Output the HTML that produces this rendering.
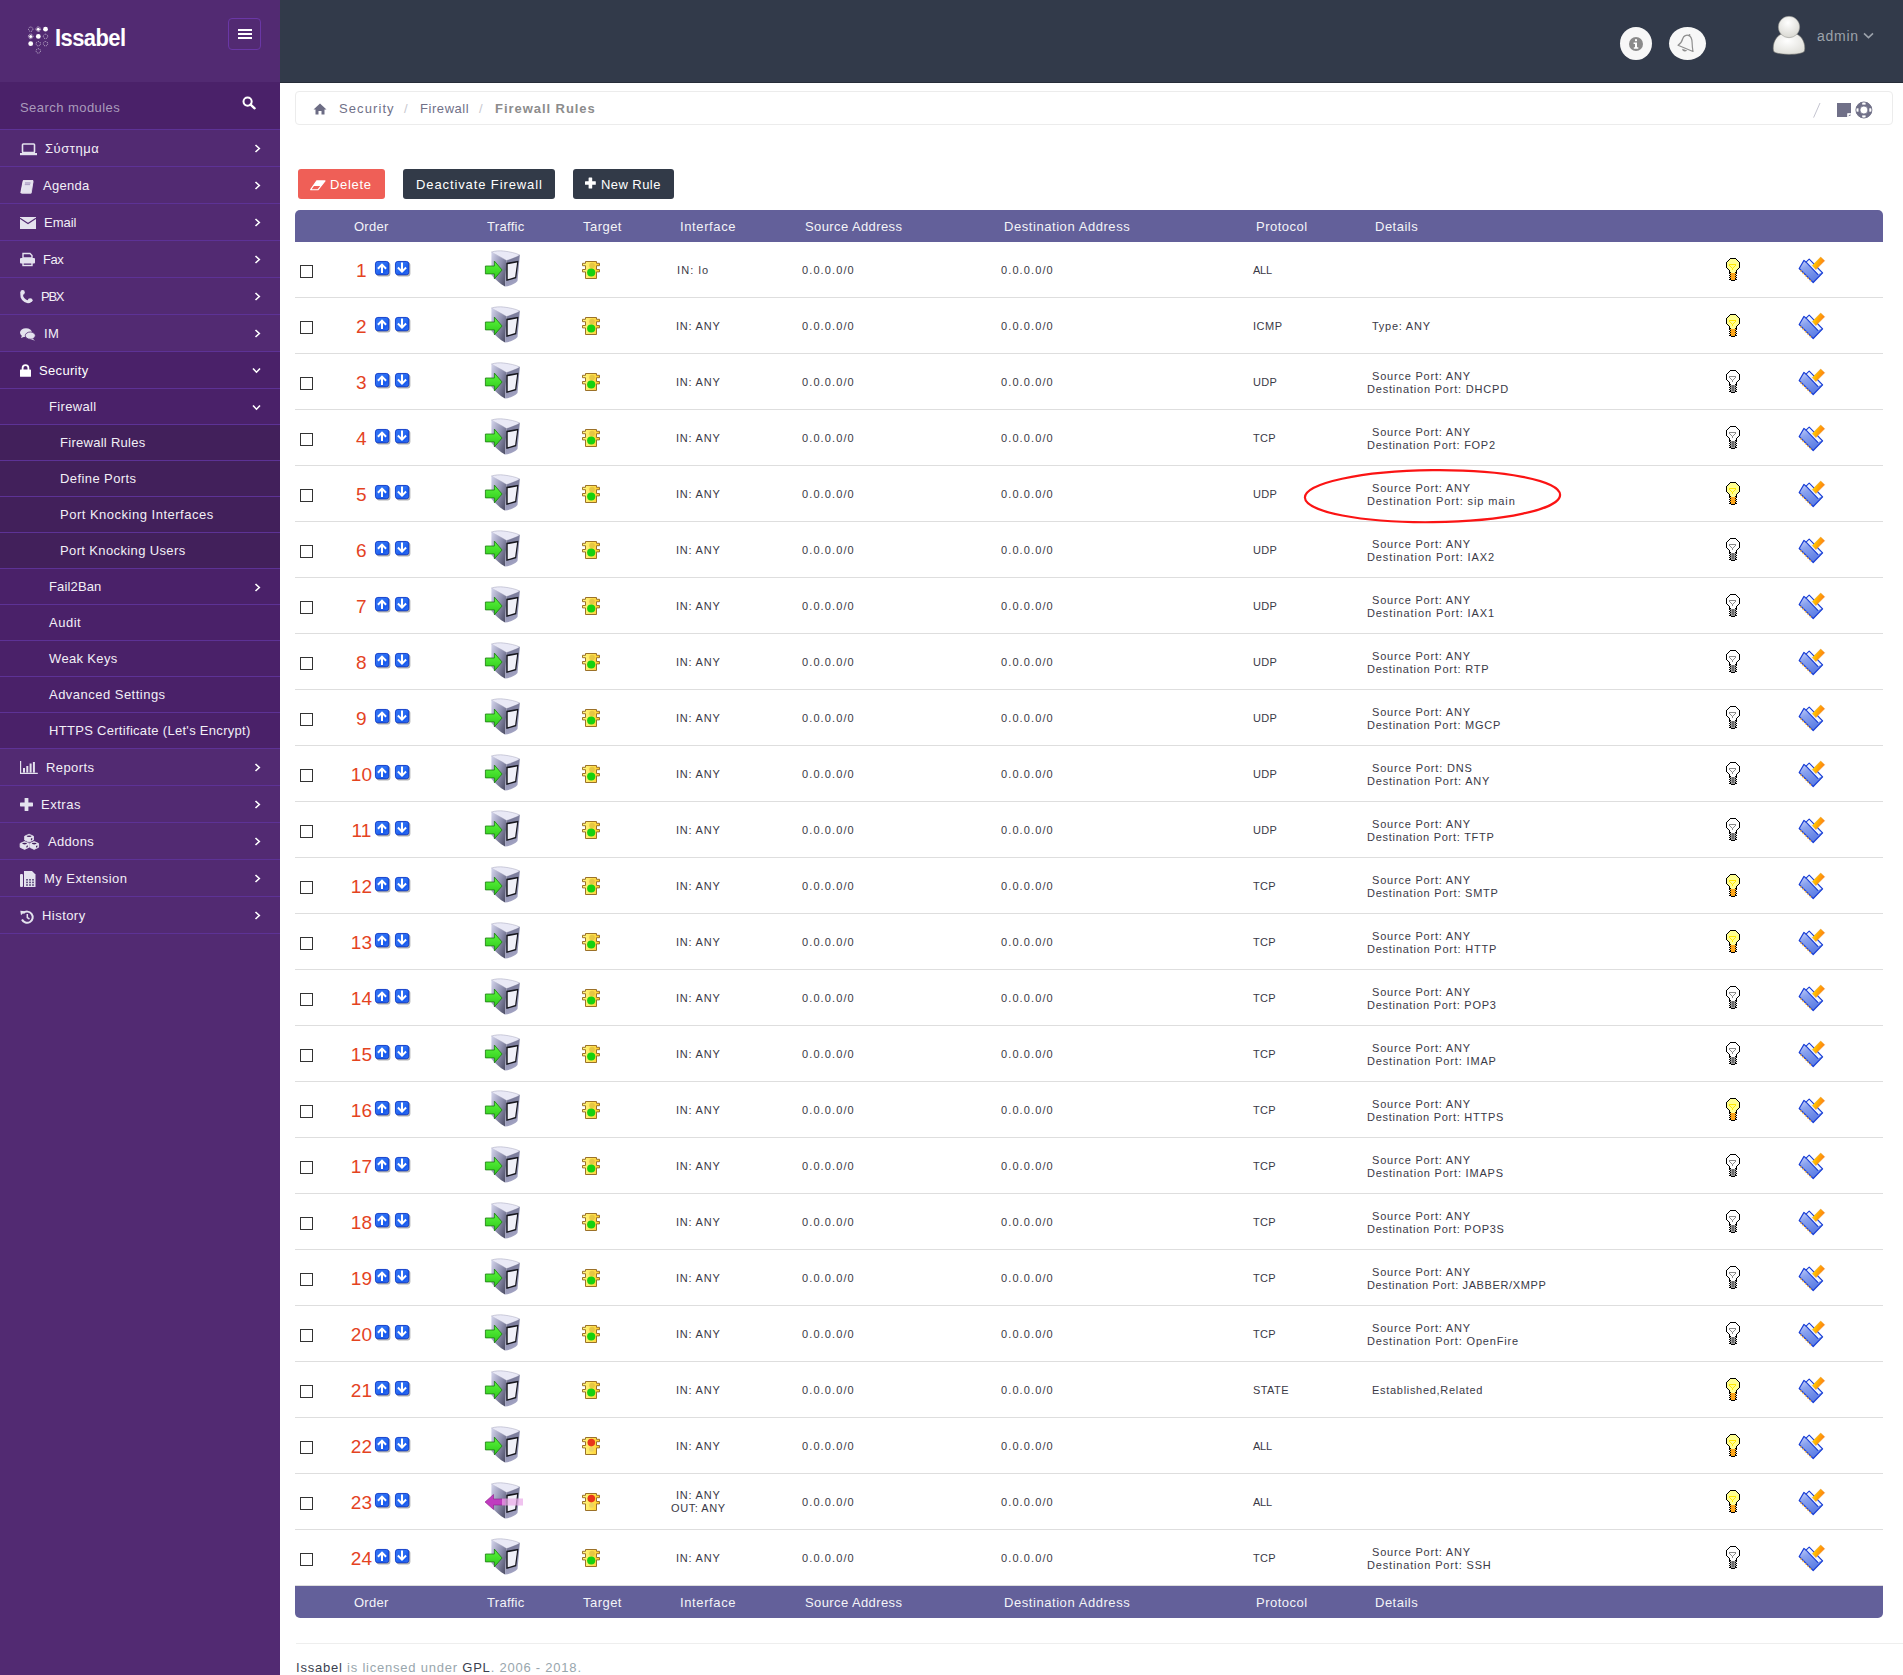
<!DOCTYPE html>
<html><head><meta charset="utf-8"><title>Issabel - Firewall Rules</title>
<style>
html,body{margin:0;padding:0;}
body{width:1903px;height:1675px;overflow:hidden;position:relative;background:#fff;font-family:"Liberation Sans", sans-serif;}
.r{position:absolute;box-sizing:content-box;}
.t{position:absolute;white-space:nowrap;font-family:"Liberation Sans", sans-serif;}
svg{display:block;overflow:visible;}
</style></head><body>
<svg style="position:absolute;left:0;top:0" width="0" height="0"><defs><radialGradient id="av1" cx="0.45" cy="0.3" r="0.7"><stop offset="0" stop-color="#ffffff"/><stop offset="1" stop-color="#d9d8d2"/></radialGradient><radialGradient id="av2" cx="0.45" cy="0.35" r="0.75"><stop offset="0" stop-color="#ffffff"/><stop offset="1" stop-color="#dcdbd5"/></radialGradient><linearGradient id="gL" x1="0" y1="0" x2="1" y2="0"><stop offset="0" stop-color="#fffb86"/><stop offset="1" stop-color="#ffcc2a"/></linearGradient><linearGradient id="gA" x1="0" y1="0" x2="1" y2="1"><stop offset="0" stop-color="#2f72f4"/><stop offset="0.45" stop-color="#2a6df2"/><stop offset="0.7" stop-color="#1659ee"/><stop offset="1" stop-color="#3a74f0"/></linearGradient><linearGradient id="gIn" x1="0" y1="0" x2="1" y2="0.8"><stop offset="0" stop-color="#d4d5ec"/><stop offset="0.55" stop-color="#9091b0"/><stop offset="1" stop-color="#4f5068"/></linearGradient><linearGradient id="gFr" x1="0" y1="0" x2="0.3" y2="1"><stop offset="0" stop-color="#6e6f8e"/><stop offset="1" stop-color="#a2a3c2"/></linearGradient><linearGradient id="gAr" x1="0" y1="0" x2="0" y2="1"><stop offset="0" stop-color="#5af53c"/><stop offset="1" stop-color="#2fc81c"/></linearGradient><linearGradient id="gE" x1="0" y1="0" x2="0.5" y2="1"><stop offset="0" stop-color="#d6dcfb"/><stop offset="0.4" stop-color="#8aa2ee"/><stop offset="1" stop-color="#5b7de4"/></linearGradient><linearGradient id="gP" x1="0" y1="0" x2="1" y2="0.4"><stop offset="0" stop-color="#fff600"/><stop offset="0.5" stop-color="#ffb000"/><stop offset="1" stop-color="#ff7a18"/></linearGradient></defs></svg><div class="r" style="left:0px;top:0px;width:280px;height:1675px;background:#522a72;"></div><div class="r" style="left:0px;top:82px;width:280px;height:47px;background:#4a2169;"></div><div class="r" style="left:0px;top:129px;width:280px;height:1px;background:#5d3296;"></div><svg class="r" style="left:20px;top:20px" width="36" height="40" viewBox="0 0 36 40"><circle cx="10.7" cy="9.2" r="2.2" fill="none" stroke="#fff" stroke-width="0.6" stroke-dasharray="1 0.8"/><circle cx="18.3" cy="9.2" r="2.3" fill="none" stroke="#fff" stroke-width="0.7" stroke-dasharray="0.9 0.5"/><circle cx="18.3" cy="9.2" r="1.5" fill="#fff"/><circle cx="25.5" cy="9.2" r="2.4" fill="#fff"/><circle cx="10.7" cy="16.4" r="2.3" fill="none" stroke="#fff" stroke-width="0.7" stroke-dasharray="0.9 0.5"/><circle cx="10.7" cy="16.4" r="1.5" fill="#fff"/><circle cx="18.3" cy="16.4" r="2.4" fill="#fff"/><circle cx="25.5" cy="16.4" r="2.2" fill="none" stroke="#fff" stroke-width="0.6" stroke-dasharray="1 0.8"/><circle cx="10.7" cy="23.7" r="2.4" fill="#fff"/><circle cx="18.3" cy="23.7" r="2.2" fill="none" stroke="#fff" stroke-width="0.6" stroke-dasharray="1 0.8"/><circle cx="25.5" cy="23.7" r="2.2" fill="none" stroke="#fff" stroke-width="0.6" stroke-dasharray="1 0.8"/><circle cx="18.3" cy="30.9" r="2.2" fill="none" stroke="#fff" stroke-width="0.6" stroke-dasharray="1 0.8"/></svg><div class="t" style="left:55px;top:27px;font-size:23px;line-height:23px;color:#fff;letter-spacing:-0.6px;font-weight:bold;transform:scaleX(0.955);transform-origin:0 0;">Issabel</div><div class="r" style="left:228px;top:18px;width:31px;height:30px;border:1px solid #6a37a6;border-radius:4px"></div><div class="r" style="left:238px;top:29px;width:14px;height:2px;background:#fff;"></div><div class="r" style="left:238px;top:33px;width:14px;height:2px;background:#fff;"></div><div class="r" style="left:238px;top:37px;width:14px;height:2px;background:#fff;"></div><div class="t" style="left:20px;top:101px;font-size:13px;line-height:13px;color:#a99bbb;letter-spacing:0.45px;font-weight:normal;">Search modules</div><svg class="r" style="left:242px;top:96px" width="15" height="14" viewBox="0 0 15 14"><circle cx="5.6" cy="5.6" r="4.1" fill="none" stroke="#fff" stroke-width="2"/><line x1="8.6" y1="8.6" x2="12.6" y2="12.3" stroke="#fff" stroke-width="2.4" stroke-linecap="round"/></svg><div class="r" style="left:0px;top:166px;width:280px;height:1px;background:#5d3296;"></div><svg class="r" style="left:20px;top:143px" width="17" height="13" viewBox="0 0 17 13"><rect x="2.5" y="1" width="12" height="8.5" rx="0.8" fill="none" stroke="#e4e2ee" stroke-width="1.6"/><rect x="0" y="10" width="17" height="2.2" fill="#e4e2ee"/></svg><div class="t" style="left:45px;top:142px;font-size:13px;line-height:13px;color:#f2eff7;letter-spacing:0.53px;font-weight:normal;">Σύστημα</div><svg class="r" style="left:254px;top:144px" width="7" height="9" viewBox="0 0 7 9"><polyline points="1.5,1 5.3,4.5 1.5,8" fill="none" stroke="#fff" stroke-width="1.6"/></svg><div class="r" style="left:0px;top:203px;width:280px;height:1px;background:#5d3296;"></div><svg class="r" style="left:20px;top:180px" width="14" height="14" viewBox="0 0 14 14"><path d="M3.2 0.6 H13 L10.6 12.8 H0.8 Z" fill="#e4e2ee" stroke="#fff" stroke-width="0.8"/><path d="M13 1.5 L11.2 13.2 H1.5" fill="none" stroke="#e4e2ee" stroke-width="0.9"/><rect x="5" y="2.5" width="5.5" height="1" fill="#9a88b6"/><rect x="4.8" y="4.3" width="5.2" height="0.8" fill="#9a88b6"/></svg><div class="t" style="left:43px;top:179px;font-size:13px;line-height:13px;color:#f2eff7;letter-spacing:0.26px;font-weight:normal;">Agenda</div><svg class="r" style="left:254px;top:181px" width="7" height="9" viewBox="0 0 7 9"><polyline points="1.5,1 5.3,4.5 1.5,8" fill="none" stroke="#fff" stroke-width="1.6"/></svg><div class="r" style="left:0px;top:240px;width:280px;height:1px;background:#5d3296;"></div><svg class="r" style="left:20px;top:217px" width="16" height="12" viewBox="0 0 16 12"><rect x="0" y="0" width="16" height="12" fill="#e4e2ee"/><polyline points="0,1.3 8,6.5 16,1.3" fill="none" stroke="#522a72" stroke-width="1.1"/></svg><div class="t" style="left:44px;top:216px;font-size:13px;line-height:13px;color:#f2eff7;letter-spacing:0.0px;font-weight:normal;">Email</div><svg class="r" style="left:254px;top:218px" width="7" height="9" viewBox="0 0 7 9"><polyline points="1.5,1 5.3,4.5 1.5,8" fill="none" stroke="#fff" stroke-width="1.6"/></svg><div class="r" style="left:0px;top:277px;width:280px;height:1px;background:#5d3296;"></div><svg class="r" style="left:20px;top:253px" width="15" height="13" viewBox="0 0 15 13"><path d="M3 0.5 H10 L12 2.5 V5 H3 Z" fill="none" stroke="#e4e2ee" stroke-width="1.4"/><rect x="0" y="5" width="15" height="5.5" rx="1" fill="#e4e2ee"/><rect x="3" y="9" width="9" height="3.5" fill="none" stroke="#e4e2ee" stroke-width="1.4"/></svg><div class="t" style="left:43px;top:253px;font-size:13px;line-height:13px;color:#f2eff7;letter-spacing:-0.5px;font-weight:normal;">Fax</div><svg class="r" style="left:254px;top:255px" width="7" height="9" viewBox="0 0 7 9"><polyline points="1.5,1 5.3,4.5 1.5,8" fill="none" stroke="#fff" stroke-width="1.6"/></svg><div class="r" style="left:0px;top:314px;width:280px;height:1px;background:#5d3296;"></div><svg class="r" style="left:20px;top:290px" width="14" height="14" viewBox="0 0 14 14"><path d="M2.3 2.2 C0.8 5.5 2.2 9 5.2 10.8 C7.2 12 9 12 10.4 10.6" fill="none" stroke="#e4e2ee" stroke-width="3" stroke-linecap="round"/><ellipse cx="2.6" cy="2.4" rx="2.2" ry="2.3" fill="#e4e2ee"/><ellipse cx="10.2" cy="10.3" rx="2.4" ry="2" fill="#e4e2ee"/></svg><div class="t" style="left:41px;top:290px;font-size:13px;line-height:13px;color:#f2eff7;letter-spacing:-1.28px;font-weight:normal;">PBX</div><svg class="r" style="left:254px;top:292px" width="7" height="9" viewBox="0 0 7 9"><polyline points="1.5,1 5.3,4.5 1.5,8" fill="none" stroke="#fff" stroke-width="1.6"/></svg><div class="r" style="left:0px;top:351px;width:280px;height:1px;background:#5d3296;"></div><svg class="r" style="left:20px;top:328px" width="16" height="13" viewBox="0 0 16 13"><ellipse cx="6" cy="4.6" rx="6" ry="4.3" fill="#e4e2ee"/><path d="M2 7.5 L1 10 L5 8.6 Z" fill="#e4e2ee"/><ellipse cx="10.3" cy="7.6" rx="5" ry="3.6" fill="#e4e2ee" stroke="#522a72" stroke-width="0.8"/><path d="M12.5 10.5 L15 12.8 L10.5 11 Z" fill="#e4e2ee"/></svg><div class="t" style="left:44px;top:327px;font-size:13px;line-height:13px;color:#f2eff7;letter-spacing:0.4px;font-weight:normal;">IM</div><svg class="r" style="left:254px;top:329px" width="7" height="9" viewBox="0 0 7 9"><polyline points="1.5,1 5.3,4.5 1.5,8" fill="none" stroke="#fff" stroke-width="1.6"/></svg><div class="r" style="left:0px;top:352px;width:280px;height:36px;background:#4a2169;"></div><div class="r" style="left:0px;top:388px;width:280px;height:1px;background:#5d3296;"></div><svg class="r" style="left:20px;top:364px" width="11" height="13" viewBox="0 0 11 13"><path d="M2.6 6 V4 A2.9 2.9 0 0 1 8.4 4 V6" fill="none" stroke="#fff" stroke-width="1.8"/><rect x="0" y="5.6" width="11" height="7.2" rx="0.6" fill="#fff"/></svg><div class="t" style="left:39px;top:364px;font-size:13px;line-height:13px;color:#fff;letter-spacing:0.33px;font-weight:normal;">Security</div><svg class="r" style="left:252px;top:367px" width="9" height="7" viewBox="0 0 9 7"><polyline points="1,1.5 4.5,5.2 8,1.5" fill="none" stroke="#fff" stroke-width="1.6"/></svg><div class="r" style="left:0px;top:389px;width:280px;height:35px;background:#4a2169;"></div><div class="r" style="left:0px;top:424px;width:280px;height:1px;background:#5d3296;"></div><div class="t" style="left:49px;top:400px;font-size:13px;line-height:13px;color:#f2eff7;letter-spacing:0.34px;font-weight:normal;">Firewall</div><svg class="r" style="left:252px;top:404px" width="9" height="7" viewBox="0 0 9 7"><polyline points="1,1.5 4.5,5.2 8,1.5" fill="none" stroke="#fff" stroke-width="1.6"/></svg><div class="r" style="left:0px;top:425px;width:280px;height:35px;background:#42205b;"></div><div class="r" style="left:0px;top:460px;width:280px;height:1px;background:#5d3296;"></div><div class="t" style="left:60px;top:436px;font-size:13px;line-height:13px;color:#f2eff7;letter-spacing:0.28px;font-weight:normal;">Firewall Rules</div><div class="r" style="left:0px;top:461px;width:280px;height:35px;background:#42205b;"></div><div class="r" style="left:0px;top:496px;width:280px;height:1px;background:#5d3296;"></div><div class="t" style="left:60px;top:472px;font-size:13px;line-height:13px;color:#f2eff7;letter-spacing:0.41px;font-weight:normal;">Define Ports</div><div class="r" style="left:0px;top:497px;width:280px;height:35px;background:#42205b;"></div><div class="r" style="left:0px;top:532px;width:280px;height:1px;background:#5d3296;"></div><div class="t" style="left:60px;top:508px;font-size:13px;line-height:13px;color:#f2eff7;letter-spacing:0.5px;font-weight:normal;">Port Knocking Interfaces</div><div class="r" style="left:0px;top:533px;width:280px;height:35px;background:#42205b;"></div><div class="r" style="left:0px;top:568px;width:280px;height:1px;background:#5d3296;"></div><div class="t" style="left:60px;top:544px;font-size:13px;line-height:13px;color:#f2eff7;letter-spacing:0.37px;font-weight:normal;">Port Knocking Users</div><div class="r" style="left:0px;top:569px;width:280px;height:35px;background:#4a2169;"></div><div class="r" style="left:0px;top:604px;width:280px;height:1px;background:#5d3296;"></div><div class="t" style="left:49px;top:580px;font-size:13px;line-height:13px;color:#f2eff7;letter-spacing:0.14px;font-weight:normal;">Fail2Ban</div><svg class="r" style="left:254px;top:583px" width="7" height="9" viewBox="0 0 7 9"><polyline points="1.5,1 5.3,4.5 1.5,8" fill="none" stroke="#fff" stroke-width="1.6"/></svg><div class="r" style="left:0px;top:605px;width:280px;height:35px;background:#4a2169;"></div><div class="r" style="left:0px;top:640px;width:280px;height:1px;background:#5d3296;"></div><div class="t" style="left:49px;top:616px;font-size:13px;line-height:13px;color:#f2eff7;letter-spacing:0.5px;font-weight:normal;">Audit</div><div class="r" style="left:0px;top:641px;width:280px;height:35px;background:#4a2169;"></div><div class="r" style="left:0px;top:676px;width:280px;height:1px;background:#5d3296;"></div><div class="t" style="left:49px;top:652px;font-size:13px;line-height:13px;color:#f2eff7;letter-spacing:0.34px;font-weight:normal;">Weak Keys</div><div class="r" style="left:0px;top:677px;width:280px;height:35px;background:#4a2169;"></div><div class="r" style="left:0px;top:712px;width:280px;height:1px;background:#5d3296;"></div><div class="t" style="left:49px;top:688px;font-size:13px;line-height:13px;color:#f2eff7;letter-spacing:0.48px;font-weight:normal;">Advanced Settings</div><div class="r" style="left:0px;top:713px;width:280px;height:35px;background:#4a2169;"></div><div class="r" style="left:0px;top:748px;width:280px;height:1px;background:#5d3296;"></div><div class="t" style="left:49px;top:724px;font-size:13px;line-height:13px;color:#f2eff7;letter-spacing:0.3px;font-weight:normal;">HTTPS Certificate (Let's Encrypt)</div><div class="r" style="left:0px;top:785px;width:280px;height:1px;background:#5d3296;"></div><svg class="r" style="left:20px;top:761px" width="18" height="13" viewBox="0 0 18 13"><path d="M0.6 0 V12.4 H17.8" fill="none" stroke="#e4e2ee" stroke-width="1.2"/><rect x="3" y="7" width="2" height="4.6" fill="#e4e2ee"/><rect x="6.3" y="5" width="2" height="6.6" fill="#e4e2ee"/><rect x="9.6" y="2.5" width="2" height="9.1" fill="#e4e2ee"/><rect x="12.9" y="1" width="2" height="10.6" fill="#e4e2ee"/></svg><div class="t" style="left:46px;top:761px;font-size:13px;line-height:13px;color:#f2eff7;letter-spacing:0.42px;font-weight:normal;">Reports</div><svg class="r" style="left:254px;top:763px" width="7" height="9" viewBox="0 0 7 9"><polyline points="1.5,1 5.3,4.5 1.5,8" fill="none" stroke="#fff" stroke-width="1.6"/></svg><div class="r" style="left:0px;top:822px;width:280px;height:1px;background:#5d3296;"></div><svg class="r" style="left:20px;top:798px" width="13" height="13" viewBox="0 0 13 13"><rect x="4.6" y="0" width="3.8" height="13" rx="0.6" fill="#e4e2ee"/><rect x="0" y="4.6" width="13" height="3.8" rx="0.6" fill="#e4e2ee"/></svg><div class="t" style="left:41px;top:798px;font-size:13px;line-height:13px;color:#f2eff7;letter-spacing:0.52px;font-weight:normal;">Extras</div><svg class="r" style="left:254px;top:800px" width="7" height="9" viewBox="0 0 7 9"><polyline points="1.5,1 5.3,4.5 1.5,8" fill="none" stroke="#fff" stroke-width="1.6"/></svg><div class="r" style="left:0px;top:859px;width:280px;height:1px;background:#5d3296;"></div><svg class="r" style="left:19px;top:834px" width="21" height="16" viewBox="0 0 21 16"><g transform="translate(5.3 0)"><path d="M0.3 2.2 L4.75 0.2 L9.2 2.2 V6 L4.75 8.1 L0.3 6 Z" fill="#e4e2ee" stroke="#e4e2ee" stroke-width="0.8" stroke-linejoin="round"/><ellipse cx="4.8" cy="2.3" rx="2.4" ry="0.8" fill="#43205e"/><path d="M6.6 4.6 L8 3.9 V5.6 L6.6 6.5 Z" fill="#43205e"/></g><g transform="translate(0.8 7.3)"><path d="M0.3 2.2 L4.75 0.2 L9.2 2.2 V6 L4.75 8.1 L0.3 6 Z" fill="#e4e2ee" stroke="#e4e2ee" stroke-width="0.8" stroke-linejoin="round"/><ellipse cx="4.8" cy="2.3" rx="2.4" ry="0.8" fill="#43205e"/><path d="M6.6 4.6 L8 3.9 V5.6 L6.6 6.5 Z" fill="#43205e"/></g><g transform="translate(10.4 7.3)"><path d="M0.3 2.2 L4.75 0.2 L9.2 2.2 V6 L4.75 8.1 L0.3 6 Z" fill="#e4e2ee" stroke="#e4e2ee" stroke-width="0.8" stroke-linejoin="round"/><ellipse cx="4.8" cy="2.3" rx="2.4" ry="0.8" fill="#43205e"/><path d="M6.6 4.6 L8 3.9 V5.6 L6.6 6.5 Z" fill="#43205e"/></g></svg><div class="t" style="left:48px;top:835px;font-size:13px;line-height:13px;color:#f2eff7;letter-spacing:0.32px;font-weight:normal;">Addons</div><svg class="r" style="left:254px;top:837px" width="7" height="9" viewBox="0 0 7 9"><polyline points="1.5,1 5.3,4.5 1.5,8" fill="none" stroke="#fff" stroke-width="1.6"/></svg><div class="r" style="left:0px;top:896px;width:280px;height:1px;background:#5d3296;"></div><svg class="r" style="left:20px;top:871px" width="16" height="16" viewBox="0 0 16 16"><rect x="0" y="3" width="3" height="13" rx="1" fill="#e4e2ee"/><path d="M4 0 H12 L15.5 3.5 V16 H4 Z" fill="#e4e2ee"/><g fill="#6a5a88"><rect x="6" y="8" width="2" height="1.6"/><rect x="9" y="8" width="2" height="1.6"/><rect x="12" y="8" width="2" height="1.6"/><rect x="6" y="10.6" width="2" height="1.6"/><rect x="9" y="10.6" width="2" height="1.6"/><rect x="12" y="10.6" width="2" height="1.6"/><rect x="6" y="13.2" width="2" height="1.6"/><rect x="9" y="13.2" width="2" height="1.6"/><rect x="12" y="13.2" width="2" height="1.6"/></g></svg><div class="t" style="left:44px;top:872px;font-size:13px;line-height:13px;color:#f2eff7;letter-spacing:0.45px;font-weight:normal;">My Extension</div><svg class="r" style="left:254px;top:874px" width="7" height="9" viewBox="0 0 7 9"><polyline points="1.5,1 5.3,4.5 1.5,8" fill="none" stroke="#fff" stroke-width="1.6"/></svg><div class="r" style="left:0px;top:933px;width:280px;height:1px;background:#5d3296;"></div><svg class="r" style="left:20px;top:910px" width="14" height="14" viewBox="0 0 14 14"><path d="M3.2 3.2 A5.6 5.6 0 1 1 2 9.5" fill="none" stroke="#e4e2ee" stroke-width="2"/><path d="M0.3 0.8 L5.2 1.2 L1 5.2 Z" fill="#e4e2ee"/><path d="M7.3 4 V7.6 L9.5 9" fill="none" stroke="#e4e2ee" stroke-width="1.5"/></svg><div class="t" style="left:42px;top:909px;font-size:13px;line-height:13px;color:#f2eff7;letter-spacing:0.45px;font-weight:normal;">History</div><svg class="r" style="left:254px;top:911px" width="7" height="9" viewBox="0 0 7 9"><polyline points="1.5,1 5.3,4.5 1.5,8" fill="none" stroke="#fff" stroke-width="1.6"/></svg><div class="r" style="left:280px;top:0px;width:1623px;height:82px;background:#323a4a;"></div><div class="r" style="left:280px;top:82px;width:1623px;height:1px;background:#262c38;"></div><div class="r" style="left:1620px;top:27px;width:32px;height:33px;border-radius:50%;background:#f7f7f7"></div><svg class="r" style="left:1628px;top:36px" width="16" height="16" viewBox="0 0 16 16"><circle cx="8" cy="8" r="7" fill="#8a8a8a"/><rect x="7" y="3.2" width="2" height="2" fill="#fff"/><path d="M5.6 6.5 H9 V11.3 H10.3 V12.8 H5.8 V11.3 H7 V8 H5.6 Z" fill="#fff"/></svg><div class="r" style="left:1669px;top:27px;width:37px;height:33px;border-radius:50%;background:#f7f7f7"></div><svg class="r" style="left:1676px;top:33px" width="22" height="22" viewBox="0 0 22 22"><path d="M2 12.2 C5 10.5 6 8.5 6.8 5.5 C7.6 2.8 10.5 1.5 13 2.6 C15.8 3.8 16 6.5 16.1 9.5 C16.2 13 16.5 16 17 18.5 Z" fill="none" stroke="#8f8f8f" stroke-width="1.2" stroke-linejoin="round"/><circle cx="13.5" cy="2" r="0.9" fill="#8f8f8f"/><path d="M6.2 15.8 C6 18.3 8.8 19.6 11.3 17.6 Z" fill="#8f8f8f"/></svg><svg class="r" style="left:1770px;top:14px" width="38" height="44" viewBox="0 0 38 44"><path d="M3.5 37 C2 30 6 21 13 19.5 L25 19.5 C32 21 36 30 34.5 37 C33 41.5 5 41.5 3.5 37 Z" fill="url(#av2)" stroke="#6d6d6a" stroke-width="0.6"/><circle cx="19" cy="13" r="10.7" fill="url(#av1)" stroke="#8a8a86" stroke-width="0.5"/></svg><div class="t" style="left:1817px;top:29px;font-size:14px;line-height:14px;color:#9ca2ab;letter-spacing:0.75px;font-weight:normal;">admin</div><svg class="r" style="left:1863px;top:32px" width="11" height="7" viewBox="0 0 11 7"><polyline points="1,1.4 5.5,5.6 10,1.4" fill="none" stroke="#9ca2ab" stroke-width="1.6"/></svg><div class="r" style="left:295px;top:91px;width:1596px;height:32px;border:1px solid #ececec;border-radius:4px;background:#fff"></div><svg class="r" style="left:313px;top:103px" width="14" height="12" viewBox="0 0 14 12"><path d="M7 0.5 L13.5 6.5 H11.5 V11.5 H8.5 V8 H5.5 V11.5 H2.5 V6.5 H0.5 Z" fill="#6c6c84"/></svg><div class="t" style="left:339px;top:102px;font-size:13px;line-height:13px;color:#707088;letter-spacing:1.09px;font-weight:normal;">Security</div><div class="t" style="left:404px;top:102px;font-size:13px;line-height:13px;color:#c8c8d0;letter-spacing:0px;font-weight:normal;">/</div><div class="t" style="left:420px;top:102px;font-size:13px;line-height:13px;color:#707088;letter-spacing:0.56px;font-weight:normal;">Firewall</div><div class="t" style="left:479px;top:102px;font-size:13px;line-height:13px;color:#c8c8d0;letter-spacing:0px;font-weight:normal;">/</div><div class="t" style="left:495px;top:102px;font-size:13px;line-height:13px;color:#8c8c8c;letter-spacing:0.95px;font-weight:bold;">Firewall Rules</div><svg class="r" style="left:1810px;top:100px" width="80" height="22" viewBox="0 0 80 22"><line x1="3.6" y1="17.6" x2="10" y2="3" stroke="#c4c4d0" stroke-width="1"/><path d="M27 3 H41 V13.5 L37.5 17 H27 Z" fill="#707088"/><path d="M37.6 17 V13.6 H41" fill="#fff" stroke="#fff" stroke-width="0.8"/><path d="M38.6 16 L40.4 14.2 V16 Z" fill="#707088"/><circle cx="53.9" cy="10" r="6.1" fill="none" stroke="#707088" stroke-width="4.2"/><rect x="52.2" y="1.4" width="3.4" height="3.2" fill="#fff"/><rect x="52.2" y="15.4" width="3.4" height="3.2" fill="#fff"/><rect x="45.3" y="8.3" width="3.2" height="3.4" fill="#fff"/><rect x="59.3" y="8.3" width="3.2" height="3.4" fill="#fff"/><circle cx="53.9" cy="10" r="8" fill="none" stroke="#707088" stroke-width="0.9"/><circle cx="53.9" cy="10" r="4" fill="none" stroke="#707088" stroke-width="0.8"/></svg><div class="r" style="left:298px;top:169px;width:87px;height:30px;border-radius:3px;background:#ef5f57"></div><svg class="r" style="left:310px;top:180px" width="16" height="11" viewBox="0 0 16 11"><path d="M6.8 0.9 H15 L8.1 9.7 H0.7 Z" fill="none" stroke="#fff" stroke-width="1.15" stroke-linejoin="round"/><path d="M6.8 0.9 H15 L10.9 6.1 H3.2 Z" fill="#fff"/></svg><div class="t" style="left:330px;top:178px;font-size:13px;line-height:13px;color:#fff;letter-spacing:0.66px;font-weight:normal;">Delete</div><div class="r" style="left:403px;top:169px;width:152px;height:30px;border-radius:3px;background:#323a48"></div><div class="t" style="left:416px;top:178px;font-size:13px;line-height:13px;color:#fff;letter-spacing:0.89px;font-weight:normal;">Deactivate Firewall</div><div class="r" style="left:573px;top:169px;width:101px;height:30px;border-radius:3px;background:#323a48"></div><svg class="r" style="left:585px;top:177px" width="11" height="12" viewBox="0 0 11 12"><rect x="3.6" y="0.5" width="3.6" height="11" rx="0.5" fill="#fff"/><rect x="0" y="4.2" width="10.8" height="3.6" rx="0.5" fill="#fff"/></svg><div class="t" style="left:601px;top:178px;font-size:13px;line-height:13px;color:#fff;letter-spacing:0.43px;font-weight:normal;">New Rule</div><div class="r" style="left:295px;top:210px;width:1588px;height:32px;background:#63609a;border-radius:5px 5px 0 0;"></div><div class="t" style="left:354px;top:220px;font-size:13px;line-height:13px;color:#f4f4f8;letter-spacing:0.25px;font-weight:normal;">Order</div><div class="t" style="left:487px;top:220px;font-size:13px;line-height:13px;color:#f4f4f8;letter-spacing:0.31px;font-weight:normal;">Traffic</div><div class="t" style="left:583px;top:220px;font-size:13px;line-height:13px;color:#f4f4f8;letter-spacing:0.46px;font-weight:normal;">Target</div><div class="t" style="left:680px;top:220px;font-size:13px;line-height:13px;color:#f4f4f8;letter-spacing:0.62px;font-weight:normal;">Interface</div><div class="t" style="left:805px;top:220px;font-size:13px;line-height:13px;color:#f4f4f8;letter-spacing:0.4px;font-weight:normal;">Source Address</div><div class="t" style="left:1004px;top:220px;font-size:13px;line-height:13px;color:#f4f4f8;letter-spacing:0.56px;font-weight:normal;">Destination Address</div><div class="t" style="left:1256px;top:220px;font-size:13px;line-height:13px;color:#f4f4f8;letter-spacing:0.5px;font-weight:normal;">Protocol</div><div class="t" style="left:1375px;top:220px;font-size:13px;line-height:13px;color:#f4f4f8;letter-spacing:0.5px;font-weight:normal;">Details</div><div class="r" style="left:295px;top:1586px;width:1588px;height:32px;background:#63609a;border-radius:0 0 5px 5px;"></div><div class="t" style="left:354px;top:1596px;font-size:13px;line-height:13px;color:#f4f4f8;letter-spacing:0.25px;font-weight:normal;">Order</div><div class="t" style="left:487px;top:1596px;font-size:13px;line-height:13px;color:#f4f4f8;letter-spacing:0.31px;font-weight:normal;">Traffic</div><div class="t" style="left:583px;top:1596px;font-size:13px;line-height:13px;color:#f4f4f8;letter-spacing:0.46px;font-weight:normal;">Target</div><div class="t" style="left:680px;top:1596px;font-size:13px;line-height:13px;color:#f4f4f8;letter-spacing:0.62px;font-weight:normal;">Interface</div><div class="t" style="left:805px;top:1596px;font-size:13px;line-height:13px;color:#f4f4f8;letter-spacing:0.4px;font-weight:normal;">Source Address</div><div class="t" style="left:1004px;top:1596px;font-size:13px;line-height:13px;color:#f4f4f8;letter-spacing:0.56px;font-weight:normal;">Destination Address</div><div class="t" style="left:1256px;top:1596px;font-size:13px;line-height:13px;color:#f4f4f8;letter-spacing:0.5px;font-weight:normal;">Protocol</div><div class="t" style="left:1375px;top:1596px;font-size:13px;line-height:13px;color:#f4f4f8;letter-spacing:0.5px;font-weight:normal;">Details</div><div class="r" style="left:295px;top:297px;width:1588px;height:1px;background:#dedede;"></div><div class="r" style="left:300px;top:265px;width:11px;height:11px;border:1px solid #333;background:#fff"></div><div class="t" style="left:341px;top:261px;width:41px;text-align:center;font-size:19px;line-height:19px;color:#e4431f;letter-spacing:0.2px">1</div><svg class="r" style="left:375px;top:261px" width="16" height="16" viewBox="0 0 16 16"><rect x="1.4" y="1.4" width="14" height="14" rx="2.4" fill="#555" opacity="0.45"/><rect x="0.45" y="0.45" width="13.3" height="13.3" rx="2.4" fill="url(#gA)" stroke="#0a35c6" stroke-width="0.9"/><path d="M7 2.3 L2.2 7.1 L3.6 8.5 L6 6.1 V12 H8 V6.1 L10.4 8.5 L11.8 7.1 Z" fill="#fff"/></svg><svg class="r" style="left:395px;top:261px" width="16" height="16" viewBox="0 0 16 16"><rect x="1.4" y="1.4" width="14" height="14" rx="2.4" fill="#555" opacity="0.45"/><rect x="0.45" y="0.45" width="13.3" height="13.3" rx="2.4" fill="url(#gA)" stroke="#0a35c6" stroke-width="0.9"/><path d="M7 12 L2.2 7.2 L3.6 5.8 L6 8.2 V1.5 H8 V8.2 L10.4 5.8 L11.8 7.2 Z" fill="#fff"/></svg><svg class="r" style="left:483px;top:245px" width="40" height="44" viewBox="0 0 40 44"><path d="M8.4 7.1 C12 5.8 17 5.6 20.4 6 C27 6.8 33 8 36.8 10.1 C33 12.5 27 14.5 23.5 15.5 C18 12 12 9.5 8.4 7.1 Z" fill="#e9e9f6" stroke="#a0a0b8" stroke-width="0.5"/><path d="M8.4 7.1 C12 9.5 18 12 23.5 15.5 L22 41.6 C17 39 12 34 8.4 30 Z" fill="url(#gIn)"/><path d="M23.5 15.5 C27 14.5 33 12.5 36.8 10.1 L34.5 36 C32 39 27 41 22 41.6 Z" fill="url(#gFr)"/><path d="M23.3 17.8 L35.4 15.8 L33.2 33.3 L23.3 36 Z" fill="#15151c"/><path d="M24.7 19.2 L34.1 17.5 L32.1 32.1 L24.7 34.3 Z" fill="#f0f0f8"/><path d="M2.4 21 H11.4 V16.1 L19.1 25 L11.4 33.9 V28.9 H2.4 Z" fill="url(#gAr)" stroke="#1b7a10" stroke-width="0.8" stroke-linejoin="round"/></svg><svg class="r" style="left:582px;top:261px" width="19" height="19" viewBox="0 0 19 19"><path d="M3.5 0.5 H14.5 V2.3 H17.5 V4.7 H14.5 V8.5 H17.5 V10.9 H14.5 V17.5 H3.5 V10.9 H0.5 V8.5 H3.5 V4.7 H0.5 V2.3 H3.5 Z" fill="url(#gL)" stroke="#9b7128" stroke-width="1"/><circle cx="10" cy="4.6" r="2.8" fill="#e0c040" opacity="0.8"/><circle cx="9.2" cy="11.5" r="4.1" fill="#17d10f"/></svg><div class="t" style="left:677px;top:265px;font-size:11px;line-height:11px;color:#3a3946;letter-spacing:1.08px;font-weight:normal;">IN: lo</div><div class="t" style="left:802px;top:265px;font-size:11px;line-height:11px;color:#3a3946;letter-spacing:1.11px;font-weight:normal;">0.0.0.0/0</div><div class="t" style="left:1001px;top:265px;font-size:11px;line-height:11px;color:#3a3946;letter-spacing:1.11px;font-weight:normal;">0.0.0.0/0</div><div class="t" style="left:1253px;top:265px;font-size:11px;line-height:11px;color:#3a3946;letter-spacing:-0.25px;font-weight:normal;">ALL</div><svg class="r" style="left:1726px;top:258px" width="14" height="23" viewBox="0 0 14 23" shape-rendering="crispEdges"><rect x="4" y="1" width="6" height="1" fill="#ffff90"/><rect x="3" y="2" width="8" height="1" fill="#ffff90"/><rect x="2" y="3" width="10" height="1" fill="#ffff90"/><rect x="1" y="4" width="12" height="6" fill="#ffff90"/><rect x="2" y="10" width="10" height="1" fill="#ffff90"/><rect x="3" y="11" width="8" height="1" fill="#ffff90"/><rect x="4" y="12" width="6" height="3" fill="#ffff90"/><rect x="4" y="15" width="6" height="7" fill="#ffa81a"/><rect x="5" y="21" width="4" height="1" fill="#ffa81a"/><rect x="3" y="6" width="7" height="1" fill="#ffe800"/><rect x="3" y="7" width="1" height="1" fill="#ffe800"/><rect x="9" y="7" width="1" height="1" fill="#ffe800"/><rect x="4" y="8" width="1" height="1" fill="#ffe800"/><rect x="8" y="8" width="1" height="1" fill="#ffe800"/><rect x="5" y="9" width="1" height="1" fill="#ffe800"/><rect x="7" y="9" width="1" height="1" fill="#ffe800"/><rect x="6" y="10" width="1" height="2" fill="#ffe800"/><rect x="4" y="0" width="6" height="1" fill="#000"/><rect x="3" y="1" width="1" height="1" fill="#000"/><rect x="10" y="1" width="1" height="1" fill="#000"/><rect x="2" y="2" width="1" height="1" fill="#000"/><rect x="11" y="2" width="1" height="1" fill="#000"/><rect x="1" y="3" width="1" height="1" fill="#000"/><rect x="12" y="3" width="1" height="1" fill="#000"/><rect x="0" y="4" width="1" height="6" fill="#000"/><rect x="13" y="4" width="1" height="6" fill="#000"/><rect x="1" y="10" width="1" height="1" fill="#000"/><rect x="12" y="10" width="1" height="1" fill="#000"/><rect x="2" y="11" width="1" height="1" fill="#000"/><rect x="11" y="11" width="1" height="1" fill="#000"/><rect x="3" y="12" width="1" height="3" fill="#000"/><rect x="10" y="12" width="1" height="3" fill="#000"/><rect x="4" y="14" width="1" height="1" fill="#000"/><rect x="9" y="14" width="1" height="1" fill="#000"/><rect x="3" y="15" width="1" height="1" fill="#000"/><rect x="10" y="15" width="1" height="1" fill="#000"/><rect x="4" y="16" width="1" height="1" fill="#000"/><rect x="9" y="16" width="1" height="1" fill="#000"/><rect x="3" y="17" width="1" height="1" fill="#000"/><rect x="10" y="17" width="1" height="1" fill="#000"/><rect x="4" y="18" width="1" height="1" fill="#000"/><rect x="9" y="18" width="1" height="1" fill="#000"/><rect x="3" y="19" width="1" height="1" fill="#000"/><rect x="10" y="19" width="1" height="1" fill="#000"/><rect x="4" y="20" width="1" height="1" fill="#000"/><rect x="9" y="20" width="1" height="1" fill="#000"/><rect x="3" y="21" width="1" height="1" fill="#000"/><rect x="10" y="21" width="1" height="1" fill="#000"/><rect x="4" y="21" width="1" height="1" fill="#000"/><rect x="9" y="21" width="1" height="1" fill="#000"/><rect x="5" y="22" width="4" height="1" fill="#000"/></svg><svg class="r" style="left:1795px;top:252px" width="32" height="34" viewBox="0 0 32 34"><path d="M4.2 16.5 L9 8.4 L11.1 10.2 L14.2 7.1 L27.6 20.9 L18.2 30.5 Z" fill="url(#gE)" stroke="#1a3fd6" stroke-width="1.2" stroke-linejoin="round"/><path d="M11.6 10.4 L14.2 8.1 L26.4 20.8 L23.3 22.2 Z" fill="#eef4ff"/><path d="M11.1 10.2 L23 22.6" stroke="#1a3fd6" stroke-width="1.1"/><path d="M17.3 13.6 L25.7 5 L29.7 8.8 L20.9 17.6 Z" fill="url(#gP)" stroke="#e0901e" stroke-width="0.4"/><g fill="#f6b03a"><rect x="5.2" y="18.2" width="1.5" height="1.5"/><rect x="7.5" y="20.6" width="1.5" height="1.5"/><rect x="9.9" y="23" width="1.5" height="1.5"/><rect x="12.3" y="25.4" width="1.5" height="1.5"/><rect x="14.7" y="27.8" width="1.5" height="1.5"/></g></svg><div class="r" style="left:295px;top:353px;width:1588px;height:1px;background:#dedede;"></div><div class="r" style="left:300px;top:321px;width:11px;height:11px;border:1px solid #333;background:#fff"></div><div class="t" style="left:341px;top:317px;width:41px;text-align:center;font-size:19px;line-height:19px;color:#e4431f;letter-spacing:0.2px">2</div><svg class="r" style="left:375px;top:317px" width="16" height="16" viewBox="0 0 16 16"><rect x="1.4" y="1.4" width="14" height="14" rx="2.4" fill="#555" opacity="0.45"/><rect x="0.45" y="0.45" width="13.3" height="13.3" rx="2.4" fill="url(#gA)" stroke="#0a35c6" stroke-width="0.9"/><path d="M7 2.3 L2.2 7.1 L3.6 8.5 L6 6.1 V12 H8 V6.1 L10.4 8.5 L11.8 7.1 Z" fill="#fff"/></svg><svg class="r" style="left:395px;top:317px" width="16" height="16" viewBox="0 0 16 16"><rect x="1.4" y="1.4" width="14" height="14" rx="2.4" fill="#555" opacity="0.45"/><rect x="0.45" y="0.45" width="13.3" height="13.3" rx="2.4" fill="url(#gA)" stroke="#0a35c6" stroke-width="0.9"/><path d="M7 12 L2.2 7.2 L3.6 5.8 L6 8.2 V1.5 H8 V8.2 L10.4 5.8 L11.8 7.2 Z" fill="#fff"/></svg><svg class="r" style="left:483px;top:301px" width="40" height="44" viewBox="0 0 40 44"><path d="M8.4 7.1 C12 5.8 17 5.6 20.4 6 C27 6.8 33 8 36.8 10.1 C33 12.5 27 14.5 23.5 15.5 C18 12 12 9.5 8.4 7.1 Z" fill="#e9e9f6" stroke="#a0a0b8" stroke-width="0.5"/><path d="M8.4 7.1 C12 9.5 18 12 23.5 15.5 L22 41.6 C17 39 12 34 8.4 30 Z" fill="url(#gIn)"/><path d="M23.5 15.5 C27 14.5 33 12.5 36.8 10.1 L34.5 36 C32 39 27 41 22 41.6 Z" fill="url(#gFr)"/><path d="M23.3 17.8 L35.4 15.8 L33.2 33.3 L23.3 36 Z" fill="#15151c"/><path d="M24.7 19.2 L34.1 17.5 L32.1 32.1 L24.7 34.3 Z" fill="#f0f0f8"/><path d="M2.4 21 H11.4 V16.1 L19.1 25 L11.4 33.9 V28.9 H2.4 Z" fill="url(#gAr)" stroke="#1b7a10" stroke-width="0.8" stroke-linejoin="round"/></svg><svg class="r" style="left:582px;top:317px" width="19" height="19" viewBox="0 0 19 19"><path d="M3.5 0.5 H14.5 V2.3 H17.5 V4.7 H14.5 V8.5 H17.5 V10.9 H14.5 V17.5 H3.5 V10.9 H0.5 V8.5 H3.5 V4.7 H0.5 V2.3 H3.5 Z" fill="url(#gL)" stroke="#9b7128" stroke-width="1"/><circle cx="10" cy="4.6" r="2.8" fill="#e0c040" opacity="0.8"/><circle cx="9.2" cy="11.5" r="4.1" fill="#17d10f"/></svg><div class="t" style="left:676px;top:321px;font-size:11px;line-height:11px;color:#3a3946;letter-spacing:0.77px;font-weight:normal;">IN: ANY</div><div class="t" style="left:802px;top:321px;font-size:11px;line-height:11px;color:#3a3946;letter-spacing:1.11px;font-weight:normal;">0.0.0.0/0</div><div class="t" style="left:1001px;top:321px;font-size:11px;line-height:11px;color:#3a3946;letter-spacing:1.11px;font-weight:normal;">0.0.0.0/0</div><div class="t" style="left:1253px;top:321px;font-size:11px;line-height:11px;color:#3a3946;letter-spacing:0.53px;font-weight:normal;">ICMP</div><div class="t" style="left:1372px;top:321px;font-size:11px;line-height:11px;color:#3a3946;letter-spacing:0.75px;font-weight:normal;">Type: ANY</div><svg class="r" style="left:1726px;top:314px" width="14" height="23" viewBox="0 0 14 23" shape-rendering="crispEdges"><rect x="4" y="1" width="6" height="1" fill="#ffff90"/><rect x="3" y="2" width="8" height="1" fill="#ffff90"/><rect x="2" y="3" width="10" height="1" fill="#ffff90"/><rect x="1" y="4" width="12" height="6" fill="#ffff90"/><rect x="2" y="10" width="10" height="1" fill="#ffff90"/><rect x="3" y="11" width="8" height="1" fill="#ffff90"/><rect x="4" y="12" width="6" height="3" fill="#ffff90"/><rect x="4" y="15" width="6" height="7" fill="#ffa81a"/><rect x="5" y="21" width="4" height="1" fill="#ffa81a"/><rect x="3" y="6" width="7" height="1" fill="#ffe800"/><rect x="3" y="7" width="1" height="1" fill="#ffe800"/><rect x="9" y="7" width="1" height="1" fill="#ffe800"/><rect x="4" y="8" width="1" height="1" fill="#ffe800"/><rect x="8" y="8" width="1" height="1" fill="#ffe800"/><rect x="5" y="9" width="1" height="1" fill="#ffe800"/><rect x="7" y="9" width="1" height="1" fill="#ffe800"/><rect x="6" y="10" width="1" height="2" fill="#ffe800"/><rect x="4" y="0" width="6" height="1" fill="#000"/><rect x="3" y="1" width="1" height="1" fill="#000"/><rect x="10" y="1" width="1" height="1" fill="#000"/><rect x="2" y="2" width="1" height="1" fill="#000"/><rect x="11" y="2" width="1" height="1" fill="#000"/><rect x="1" y="3" width="1" height="1" fill="#000"/><rect x="12" y="3" width="1" height="1" fill="#000"/><rect x="0" y="4" width="1" height="6" fill="#000"/><rect x="13" y="4" width="1" height="6" fill="#000"/><rect x="1" y="10" width="1" height="1" fill="#000"/><rect x="12" y="10" width="1" height="1" fill="#000"/><rect x="2" y="11" width="1" height="1" fill="#000"/><rect x="11" y="11" width="1" height="1" fill="#000"/><rect x="3" y="12" width="1" height="3" fill="#000"/><rect x="10" y="12" width="1" height="3" fill="#000"/><rect x="4" y="14" width="1" height="1" fill="#000"/><rect x="9" y="14" width="1" height="1" fill="#000"/><rect x="3" y="15" width="1" height="1" fill="#000"/><rect x="10" y="15" width="1" height="1" fill="#000"/><rect x="4" y="16" width="1" height="1" fill="#000"/><rect x="9" y="16" width="1" height="1" fill="#000"/><rect x="3" y="17" width="1" height="1" fill="#000"/><rect x="10" y="17" width="1" height="1" fill="#000"/><rect x="4" y="18" width="1" height="1" fill="#000"/><rect x="9" y="18" width="1" height="1" fill="#000"/><rect x="3" y="19" width="1" height="1" fill="#000"/><rect x="10" y="19" width="1" height="1" fill="#000"/><rect x="4" y="20" width="1" height="1" fill="#000"/><rect x="9" y="20" width="1" height="1" fill="#000"/><rect x="3" y="21" width="1" height="1" fill="#000"/><rect x="10" y="21" width="1" height="1" fill="#000"/><rect x="4" y="21" width="1" height="1" fill="#000"/><rect x="9" y="21" width="1" height="1" fill="#000"/><rect x="5" y="22" width="4" height="1" fill="#000"/></svg><svg class="r" style="left:1795px;top:308px" width="32" height="34" viewBox="0 0 32 34"><path d="M4.2 16.5 L9 8.4 L11.1 10.2 L14.2 7.1 L27.6 20.9 L18.2 30.5 Z" fill="url(#gE)" stroke="#1a3fd6" stroke-width="1.2" stroke-linejoin="round"/><path d="M11.6 10.4 L14.2 8.1 L26.4 20.8 L23.3 22.2 Z" fill="#eef4ff"/><path d="M11.1 10.2 L23 22.6" stroke="#1a3fd6" stroke-width="1.1"/><path d="M17.3 13.6 L25.7 5 L29.7 8.8 L20.9 17.6 Z" fill="url(#gP)" stroke="#e0901e" stroke-width="0.4"/><g fill="#f6b03a"><rect x="5.2" y="18.2" width="1.5" height="1.5"/><rect x="7.5" y="20.6" width="1.5" height="1.5"/><rect x="9.9" y="23" width="1.5" height="1.5"/><rect x="12.3" y="25.4" width="1.5" height="1.5"/><rect x="14.7" y="27.8" width="1.5" height="1.5"/></g></svg><div class="r" style="left:295px;top:409px;width:1588px;height:1px;background:#dedede;"></div><div class="r" style="left:300px;top:377px;width:11px;height:11px;border:1px solid #333;background:#fff"></div><div class="t" style="left:341px;top:373px;width:41px;text-align:center;font-size:19px;line-height:19px;color:#e4431f;letter-spacing:0.2px">3</div><svg class="r" style="left:375px;top:373px" width="16" height="16" viewBox="0 0 16 16"><rect x="1.4" y="1.4" width="14" height="14" rx="2.4" fill="#555" opacity="0.45"/><rect x="0.45" y="0.45" width="13.3" height="13.3" rx="2.4" fill="url(#gA)" stroke="#0a35c6" stroke-width="0.9"/><path d="M7 2.3 L2.2 7.1 L3.6 8.5 L6 6.1 V12 H8 V6.1 L10.4 8.5 L11.8 7.1 Z" fill="#fff"/></svg><svg class="r" style="left:395px;top:373px" width="16" height="16" viewBox="0 0 16 16"><rect x="1.4" y="1.4" width="14" height="14" rx="2.4" fill="#555" opacity="0.45"/><rect x="0.45" y="0.45" width="13.3" height="13.3" rx="2.4" fill="url(#gA)" stroke="#0a35c6" stroke-width="0.9"/><path d="M7 12 L2.2 7.2 L3.6 5.8 L6 8.2 V1.5 H8 V8.2 L10.4 5.8 L11.8 7.2 Z" fill="#fff"/></svg><svg class="r" style="left:483px;top:357px" width="40" height="44" viewBox="0 0 40 44"><path d="M8.4 7.1 C12 5.8 17 5.6 20.4 6 C27 6.8 33 8 36.8 10.1 C33 12.5 27 14.5 23.5 15.5 C18 12 12 9.5 8.4 7.1 Z" fill="#e9e9f6" stroke="#a0a0b8" stroke-width="0.5"/><path d="M8.4 7.1 C12 9.5 18 12 23.5 15.5 L22 41.6 C17 39 12 34 8.4 30 Z" fill="url(#gIn)"/><path d="M23.5 15.5 C27 14.5 33 12.5 36.8 10.1 L34.5 36 C32 39 27 41 22 41.6 Z" fill="url(#gFr)"/><path d="M23.3 17.8 L35.4 15.8 L33.2 33.3 L23.3 36 Z" fill="#15151c"/><path d="M24.7 19.2 L34.1 17.5 L32.1 32.1 L24.7 34.3 Z" fill="#f0f0f8"/><path d="M2.4 21 H11.4 V16.1 L19.1 25 L11.4 33.9 V28.9 H2.4 Z" fill="url(#gAr)" stroke="#1b7a10" stroke-width="0.8" stroke-linejoin="round"/></svg><svg class="r" style="left:582px;top:373px" width="19" height="19" viewBox="0 0 19 19"><path d="M3.5 0.5 H14.5 V2.3 H17.5 V4.7 H14.5 V8.5 H17.5 V10.9 H14.5 V17.5 H3.5 V10.9 H0.5 V8.5 H3.5 V4.7 H0.5 V2.3 H3.5 Z" fill="url(#gL)" stroke="#9b7128" stroke-width="1"/><circle cx="10" cy="4.6" r="2.8" fill="#e0c040" opacity="0.8"/><circle cx="9.2" cy="11.5" r="4.1" fill="#17d10f"/></svg><div class="t" style="left:676px;top:377px;font-size:11px;line-height:11px;color:#3a3946;letter-spacing:0.77px;font-weight:normal;">IN: ANY</div><div class="t" style="left:802px;top:377px;font-size:11px;line-height:11px;color:#3a3946;letter-spacing:1.11px;font-weight:normal;">0.0.0.0/0</div><div class="t" style="left:1001px;top:377px;font-size:11px;line-height:11px;color:#3a3946;letter-spacing:1.11px;font-weight:normal;">0.0.0.0/0</div><div class="t" style="left:1253px;top:377px;font-size:11px;line-height:11px;color:#3a3946;letter-spacing:0.35px;font-weight:normal;">UDP</div><div class="t" style="left:1372px;top:371px;font-size:11px;line-height:11px;color:#3a3946;letter-spacing:0.79px;font-weight:normal;">Source Port: ANY</div><div class="t" style="left:1367px;top:384px;font-size:11px;line-height:11px;color:#3a3946;letter-spacing:0.8px;font-weight:normal;">Destination Port: DHCPD</div><svg class="r" style="left:1726px;top:370px" width="14" height="23" viewBox="0 0 14 23" shape-rendering="crispEdges"><rect x="4" y="1" width="6" height="1" fill="#ffffff"/><rect x="3" y="2" width="8" height="1" fill="#ffffff"/><rect x="2" y="3" width="10" height="1" fill="#ffffff"/><rect x="1" y="4" width="12" height="6" fill="#ffffff"/><rect x="2" y="10" width="10" height="1" fill="#ffffff"/><rect x="3" y="11" width="8" height="1" fill="#ffffff"/><rect x="4" y="12" width="6" height="3" fill="#ffffff"/><rect x="4" y="15" width="6" height="7" fill="#9a9a9a"/><rect x="5" y="21" width="4" height="1" fill="#9a9a9a"/><rect x="3" y="6" width="7" height="1" fill="#8a8a8a"/><rect x="3" y="7" width="1" height="1" fill="#8a8a8a"/><rect x="9" y="7" width="1" height="1" fill="#8a8a8a"/><rect x="4" y="8" width="1" height="1" fill="#8a8a8a"/><rect x="8" y="8" width="1" height="1" fill="#8a8a8a"/><rect x="5" y="9" width="1" height="1" fill="#8a8a8a"/><rect x="7" y="9" width="1" height="1" fill="#8a8a8a"/><rect x="6" y="10" width="1" height="2" fill="#8a8a8a"/><rect x="6" y="15" width="2" height="6" fill="#6e6e6e"/><rect x="4" y="0" width="6" height="1" fill="#000"/><rect x="3" y="1" width="1" height="1" fill="#000"/><rect x="10" y="1" width="1" height="1" fill="#000"/><rect x="2" y="2" width="1" height="1" fill="#000"/><rect x="11" y="2" width="1" height="1" fill="#000"/><rect x="1" y="3" width="1" height="1" fill="#000"/><rect x="12" y="3" width="1" height="1" fill="#000"/><rect x="0" y="4" width="1" height="6" fill="#000"/><rect x="13" y="4" width="1" height="6" fill="#000"/><rect x="1" y="10" width="1" height="1" fill="#000"/><rect x="12" y="10" width="1" height="1" fill="#000"/><rect x="2" y="11" width="1" height="1" fill="#000"/><rect x="11" y="11" width="1" height="1" fill="#000"/><rect x="3" y="12" width="1" height="3" fill="#000"/><rect x="10" y="12" width="1" height="3" fill="#000"/><rect x="4" y="14" width="1" height="1" fill="#000"/><rect x="9" y="14" width="1" height="1" fill="#000"/><rect x="3" y="15" width="1" height="1" fill="#000"/><rect x="10" y="15" width="1" height="1" fill="#000"/><rect x="4" y="16" width="1" height="1" fill="#000"/><rect x="9" y="16" width="1" height="1" fill="#000"/><rect x="3" y="17" width="1" height="1" fill="#000"/><rect x="10" y="17" width="1" height="1" fill="#000"/><rect x="4" y="18" width="1" height="1" fill="#000"/><rect x="9" y="18" width="1" height="1" fill="#000"/><rect x="3" y="19" width="1" height="1" fill="#000"/><rect x="10" y="19" width="1" height="1" fill="#000"/><rect x="4" y="20" width="1" height="1" fill="#000"/><rect x="9" y="20" width="1" height="1" fill="#000"/><rect x="3" y="21" width="1" height="1" fill="#000"/><rect x="10" y="21" width="1" height="1" fill="#000"/><rect x="4" y="21" width="1" height="1" fill="#000"/><rect x="9" y="21" width="1" height="1" fill="#000"/><rect x="5" y="22" width="4" height="1" fill="#000"/></svg><svg class="r" style="left:1795px;top:364px" width="32" height="34" viewBox="0 0 32 34"><path d="M4.2 16.5 L9 8.4 L11.1 10.2 L14.2 7.1 L27.6 20.9 L18.2 30.5 Z" fill="url(#gE)" stroke="#1a3fd6" stroke-width="1.2" stroke-linejoin="round"/><path d="M11.6 10.4 L14.2 8.1 L26.4 20.8 L23.3 22.2 Z" fill="#eef4ff"/><path d="M11.1 10.2 L23 22.6" stroke="#1a3fd6" stroke-width="1.1"/><path d="M17.3 13.6 L25.7 5 L29.7 8.8 L20.9 17.6 Z" fill="url(#gP)" stroke="#e0901e" stroke-width="0.4"/><g fill="#f6b03a"><rect x="5.2" y="18.2" width="1.5" height="1.5"/><rect x="7.5" y="20.6" width="1.5" height="1.5"/><rect x="9.9" y="23" width="1.5" height="1.5"/><rect x="12.3" y="25.4" width="1.5" height="1.5"/><rect x="14.7" y="27.8" width="1.5" height="1.5"/></g></svg><div class="r" style="left:295px;top:465px;width:1588px;height:1px;background:#dedede;"></div><div class="r" style="left:300px;top:433px;width:11px;height:11px;border:1px solid #333;background:#fff"></div><div class="t" style="left:341px;top:429px;width:41px;text-align:center;font-size:19px;line-height:19px;color:#e4431f;letter-spacing:0.2px">4</div><svg class="r" style="left:375px;top:429px" width="16" height="16" viewBox="0 0 16 16"><rect x="1.4" y="1.4" width="14" height="14" rx="2.4" fill="#555" opacity="0.45"/><rect x="0.45" y="0.45" width="13.3" height="13.3" rx="2.4" fill="url(#gA)" stroke="#0a35c6" stroke-width="0.9"/><path d="M7 2.3 L2.2 7.1 L3.6 8.5 L6 6.1 V12 H8 V6.1 L10.4 8.5 L11.8 7.1 Z" fill="#fff"/></svg><svg class="r" style="left:395px;top:429px" width="16" height="16" viewBox="0 0 16 16"><rect x="1.4" y="1.4" width="14" height="14" rx="2.4" fill="#555" opacity="0.45"/><rect x="0.45" y="0.45" width="13.3" height="13.3" rx="2.4" fill="url(#gA)" stroke="#0a35c6" stroke-width="0.9"/><path d="M7 12 L2.2 7.2 L3.6 5.8 L6 8.2 V1.5 H8 V8.2 L10.4 5.8 L11.8 7.2 Z" fill="#fff"/></svg><svg class="r" style="left:483px;top:413px" width="40" height="44" viewBox="0 0 40 44"><path d="M8.4 7.1 C12 5.8 17 5.6 20.4 6 C27 6.8 33 8 36.8 10.1 C33 12.5 27 14.5 23.5 15.5 C18 12 12 9.5 8.4 7.1 Z" fill="#e9e9f6" stroke="#a0a0b8" stroke-width="0.5"/><path d="M8.4 7.1 C12 9.5 18 12 23.5 15.5 L22 41.6 C17 39 12 34 8.4 30 Z" fill="url(#gIn)"/><path d="M23.5 15.5 C27 14.5 33 12.5 36.8 10.1 L34.5 36 C32 39 27 41 22 41.6 Z" fill="url(#gFr)"/><path d="M23.3 17.8 L35.4 15.8 L33.2 33.3 L23.3 36 Z" fill="#15151c"/><path d="M24.7 19.2 L34.1 17.5 L32.1 32.1 L24.7 34.3 Z" fill="#f0f0f8"/><path d="M2.4 21 H11.4 V16.1 L19.1 25 L11.4 33.9 V28.9 H2.4 Z" fill="url(#gAr)" stroke="#1b7a10" stroke-width="0.8" stroke-linejoin="round"/></svg><svg class="r" style="left:582px;top:429px" width="19" height="19" viewBox="0 0 19 19"><path d="M3.5 0.5 H14.5 V2.3 H17.5 V4.7 H14.5 V8.5 H17.5 V10.9 H14.5 V17.5 H3.5 V10.9 H0.5 V8.5 H3.5 V4.7 H0.5 V2.3 H3.5 Z" fill="url(#gL)" stroke="#9b7128" stroke-width="1"/><circle cx="10" cy="4.6" r="2.8" fill="#e0c040" opacity="0.8"/><circle cx="9.2" cy="11.5" r="4.1" fill="#17d10f"/></svg><div class="t" style="left:676px;top:433px;font-size:11px;line-height:11px;color:#3a3946;letter-spacing:0.77px;font-weight:normal;">IN: ANY</div><div class="t" style="left:802px;top:433px;font-size:11px;line-height:11px;color:#3a3946;letter-spacing:1.11px;font-weight:normal;">0.0.0.0/0</div><div class="t" style="left:1001px;top:433px;font-size:11px;line-height:11px;color:#3a3946;letter-spacing:1.11px;font-weight:normal;">0.0.0.0/0</div><div class="t" style="left:1253px;top:433px;font-size:11px;line-height:11px;color:#3a3946;letter-spacing:0.35px;font-weight:normal;">TCP</div><div class="t" style="left:1372px;top:427px;font-size:11px;line-height:11px;color:#3a3946;letter-spacing:0.79px;font-weight:normal;">Source Port: ANY</div><div class="t" style="left:1367px;top:440px;font-size:11px;line-height:11px;color:#3a3946;letter-spacing:0.71px;font-weight:normal;">Destination Port: FOP2</div><svg class="r" style="left:1726px;top:426px" width="14" height="23" viewBox="0 0 14 23" shape-rendering="crispEdges"><rect x="4" y="1" width="6" height="1" fill="#ffffff"/><rect x="3" y="2" width="8" height="1" fill="#ffffff"/><rect x="2" y="3" width="10" height="1" fill="#ffffff"/><rect x="1" y="4" width="12" height="6" fill="#ffffff"/><rect x="2" y="10" width="10" height="1" fill="#ffffff"/><rect x="3" y="11" width="8" height="1" fill="#ffffff"/><rect x="4" y="12" width="6" height="3" fill="#ffffff"/><rect x="4" y="15" width="6" height="7" fill="#9a9a9a"/><rect x="5" y="21" width="4" height="1" fill="#9a9a9a"/><rect x="3" y="6" width="7" height="1" fill="#8a8a8a"/><rect x="3" y="7" width="1" height="1" fill="#8a8a8a"/><rect x="9" y="7" width="1" height="1" fill="#8a8a8a"/><rect x="4" y="8" width="1" height="1" fill="#8a8a8a"/><rect x="8" y="8" width="1" height="1" fill="#8a8a8a"/><rect x="5" y="9" width="1" height="1" fill="#8a8a8a"/><rect x="7" y="9" width="1" height="1" fill="#8a8a8a"/><rect x="6" y="10" width="1" height="2" fill="#8a8a8a"/><rect x="6" y="15" width="2" height="6" fill="#6e6e6e"/><rect x="4" y="0" width="6" height="1" fill="#000"/><rect x="3" y="1" width="1" height="1" fill="#000"/><rect x="10" y="1" width="1" height="1" fill="#000"/><rect x="2" y="2" width="1" height="1" fill="#000"/><rect x="11" y="2" width="1" height="1" fill="#000"/><rect x="1" y="3" width="1" height="1" fill="#000"/><rect x="12" y="3" width="1" height="1" fill="#000"/><rect x="0" y="4" width="1" height="6" fill="#000"/><rect x="13" y="4" width="1" height="6" fill="#000"/><rect x="1" y="10" width="1" height="1" fill="#000"/><rect x="12" y="10" width="1" height="1" fill="#000"/><rect x="2" y="11" width="1" height="1" fill="#000"/><rect x="11" y="11" width="1" height="1" fill="#000"/><rect x="3" y="12" width="1" height="3" fill="#000"/><rect x="10" y="12" width="1" height="3" fill="#000"/><rect x="4" y="14" width="1" height="1" fill="#000"/><rect x="9" y="14" width="1" height="1" fill="#000"/><rect x="3" y="15" width="1" height="1" fill="#000"/><rect x="10" y="15" width="1" height="1" fill="#000"/><rect x="4" y="16" width="1" height="1" fill="#000"/><rect x="9" y="16" width="1" height="1" fill="#000"/><rect x="3" y="17" width="1" height="1" fill="#000"/><rect x="10" y="17" width="1" height="1" fill="#000"/><rect x="4" y="18" width="1" height="1" fill="#000"/><rect x="9" y="18" width="1" height="1" fill="#000"/><rect x="3" y="19" width="1" height="1" fill="#000"/><rect x="10" y="19" width="1" height="1" fill="#000"/><rect x="4" y="20" width="1" height="1" fill="#000"/><rect x="9" y="20" width="1" height="1" fill="#000"/><rect x="3" y="21" width="1" height="1" fill="#000"/><rect x="10" y="21" width="1" height="1" fill="#000"/><rect x="4" y="21" width="1" height="1" fill="#000"/><rect x="9" y="21" width="1" height="1" fill="#000"/><rect x="5" y="22" width="4" height="1" fill="#000"/></svg><svg class="r" style="left:1795px;top:420px" width="32" height="34" viewBox="0 0 32 34"><path d="M4.2 16.5 L9 8.4 L11.1 10.2 L14.2 7.1 L27.6 20.9 L18.2 30.5 Z" fill="url(#gE)" stroke="#1a3fd6" stroke-width="1.2" stroke-linejoin="round"/><path d="M11.6 10.4 L14.2 8.1 L26.4 20.8 L23.3 22.2 Z" fill="#eef4ff"/><path d="M11.1 10.2 L23 22.6" stroke="#1a3fd6" stroke-width="1.1"/><path d="M17.3 13.6 L25.7 5 L29.7 8.8 L20.9 17.6 Z" fill="url(#gP)" stroke="#e0901e" stroke-width="0.4"/><g fill="#f6b03a"><rect x="5.2" y="18.2" width="1.5" height="1.5"/><rect x="7.5" y="20.6" width="1.5" height="1.5"/><rect x="9.9" y="23" width="1.5" height="1.5"/><rect x="12.3" y="25.4" width="1.5" height="1.5"/><rect x="14.7" y="27.8" width="1.5" height="1.5"/></g></svg><div class="r" style="left:295px;top:521px;width:1588px;height:1px;background:#dedede;"></div><div class="r" style="left:300px;top:489px;width:11px;height:11px;border:1px solid #333;background:#fff"></div><div class="t" style="left:341px;top:485px;width:41px;text-align:center;font-size:19px;line-height:19px;color:#e4431f;letter-spacing:0.2px">5</div><svg class="r" style="left:375px;top:485px" width="16" height="16" viewBox="0 0 16 16"><rect x="1.4" y="1.4" width="14" height="14" rx="2.4" fill="#555" opacity="0.45"/><rect x="0.45" y="0.45" width="13.3" height="13.3" rx="2.4" fill="url(#gA)" stroke="#0a35c6" stroke-width="0.9"/><path d="M7 2.3 L2.2 7.1 L3.6 8.5 L6 6.1 V12 H8 V6.1 L10.4 8.5 L11.8 7.1 Z" fill="#fff"/></svg><svg class="r" style="left:395px;top:485px" width="16" height="16" viewBox="0 0 16 16"><rect x="1.4" y="1.4" width="14" height="14" rx="2.4" fill="#555" opacity="0.45"/><rect x="0.45" y="0.45" width="13.3" height="13.3" rx="2.4" fill="url(#gA)" stroke="#0a35c6" stroke-width="0.9"/><path d="M7 12 L2.2 7.2 L3.6 5.8 L6 8.2 V1.5 H8 V8.2 L10.4 5.8 L11.8 7.2 Z" fill="#fff"/></svg><svg class="r" style="left:483px;top:469px" width="40" height="44" viewBox="0 0 40 44"><path d="M8.4 7.1 C12 5.8 17 5.6 20.4 6 C27 6.8 33 8 36.8 10.1 C33 12.5 27 14.5 23.5 15.5 C18 12 12 9.5 8.4 7.1 Z" fill="#e9e9f6" stroke="#a0a0b8" stroke-width="0.5"/><path d="M8.4 7.1 C12 9.5 18 12 23.5 15.5 L22 41.6 C17 39 12 34 8.4 30 Z" fill="url(#gIn)"/><path d="M23.5 15.5 C27 14.5 33 12.5 36.8 10.1 L34.5 36 C32 39 27 41 22 41.6 Z" fill="url(#gFr)"/><path d="M23.3 17.8 L35.4 15.8 L33.2 33.3 L23.3 36 Z" fill="#15151c"/><path d="M24.7 19.2 L34.1 17.5 L32.1 32.1 L24.7 34.3 Z" fill="#f0f0f8"/><path d="M2.4 21 H11.4 V16.1 L19.1 25 L11.4 33.9 V28.9 H2.4 Z" fill="url(#gAr)" stroke="#1b7a10" stroke-width="0.8" stroke-linejoin="round"/></svg><svg class="r" style="left:582px;top:485px" width="19" height="19" viewBox="0 0 19 19"><path d="M3.5 0.5 H14.5 V2.3 H17.5 V4.7 H14.5 V8.5 H17.5 V10.9 H14.5 V17.5 H3.5 V10.9 H0.5 V8.5 H3.5 V4.7 H0.5 V2.3 H3.5 Z" fill="url(#gL)" stroke="#9b7128" stroke-width="1"/><circle cx="10" cy="4.6" r="2.8" fill="#e0c040" opacity="0.8"/><circle cx="9.2" cy="11.5" r="4.1" fill="#17d10f"/></svg><div class="t" style="left:676px;top:489px;font-size:11px;line-height:11px;color:#3a3946;letter-spacing:0.77px;font-weight:normal;">IN: ANY</div><div class="t" style="left:802px;top:489px;font-size:11px;line-height:11px;color:#3a3946;letter-spacing:1.11px;font-weight:normal;">0.0.0.0/0</div><div class="t" style="left:1001px;top:489px;font-size:11px;line-height:11px;color:#3a3946;letter-spacing:1.11px;font-weight:normal;">0.0.0.0/0</div><div class="t" style="left:1253px;top:489px;font-size:11px;line-height:11px;color:#3a3946;letter-spacing:0.35px;font-weight:normal;">UDP</div><div class="t" style="left:1372px;top:483px;font-size:11px;line-height:11px;color:#3a3946;letter-spacing:0.79px;font-weight:normal;">Source Port: ANY</div><div class="t" style="left:1367px;top:496px;font-size:11px;line-height:11px;color:#3a3946;letter-spacing:0.9px;font-weight:normal;">Destination Port: sip main</div><svg class="r" style="left:1726px;top:482px" width="14" height="23" viewBox="0 0 14 23" shape-rendering="crispEdges"><rect x="4" y="1" width="6" height="1" fill="#ffff90"/><rect x="3" y="2" width="8" height="1" fill="#ffff90"/><rect x="2" y="3" width="10" height="1" fill="#ffff90"/><rect x="1" y="4" width="12" height="6" fill="#ffff90"/><rect x="2" y="10" width="10" height="1" fill="#ffff90"/><rect x="3" y="11" width="8" height="1" fill="#ffff90"/><rect x="4" y="12" width="6" height="3" fill="#ffff90"/><rect x="4" y="15" width="6" height="7" fill="#ffa81a"/><rect x="5" y="21" width="4" height="1" fill="#ffa81a"/><rect x="3" y="6" width="7" height="1" fill="#ffe800"/><rect x="3" y="7" width="1" height="1" fill="#ffe800"/><rect x="9" y="7" width="1" height="1" fill="#ffe800"/><rect x="4" y="8" width="1" height="1" fill="#ffe800"/><rect x="8" y="8" width="1" height="1" fill="#ffe800"/><rect x="5" y="9" width="1" height="1" fill="#ffe800"/><rect x="7" y="9" width="1" height="1" fill="#ffe800"/><rect x="6" y="10" width="1" height="2" fill="#ffe800"/><rect x="4" y="0" width="6" height="1" fill="#000"/><rect x="3" y="1" width="1" height="1" fill="#000"/><rect x="10" y="1" width="1" height="1" fill="#000"/><rect x="2" y="2" width="1" height="1" fill="#000"/><rect x="11" y="2" width="1" height="1" fill="#000"/><rect x="1" y="3" width="1" height="1" fill="#000"/><rect x="12" y="3" width="1" height="1" fill="#000"/><rect x="0" y="4" width="1" height="6" fill="#000"/><rect x="13" y="4" width="1" height="6" fill="#000"/><rect x="1" y="10" width="1" height="1" fill="#000"/><rect x="12" y="10" width="1" height="1" fill="#000"/><rect x="2" y="11" width="1" height="1" fill="#000"/><rect x="11" y="11" width="1" height="1" fill="#000"/><rect x="3" y="12" width="1" height="3" fill="#000"/><rect x="10" y="12" width="1" height="3" fill="#000"/><rect x="4" y="14" width="1" height="1" fill="#000"/><rect x="9" y="14" width="1" height="1" fill="#000"/><rect x="3" y="15" width="1" height="1" fill="#000"/><rect x="10" y="15" width="1" height="1" fill="#000"/><rect x="4" y="16" width="1" height="1" fill="#000"/><rect x="9" y="16" width="1" height="1" fill="#000"/><rect x="3" y="17" width="1" height="1" fill="#000"/><rect x="10" y="17" width="1" height="1" fill="#000"/><rect x="4" y="18" width="1" height="1" fill="#000"/><rect x="9" y="18" width="1" height="1" fill="#000"/><rect x="3" y="19" width="1" height="1" fill="#000"/><rect x="10" y="19" width="1" height="1" fill="#000"/><rect x="4" y="20" width="1" height="1" fill="#000"/><rect x="9" y="20" width="1" height="1" fill="#000"/><rect x="3" y="21" width="1" height="1" fill="#000"/><rect x="10" y="21" width="1" height="1" fill="#000"/><rect x="4" y="21" width="1" height="1" fill="#000"/><rect x="9" y="21" width="1" height="1" fill="#000"/><rect x="5" y="22" width="4" height="1" fill="#000"/></svg><svg class="r" style="left:1795px;top:476px" width="32" height="34" viewBox="0 0 32 34"><path d="M4.2 16.5 L9 8.4 L11.1 10.2 L14.2 7.1 L27.6 20.9 L18.2 30.5 Z" fill="url(#gE)" stroke="#1a3fd6" stroke-width="1.2" stroke-linejoin="round"/><path d="M11.6 10.4 L14.2 8.1 L26.4 20.8 L23.3 22.2 Z" fill="#eef4ff"/><path d="M11.1 10.2 L23 22.6" stroke="#1a3fd6" stroke-width="1.1"/><path d="M17.3 13.6 L25.7 5 L29.7 8.8 L20.9 17.6 Z" fill="url(#gP)" stroke="#e0901e" stroke-width="0.4"/><g fill="#f6b03a"><rect x="5.2" y="18.2" width="1.5" height="1.5"/><rect x="7.5" y="20.6" width="1.5" height="1.5"/><rect x="9.9" y="23" width="1.5" height="1.5"/><rect x="12.3" y="25.4" width="1.5" height="1.5"/><rect x="14.7" y="27.8" width="1.5" height="1.5"/></g></svg><div class="r" style="left:295px;top:577px;width:1588px;height:1px;background:#dedede;"></div><div class="r" style="left:300px;top:545px;width:11px;height:11px;border:1px solid #333;background:#fff"></div><div class="t" style="left:341px;top:541px;width:41px;text-align:center;font-size:19px;line-height:19px;color:#e4431f;letter-spacing:0.2px">6</div><svg class="r" style="left:375px;top:541px" width="16" height="16" viewBox="0 0 16 16"><rect x="1.4" y="1.4" width="14" height="14" rx="2.4" fill="#555" opacity="0.45"/><rect x="0.45" y="0.45" width="13.3" height="13.3" rx="2.4" fill="url(#gA)" stroke="#0a35c6" stroke-width="0.9"/><path d="M7 2.3 L2.2 7.1 L3.6 8.5 L6 6.1 V12 H8 V6.1 L10.4 8.5 L11.8 7.1 Z" fill="#fff"/></svg><svg class="r" style="left:395px;top:541px" width="16" height="16" viewBox="0 0 16 16"><rect x="1.4" y="1.4" width="14" height="14" rx="2.4" fill="#555" opacity="0.45"/><rect x="0.45" y="0.45" width="13.3" height="13.3" rx="2.4" fill="url(#gA)" stroke="#0a35c6" stroke-width="0.9"/><path d="M7 12 L2.2 7.2 L3.6 5.8 L6 8.2 V1.5 H8 V8.2 L10.4 5.8 L11.8 7.2 Z" fill="#fff"/></svg><svg class="r" style="left:483px;top:525px" width="40" height="44" viewBox="0 0 40 44"><path d="M8.4 7.1 C12 5.8 17 5.6 20.4 6 C27 6.8 33 8 36.8 10.1 C33 12.5 27 14.5 23.5 15.5 C18 12 12 9.5 8.4 7.1 Z" fill="#e9e9f6" stroke="#a0a0b8" stroke-width="0.5"/><path d="M8.4 7.1 C12 9.5 18 12 23.5 15.5 L22 41.6 C17 39 12 34 8.4 30 Z" fill="url(#gIn)"/><path d="M23.5 15.5 C27 14.5 33 12.5 36.8 10.1 L34.5 36 C32 39 27 41 22 41.6 Z" fill="url(#gFr)"/><path d="M23.3 17.8 L35.4 15.8 L33.2 33.3 L23.3 36 Z" fill="#15151c"/><path d="M24.7 19.2 L34.1 17.5 L32.1 32.1 L24.7 34.3 Z" fill="#f0f0f8"/><path d="M2.4 21 H11.4 V16.1 L19.1 25 L11.4 33.9 V28.9 H2.4 Z" fill="url(#gAr)" stroke="#1b7a10" stroke-width="0.8" stroke-linejoin="round"/></svg><svg class="r" style="left:582px;top:541px" width="19" height="19" viewBox="0 0 19 19"><path d="M3.5 0.5 H14.5 V2.3 H17.5 V4.7 H14.5 V8.5 H17.5 V10.9 H14.5 V17.5 H3.5 V10.9 H0.5 V8.5 H3.5 V4.7 H0.5 V2.3 H3.5 Z" fill="url(#gL)" stroke="#9b7128" stroke-width="1"/><circle cx="10" cy="4.6" r="2.8" fill="#e0c040" opacity="0.8"/><circle cx="9.2" cy="11.5" r="4.1" fill="#17d10f"/></svg><div class="t" style="left:676px;top:545px;font-size:11px;line-height:11px;color:#3a3946;letter-spacing:0.77px;font-weight:normal;">IN: ANY</div><div class="t" style="left:802px;top:545px;font-size:11px;line-height:11px;color:#3a3946;letter-spacing:1.11px;font-weight:normal;">0.0.0.0/0</div><div class="t" style="left:1001px;top:545px;font-size:11px;line-height:11px;color:#3a3946;letter-spacing:1.11px;font-weight:normal;">0.0.0.0/0</div><div class="t" style="left:1253px;top:545px;font-size:11px;line-height:11px;color:#3a3946;letter-spacing:0.35px;font-weight:normal;">UDP</div><div class="t" style="left:1372px;top:539px;font-size:11px;line-height:11px;color:#3a3946;letter-spacing:0.79px;font-weight:normal;">Source Port: ANY</div><div class="t" style="left:1367px;top:552px;font-size:11px;line-height:11px;color:#3a3946;letter-spacing:0.9px;font-weight:normal;">Destination Port: IAX2</div><svg class="r" style="left:1726px;top:538px" width="14" height="23" viewBox="0 0 14 23" shape-rendering="crispEdges"><rect x="4" y="1" width="6" height="1" fill="#ffffff"/><rect x="3" y="2" width="8" height="1" fill="#ffffff"/><rect x="2" y="3" width="10" height="1" fill="#ffffff"/><rect x="1" y="4" width="12" height="6" fill="#ffffff"/><rect x="2" y="10" width="10" height="1" fill="#ffffff"/><rect x="3" y="11" width="8" height="1" fill="#ffffff"/><rect x="4" y="12" width="6" height="3" fill="#ffffff"/><rect x="4" y="15" width="6" height="7" fill="#9a9a9a"/><rect x="5" y="21" width="4" height="1" fill="#9a9a9a"/><rect x="3" y="6" width="7" height="1" fill="#8a8a8a"/><rect x="3" y="7" width="1" height="1" fill="#8a8a8a"/><rect x="9" y="7" width="1" height="1" fill="#8a8a8a"/><rect x="4" y="8" width="1" height="1" fill="#8a8a8a"/><rect x="8" y="8" width="1" height="1" fill="#8a8a8a"/><rect x="5" y="9" width="1" height="1" fill="#8a8a8a"/><rect x="7" y="9" width="1" height="1" fill="#8a8a8a"/><rect x="6" y="10" width="1" height="2" fill="#8a8a8a"/><rect x="6" y="15" width="2" height="6" fill="#6e6e6e"/><rect x="4" y="0" width="6" height="1" fill="#000"/><rect x="3" y="1" width="1" height="1" fill="#000"/><rect x="10" y="1" width="1" height="1" fill="#000"/><rect x="2" y="2" width="1" height="1" fill="#000"/><rect x="11" y="2" width="1" height="1" fill="#000"/><rect x="1" y="3" width="1" height="1" fill="#000"/><rect x="12" y="3" width="1" height="1" fill="#000"/><rect x="0" y="4" width="1" height="6" fill="#000"/><rect x="13" y="4" width="1" height="6" fill="#000"/><rect x="1" y="10" width="1" height="1" fill="#000"/><rect x="12" y="10" width="1" height="1" fill="#000"/><rect x="2" y="11" width="1" height="1" fill="#000"/><rect x="11" y="11" width="1" height="1" fill="#000"/><rect x="3" y="12" width="1" height="3" fill="#000"/><rect x="10" y="12" width="1" height="3" fill="#000"/><rect x="4" y="14" width="1" height="1" fill="#000"/><rect x="9" y="14" width="1" height="1" fill="#000"/><rect x="3" y="15" width="1" height="1" fill="#000"/><rect x="10" y="15" width="1" height="1" fill="#000"/><rect x="4" y="16" width="1" height="1" fill="#000"/><rect x="9" y="16" width="1" height="1" fill="#000"/><rect x="3" y="17" width="1" height="1" fill="#000"/><rect x="10" y="17" width="1" height="1" fill="#000"/><rect x="4" y="18" width="1" height="1" fill="#000"/><rect x="9" y="18" width="1" height="1" fill="#000"/><rect x="3" y="19" width="1" height="1" fill="#000"/><rect x="10" y="19" width="1" height="1" fill="#000"/><rect x="4" y="20" width="1" height="1" fill="#000"/><rect x="9" y="20" width="1" height="1" fill="#000"/><rect x="3" y="21" width="1" height="1" fill="#000"/><rect x="10" y="21" width="1" height="1" fill="#000"/><rect x="4" y="21" width="1" height="1" fill="#000"/><rect x="9" y="21" width="1" height="1" fill="#000"/><rect x="5" y="22" width="4" height="1" fill="#000"/></svg><svg class="r" style="left:1795px;top:532px" width="32" height="34" viewBox="0 0 32 34"><path d="M4.2 16.5 L9 8.4 L11.1 10.2 L14.2 7.1 L27.6 20.9 L18.2 30.5 Z" fill="url(#gE)" stroke="#1a3fd6" stroke-width="1.2" stroke-linejoin="round"/><path d="M11.6 10.4 L14.2 8.1 L26.4 20.8 L23.3 22.2 Z" fill="#eef4ff"/><path d="M11.1 10.2 L23 22.6" stroke="#1a3fd6" stroke-width="1.1"/><path d="M17.3 13.6 L25.7 5 L29.7 8.8 L20.9 17.6 Z" fill="url(#gP)" stroke="#e0901e" stroke-width="0.4"/><g fill="#f6b03a"><rect x="5.2" y="18.2" width="1.5" height="1.5"/><rect x="7.5" y="20.6" width="1.5" height="1.5"/><rect x="9.9" y="23" width="1.5" height="1.5"/><rect x="12.3" y="25.4" width="1.5" height="1.5"/><rect x="14.7" y="27.8" width="1.5" height="1.5"/></g></svg><div class="r" style="left:295px;top:633px;width:1588px;height:1px;background:#dedede;"></div><div class="r" style="left:300px;top:601px;width:11px;height:11px;border:1px solid #333;background:#fff"></div><div class="t" style="left:341px;top:597px;width:41px;text-align:center;font-size:19px;line-height:19px;color:#e4431f;letter-spacing:0.2px">7</div><svg class="r" style="left:375px;top:597px" width="16" height="16" viewBox="0 0 16 16"><rect x="1.4" y="1.4" width="14" height="14" rx="2.4" fill="#555" opacity="0.45"/><rect x="0.45" y="0.45" width="13.3" height="13.3" rx="2.4" fill="url(#gA)" stroke="#0a35c6" stroke-width="0.9"/><path d="M7 2.3 L2.2 7.1 L3.6 8.5 L6 6.1 V12 H8 V6.1 L10.4 8.5 L11.8 7.1 Z" fill="#fff"/></svg><svg class="r" style="left:395px;top:597px" width="16" height="16" viewBox="0 0 16 16"><rect x="1.4" y="1.4" width="14" height="14" rx="2.4" fill="#555" opacity="0.45"/><rect x="0.45" y="0.45" width="13.3" height="13.3" rx="2.4" fill="url(#gA)" stroke="#0a35c6" stroke-width="0.9"/><path d="M7 12 L2.2 7.2 L3.6 5.8 L6 8.2 V1.5 H8 V8.2 L10.4 5.8 L11.8 7.2 Z" fill="#fff"/></svg><svg class="r" style="left:483px;top:581px" width="40" height="44" viewBox="0 0 40 44"><path d="M8.4 7.1 C12 5.8 17 5.6 20.4 6 C27 6.8 33 8 36.8 10.1 C33 12.5 27 14.5 23.5 15.5 C18 12 12 9.5 8.4 7.1 Z" fill="#e9e9f6" stroke="#a0a0b8" stroke-width="0.5"/><path d="M8.4 7.1 C12 9.5 18 12 23.5 15.5 L22 41.6 C17 39 12 34 8.4 30 Z" fill="url(#gIn)"/><path d="M23.5 15.5 C27 14.5 33 12.5 36.8 10.1 L34.5 36 C32 39 27 41 22 41.6 Z" fill="url(#gFr)"/><path d="M23.3 17.8 L35.4 15.8 L33.2 33.3 L23.3 36 Z" fill="#15151c"/><path d="M24.7 19.2 L34.1 17.5 L32.1 32.1 L24.7 34.3 Z" fill="#f0f0f8"/><path d="M2.4 21 H11.4 V16.1 L19.1 25 L11.4 33.9 V28.9 H2.4 Z" fill="url(#gAr)" stroke="#1b7a10" stroke-width="0.8" stroke-linejoin="round"/></svg><svg class="r" style="left:582px;top:597px" width="19" height="19" viewBox="0 0 19 19"><path d="M3.5 0.5 H14.5 V2.3 H17.5 V4.7 H14.5 V8.5 H17.5 V10.9 H14.5 V17.5 H3.5 V10.9 H0.5 V8.5 H3.5 V4.7 H0.5 V2.3 H3.5 Z" fill="url(#gL)" stroke="#9b7128" stroke-width="1"/><circle cx="10" cy="4.6" r="2.8" fill="#e0c040" opacity="0.8"/><circle cx="9.2" cy="11.5" r="4.1" fill="#17d10f"/></svg><div class="t" style="left:676px;top:601px;font-size:11px;line-height:11px;color:#3a3946;letter-spacing:0.77px;font-weight:normal;">IN: ANY</div><div class="t" style="left:802px;top:601px;font-size:11px;line-height:11px;color:#3a3946;letter-spacing:1.11px;font-weight:normal;">0.0.0.0/0</div><div class="t" style="left:1001px;top:601px;font-size:11px;line-height:11px;color:#3a3946;letter-spacing:1.11px;font-weight:normal;">0.0.0.0/0</div><div class="t" style="left:1253px;top:601px;font-size:11px;line-height:11px;color:#3a3946;letter-spacing:0.35px;font-weight:normal;">UDP</div><div class="t" style="left:1372px;top:595px;font-size:11px;line-height:11px;color:#3a3946;letter-spacing:0.79px;font-weight:normal;">Source Port: ANY</div><div class="t" style="left:1367px;top:608px;font-size:11px;line-height:11px;color:#3a3946;letter-spacing:0.9px;font-weight:normal;">Destination Port: IAX1</div><svg class="r" style="left:1726px;top:594px" width="14" height="23" viewBox="0 0 14 23" shape-rendering="crispEdges"><rect x="4" y="1" width="6" height="1" fill="#ffffff"/><rect x="3" y="2" width="8" height="1" fill="#ffffff"/><rect x="2" y="3" width="10" height="1" fill="#ffffff"/><rect x="1" y="4" width="12" height="6" fill="#ffffff"/><rect x="2" y="10" width="10" height="1" fill="#ffffff"/><rect x="3" y="11" width="8" height="1" fill="#ffffff"/><rect x="4" y="12" width="6" height="3" fill="#ffffff"/><rect x="4" y="15" width="6" height="7" fill="#9a9a9a"/><rect x="5" y="21" width="4" height="1" fill="#9a9a9a"/><rect x="3" y="6" width="7" height="1" fill="#8a8a8a"/><rect x="3" y="7" width="1" height="1" fill="#8a8a8a"/><rect x="9" y="7" width="1" height="1" fill="#8a8a8a"/><rect x="4" y="8" width="1" height="1" fill="#8a8a8a"/><rect x="8" y="8" width="1" height="1" fill="#8a8a8a"/><rect x="5" y="9" width="1" height="1" fill="#8a8a8a"/><rect x="7" y="9" width="1" height="1" fill="#8a8a8a"/><rect x="6" y="10" width="1" height="2" fill="#8a8a8a"/><rect x="6" y="15" width="2" height="6" fill="#6e6e6e"/><rect x="4" y="0" width="6" height="1" fill="#000"/><rect x="3" y="1" width="1" height="1" fill="#000"/><rect x="10" y="1" width="1" height="1" fill="#000"/><rect x="2" y="2" width="1" height="1" fill="#000"/><rect x="11" y="2" width="1" height="1" fill="#000"/><rect x="1" y="3" width="1" height="1" fill="#000"/><rect x="12" y="3" width="1" height="1" fill="#000"/><rect x="0" y="4" width="1" height="6" fill="#000"/><rect x="13" y="4" width="1" height="6" fill="#000"/><rect x="1" y="10" width="1" height="1" fill="#000"/><rect x="12" y="10" width="1" height="1" fill="#000"/><rect x="2" y="11" width="1" height="1" fill="#000"/><rect x="11" y="11" width="1" height="1" fill="#000"/><rect x="3" y="12" width="1" height="3" fill="#000"/><rect x="10" y="12" width="1" height="3" fill="#000"/><rect x="4" y="14" width="1" height="1" fill="#000"/><rect x="9" y="14" width="1" height="1" fill="#000"/><rect x="3" y="15" width="1" height="1" fill="#000"/><rect x="10" y="15" width="1" height="1" fill="#000"/><rect x="4" y="16" width="1" height="1" fill="#000"/><rect x="9" y="16" width="1" height="1" fill="#000"/><rect x="3" y="17" width="1" height="1" fill="#000"/><rect x="10" y="17" width="1" height="1" fill="#000"/><rect x="4" y="18" width="1" height="1" fill="#000"/><rect x="9" y="18" width="1" height="1" fill="#000"/><rect x="3" y="19" width="1" height="1" fill="#000"/><rect x="10" y="19" width="1" height="1" fill="#000"/><rect x="4" y="20" width="1" height="1" fill="#000"/><rect x="9" y="20" width="1" height="1" fill="#000"/><rect x="3" y="21" width="1" height="1" fill="#000"/><rect x="10" y="21" width="1" height="1" fill="#000"/><rect x="4" y="21" width="1" height="1" fill="#000"/><rect x="9" y="21" width="1" height="1" fill="#000"/><rect x="5" y="22" width="4" height="1" fill="#000"/></svg><svg class="r" style="left:1795px;top:588px" width="32" height="34" viewBox="0 0 32 34"><path d="M4.2 16.5 L9 8.4 L11.1 10.2 L14.2 7.1 L27.6 20.9 L18.2 30.5 Z" fill="url(#gE)" stroke="#1a3fd6" stroke-width="1.2" stroke-linejoin="round"/><path d="M11.6 10.4 L14.2 8.1 L26.4 20.8 L23.3 22.2 Z" fill="#eef4ff"/><path d="M11.1 10.2 L23 22.6" stroke="#1a3fd6" stroke-width="1.1"/><path d="M17.3 13.6 L25.7 5 L29.7 8.8 L20.9 17.6 Z" fill="url(#gP)" stroke="#e0901e" stroke-width="0.4"/><g fill="#f6b03a"><rect x="5.2" y="18.2" width="1.5" height="1.5"/><rect x="7.5" y="20.6" width="1.5" height="1.5"/><rect x="9.9" y="23" width="1.5" height="1.5"/><rect x="12.3" y="25.4" width="1.5" height="1.5"/><rect x="14.7" y="27.8" width="1.5" height="1.5"/></g></svg><div class="r" style="left:295px;top:689px;width:1588px;height:1px;background:#dedede;"></div><div class="r" style="left:300px;top:657px;width:11px;height:11px;border:1px solid #333;background:#fff"></div><div class="t" style="left:341px;top:653px;width:41px;text-align:center;font-size:19px;line-height:19px;color:#e4431f;letter-spacing:0.2px">8</div><svg class="r" style="left:375px;top:653px" width="16" height="16" viewBox="0 0 16 16"><rect x="1.4" y="1.4" width="14" height="14" rx="2.4" fill="#555" opacity="0.45"/><rect x="0.45" y="0.45" width="13.3" height="13.3" rx="2.4" fill="url(#gA)" stroke="#0a35c6" stroke-width="0.9"/><path d="M7 2.3 L2.2 7.1 L3.6 8.5 L6 6.1 V12 H8 V6.1 L10.4 8.5 L11.8 7.1 Z" fill="#fff"/></svg><svg class="r" style="left:395px;top:653px" width="16" height="16" viewBox="0 0 16 16"><rect x="1.4" y="1.4" width="14" height="14" rx="2.4" fill="#555" opacity="0.45"/><rect x="0.45" y="0.45" width="13.3" height="13.3" rx="2.4" fill="url(#gA)" stroke="#0a35c6" stroke-width="0.9"/><path d="M7 12 L2.2 7.2 L3.6 5.8 L6 8.2 V1.5 H8 V8.2 L10.4 5.8 L11.8 7.2 Z" fill="#fff"/></svg><svg class="r" style="left:483px;top:637px" width="40" height="44" viewBox="0 0 40 44"><path d="M8.4 7.1 C12 5.8 17 5.6 20.4 6 C27 6.8 33 8 36.8 10.1 C33 12.5 27 14.5 23.5 15.5 C18 12 12 9.5 8.4 7.1 Z" fill="#e9e9f6" stroke="#a0a0b8" stroke-width="0.5"/><path d="M8.4 7.1 C12 9.5 18 12 23.5 15.5 L22 41.6 C17 39 12 34 8.4 30 Z" fill="url(#gIn)"/><path d="M23.5 15.5 C27 14.5 33 12.5 36.8 10.1 L34.5 36 C32 39 27 41 22 41.6 Z" fill="url(#gFr)"/><path d="M23.3 17.8 L35.4 15.8 L33.2 33.3 L23.3 36 Z" fill="#15151c"/><path d="M24.7 19.2 L34.1 17.5 L32.1 32.1 L24.7 34.3 Z" fill="#f0f0f8"/><path d="M2.4 21 H11.4 V16.1 L19.1 25 L11.4 33.9 V28.9 H2.4 Z" fill="url(#gAr)" stroke="#1b7a10" stroke-width="0.8" stroke-linejoin="round"/></svg><svg class="r" style="left:582px;top:653px" width="19" height="19" viewBox="0 0 19 19"><path d="M3.5 0.5 H14.5 V2.3 H17.5 V4.7 H14.5 V8.5 H17.5 V10.9 H14.5 V17.5 H3.5 V10.9 H0.5 V8.5 H3.5 V4.7 H0.5 V2.3 H3.5 Z" fill="url(#gL)" stroke="#9b7128" stroke-width="1"/><circle cx="10" cy="4.6" r="2.8" fill="#e0c040" opacity="0.8"/><circle cx="9.2" cy="11.5" r="4.1" fill="#17d10f"/></svg><div class="t" style="left:676px;top:657px;font-size:11px;line-height:11px;color:#3a3946;letter-spacing:0.77px;font-weight:normal;">IN: ANY</div><div class="t" style="left:802px;top:657px;font-size:11px;line-height:11px;color:#3a3946;letter-spacing:1.11px;font-weight:normal;">0.0.0.0/0</div><div class="t" style="left:1001px;top:657px;font-size:11px;line-height:11px;color:#3a3946;letter-spacing:1.11px;font-weight:normal;">0.0.0.0/0</div><div class="t" style="left:1253px;top:657px;font-size:11px;line-height:11px;color:#3a3946;letter-spacing:0.35px;font-weight:normal;">UDP</div><div class="t" style="left:1372px;top:651px;font-size:11px;line-height:11px;color:#3a3946;letter-spacing:0.79px;font-weight:normal;">Source Port: ANY</div><div class="t" style="left:1367px;top:664px;font-size:11px;line-height:11px;color:#3a3946;letter-spacing:0.77px;font-weight:normal;">Destination Port: RTP</div><svg class="r" style="left:1726px;top:650px" width="14" height="23" viewBox="0 0 14 23" shape-rendering="crispEdges"><rect x="4" y="1" width="6" height="1" fill="#ffffff"/><rect x="3" y="2" width="8" height="1" fill="#ffffff"/><rect x="2" y="3" width="10" height="1" fill="#ffffff"/><rect x="1" y="4" width="12" height="6" fill="#ffffff"/><rect x="2" y="10" width="10" height="1" fill="#ffffff"/><rect x="3" y="11" width="8" height="1" fill="#ffffff"/><rect x="4" y="12" width="6" height="3" fill="#ffffff"/><rect x="4" y="15" width="6" height="7" fill="#9a9a9a"/><rect x="5" y="21" width="4" height="1" fill="#9a9a9a"/><rect x="3" y="6" width="7" height="1" fill="#8a8a8a"/><rect x="3" y="7" width="1" height="1" fill="#8a8a8a"/><rect x="9" y="7" width="1" height="1" fill="#8a8a8a"/><rect x="4" y="8" width="1" height="1" fill="#8a8a8a"/><rect x="8" y="8" width="1" height="1" fill="#8a8a8a"/><rect x="5" y="9" width="1" height="1" fill="#8a8a8a"/><rect x="7" y="9" width="1" height="1" fill="#8a8a8a"/><rect x="6" y="10" width="1" height="2" fill="#8a8a8a"/><rect x="6" y="15" width="2" height="6" fill="#6e6e6e"/><rect x="4" y="0" width="6" height="1" fill="#000"/><rect x="3" y="1" width="1" height="1" fill="#000"/><rect x="10" y="1" width="1" height="1" fill="#000"/><rect x="2" y="2" width="1" height="1" fill="#000"/><rect x="11" y="2" width="1" height="1" fill="#000"/><rect x="1" y="3" width="1" height="1" fill="#000"/><rect x="12" y="3" width="1" height="1" fill="#000"/><rect x="0" y="4" width="1" height="6" fill="#000"/><rect x="13" y="4" width="1" height="6" fill="#000"/><rect x="1" y="10" width="1" height="1" fill="#000"/><rect x="12" y="10" width="1" height="1" fill="#000"/><rect x="2" y="11" width="1" height="1" fill="#000"/><rect x="11" y="11" width="1" height="1" fill="#000"/><rect x="3" y="12" width="1" height="3" fill="#000"/><rect x="10" y="12" width="1" height="3" fill="#000"/><rect x="4" y="14" width="1" height="1" fill="#000"/><rect x="9" y="14" width="1" height="1" fill="#000"/><rect x="3" y="15" width="1" height="1" fill="#000"/><rect x="10" y="15" width="1" height="1" fill="#000"/><rect x="4" y="16" width="1" height="1" fill="#000"/><rect x="9" y="16" width="1" height="1" fill="#000"/><rect x="3" y="17" width="1" height="1" fill="#000"/><rect x="10" y="17" width="1" height="1" fill="#000"/><rect x="4" y="18" width="1" height="1" fill="#000"/><rect x="9" y="18" width="1" height="1" fill="#000"/><rect x="3" y="19" width="1" height="1" fill="#000"/><rect x="10" y="19" width="1" height="1" fill="#000"/><rect x="4" y="20" width="1" height="1" fill="#000"/><rect x="9" y="20" width="1" height="1" fill="#000"/><rect x="3" y="21" width="1" height="1" fill="#000"/><rect x="10" y="21" width="1" height="1" fill="#000"/><rect x="4" y="21" width="1" height="1" fill="#000"/><rect x="9" y="21" width="1" height="1" fill="#000"/><rect x="5" y="22" width="4" height="1" fill="#000"/></svg><svg class="r" style="left:1795px;top:644px" width="32" height="34" viewBox="0 0 32 34"><path d="M4.2 16.5 L9 8.4 L11.1 10.2 L14.2 7.1 L27.6 20.9 L18.2 30.5 Z" fill="url(#gE)" stroke="#1a3fd6" stroke-width="1.2" stroke-linejoin="round"/><path d="M11.6 10.4 L14.2 8.1 L26.4 20.8 L23.3 22.2 Z" fill="#eef4ff"/><path d="M11.1 10.2 L23 22.6" stroke="#1a3fd6" stroke-width="1.1"/><path d="M17.3 13.6 L25.7 5 L29.7 8.8 L20.9 17.6 Z" fill="url(#gP)" stroke="#e0901e" stroke-width="0.4"/><g fill="#f6b03a"><rect x="5.2" y="18.2" width="1.5" height="1.5"/><rect x="7.5" y="20.6" width="1.5" height="1.5"/><rect x="9.9" y="23" width="1.5" height="1.5"/><rect x="12.3" y="25.4" width="1.5" height="1.5"/><rect x="14.7" y="27.8" width="1.5" height="1.5"/></g></svg><div class="r" style="left:295px;top:745px;width:1588px;height:1px;background:#dedede;"></div><div class="r" style="left:300px;top:713px;width:11px;height:11px;border:1px solid #333;background:#fff"></div><div class="t" style="left:341px;top:709px;width:41px;text-align:center;font-size:19px;line-height:19px;color:#e4431f;letter-spacing:0.2px">9</div><svg class="r" style="left:375px;top:709px" width="16" height="16" viewBox="0 0 16 16"><rect x="1.4" y="1.4" width="14" height="14" rx="2.4" fill="#555" opacity="0.45"/><rect x="0.45" y="0.45" width="13.3" height="13.3" rx="2.4" fill="url(#gA)" stroke="#0a35c6" stroke-width="0.9"/><path d="M7 2.3 L2.2 7.1 L3.6 8.5 L6 6.1 V12 H8 V6.1 L10.4 8.5 L11.8 7.1 Z" fill="#fff"/></svg><svg class="r" style="left:395px;top:709px" width="16" height="16" viewBox="0 0 16 16"><rect x="1.4" y="1.4" width="14" height="14" rx="2.4" fill="#555" opacity="0.45"/><rect x="0.45" y="0.45" width="13.3" height="13.3" rx="2.4" fill="url(#gA)" stroke="#0a35c6" stroke-width="0.9"/><path d="M7 12 L2.2 7.2 L3.6 5.8 L6 8.2 V1.5 H8 V8.2 L10.4 5.8 L11.8 7.2 Z" fill="#fff"/></svg><svg class="r" style="left:483px;top:693px" width="40" height="44" viewBox="0 0 40 44"><path d="M8.4 7.1 C12 5.8 17 5.6 20.4 6 C27 6.8 33 8 36.8 10.1 C33 12.5 27 14.5 23.5 15.5 C18 12 12 9.5 8.4 7.1 Z" fill="#e9e9f6" stroke="#a0a0b8" stroke-width="0.5"/><path d="M8.4 7.1 C12 9.5 18 12 23.5 15.5 L22 41.6 C17 39 12 34 8.4 30 Z" fill="url(#gIn)"/><path d="M23.5 15.5 C27 14.5 33 12.5 36.8 10.1 L34.5 36 C32 39 27 41 22 41.6 Z" fill="url(#gFr)"/><path d="M23.3 17.8 L35.4 15.8 L33.2 33.3 L23.3 36 Z" fill="#15151c"/><path d="M24.7 19.2 L34.1 17.5 L32.1 32.1 L24.7 34.3 Z" fill="#f0f0f8"/><path d="M2.4 21 H11.4 V16.1 L19.1 25 L11.4 33.9 V28.9 H2.4 Z" fill="url(#gAr)" stroke="#1b7a10" stroke-width="0.8" stroke-linejoin="round"/></svg><svg class="r" style="left:582px;top:709px" width="19" height="19" viewBox="0 0 19 19"><path d="M3.5 0.5 H14.5 V2.3 H17.5 V4.7 H14.5 V8.5 H17.5 V10.9 H14.5 V17.5 H3.5 V10.9 H0.5 V8.5 H3.5 V4.7 H0.5 V2.3 H3.5 Z" fill="url(#gL)" stroke="#9b7128" stroke-width="1"/><circle cx="10" cy="4.6" r="2.8" fill="#e0c040" opacity="0.8"/><circle cx="9.2" cy="11.5" r="4.1" fill="#17d10f"/></svg><div class="t" style="left:676px;top:713px;font-size:11px;line-height:11px;color:#3a3946;letter-spacing:0.77px;font-weight:normal;">IN: ANY</div><div class="t" style="left:802px;top:713px;font-size:11px;line-height:11px;color:#3a3946;letter-spacing:1.11px;font-weight:normal;">0.0.0.0/0</div><div class="t" style="left:1001px;top:713px;font-size:11px;line-height:11px;color:#3a3946;letter-spacing:1.11px;font-weight:normal;">0.0.0.0/0</div><div class="t" style="left:1253px;top:713px;font-size:11px;line-height:11px;color:#3a3946;letter-spacing:0.35px;font-weight:normal;">UDP</div><div class="t" style="left:1372px;top:707px;font-size:11px;line-height:11px;color:#3a3946;letter-spacing:0.79px;font-weight:normal;">Source Port: ANY</div><div class="t" style="left:1367px;top:720px;font-size:11px;line-height:11px;color:#3a3946;letter-spacing:0.76px;font-weight:normal;">Destination Port: MGCP</div><svg class="r" style="left:1726px;top:706px" width="14" height="23" viewBox="0 0 14 23" shape-rendering="crispEdges"><rect x="4" y="1" width="6" height="1" fill="#ffffff"/><rect x="3" y="2" width="8" height="1" fill="#ffffff"/><rect x="2" y="3" width="10" height="1" fill="#ffffff"/><rect x="1" y="4" width="12" height="6" fill="#ffffff"/><rect x="2" y="10" width="10" height="1" fill="#ffffff"/><rect x="3" y="11" width="8" height="1" fill="#ffffff"/><rect x="4" y="12" width="6" height="3" fill="#ffffff"/><rect x="4" y="15" width="6" height="7" fill="#9a9a9a"/><rect x="5" y="21" width="4" height="1" fill="#9a9a9a"/><rect x="3" y="6" width="7" height="1" fill="#8a8a8a"/><rect x="3" y="7" width="1" height="1" fill="#8a8a8a"/><rect x="9" y="7" width="1" height="1" fill="#8a8a8a"/><rect x="4" y="8" width="1" height="1" fill="#8a8a8a"/><rect x="8" y="8" width="1" height="1" fill="#8a8a8a"/><rect x="5" y="9" width="1" height="1" fill="#8a8a8a"/><rect x="7" y="9" width="1" height="1" fill="#8a8a8a"/><rect x="6" y="10" width="1" height="2" fill="#8a8a8a"/><rect x="6" y="15" width="2" height="6" fill="#6e6e6e"/><rect x="4" y="0" width="6" height="1" fill="#000"/><rect x="3" y="1" width="1" height="1" fill="#000"/><rect x="10" y="1" width="1" height="1" fill="#000"/><rect x="2" y="2" width="1" height="1" fill="#000"/><rect x="11" y="2" width="1" height="1" fill="#000"/><rect x="1" y="3" width="1" height="1" fill="#000"/><rect x="12" y="3" width="1" height="1" fill="#000"/><rect x="0" y="4" width="1" height="6" fill="#000"/><rect x="13" y="4" width="1" height="6" fill="#000"/><rect x="1" y="10" width="1" height="1" fill="#000"/><rect x="12" y="10" width="1" height="1" fill="#000"/><rect x="2" y="11" width="1" height="1" fill="#000"/><rect x="11" y="11" width="1" height="1" fill="#000"/><rect x="3" y="12" width="1" height="3" fill="#000"/><rect x="10" y="12" width="1" height="3" fill="#000"/><rect x="4" y="14" width="1" height="1" fill="#000"/><rect x="9" y="14" width="1" height="1" fill="#000"/><rect x="3" y="15" width="1" height="1" fill="#000"/><rect x="10" y="15" width="1" height="1" fill="#000"/><rect x="4" y="16" width="1" height="1" fill="#000"/><rect x="9" y="16" width="1" height="1" fill="#000"/><rect x="3" y="17" width="1" height="1" fill="#000"/><rect x="10" y="17" width="1" height="1" fill="#000"/><rect x="4" y="18" width="1" height="1" fill="#000"/><rect x="9" y="18" width="1" height="1" fill="#000"/><rect x="3" y="19" width="1" height="1" fill="#000"/><rect x="10" y="19" width="1" height="1" fill="#000"/><rect x="4" y="20" width="1" height="1" fill="#000"/><rect x="9" y="20" width="1" height="1" fill="#000"/><rect x="3" y="21" width="1" height="1" fill="#000"/><rect x="10" y="21" width="1" height="1" fill="#000"/><rect x="4" y="21" width="1" height="1" fill="#000"/><rect x="9" y="21" width="1" height="1" fill="#000"/><rect x="5" y="22" width="4" height="1" fill="#000"/></svg><svg class="r" style="left:1795px;top:700px" width="32" height="34" viewBox="0 0 32 34"><path d="M4.2 16.5 L9 8.4 L11.1 10.2 L14.2 7.1 L27.6 20.9 L18.2 30.5 Z" fill="url(#gE)" stroke="#1a3fd6" stroke-width="1.2" stroke-linejoin="round"/><path d="M11.6 10.4 L14.2 8.1 L26.4 20.8 L23.3 22.2 Z" fill="#eef4ff"/><path d="M11.1 10.2 L23 22.6" stroke="#1a3fd6" stroke-width="1.1"/><path d="M17.3 13.6 L25.7 5 L29.7 8.8 L20.9 17.6 Z" fill="url(#gP)" stroke="#e0901e" stroke-width="0.4"/><g fill="#f6b03a"><rect x="5.2" y="18.2" width="1.5" height="1.5"/><rect x="7.5" y="20.6" width="1.5" height="1.5"/><rect x="9.9" y="23" width="1.5" height="1.5"/><rect x="12.3" y="25.4" width="1.5" height="1.5"/><rect x="14.7" y="27.8" width="1.5" height="1.5"/></g></svg><div class="r" style="left:295px;top:801px;width:1588px;height:1px;background:#dedede;"></div><div class="r" style="left:300px;top:769px;width:11px;height:11px;border:1px solid #333;background:#fff"></div><div class="t" style="left:341px;top:765px;width:41px;text-align:center;font-size:19px;line-height:19px;color:#e4431f;letter-spacing:0.2px">10</div><svg class="r" style="left:375px;top:765px" width="16" height="16" viewBox="0 0 16 16"><rect x="1.4" y="1.4" width="14" height="14" rx="2.4" fill="#555" opacity="0.45"/><rect x="0.45" y="0.45" width="13.3" height="13.3" rx="2.4" fill="url(#gA)" stroke="#0a35c6" stroke-width="0.9"/><path d="M7 2.3 L2.2 7.1 L3.6 8.5 L6 6.1 V12 H8 V6.1 L10.4 8.5 L11.8 7.1 Z" fill="#fff"/></svg><svg class="r" style="left:395px;top:765px" width="16" height="16" viewBox="0 0 16 16"><rect x="1.4" y="1.4" width="14" height="14" rx="2.4" fill="#555" opacity="0.45"/><rect x="0.45" y="0.45" width="13.3" height="13.3" rx="2.4" fill="url(#gA)" stroke="#0a35c6" stroke-width="0.9"/><path d="M7 12 L2.2 7.2 L3.6 5.8 L6 8.2 V1.5 H8 V8.2 L10.4 5.8 L11.8 7.2 Z" fill="#fff"/></svg><svg class="r" style="left:483px;top:749px" width="40" height="44" viewBox="0 0 40 44"><path d="M8.4 7.1 C12 5.8 17 5.6 20.4 6 C27 6.8 33 8 36.8 10.1 C33 12.5 27 14.5 23.5 15.5 C18 12 12 9.5 8.4 7.1 Z" fill="#e9e9f6" stroke="#a0a0b8" stroke-width="0.5"/><path d="M8.4 7.1 C12 9.5 18 12 23.5 15.5 L22 41.6 C17 39 12 34 8.4 30 Z" fill="url(#gIn)"/><path d="M23.5 15.5 C27 14.5 33 12.5 36.8 10.1 L34.5 36 C32 39 27 41 22 41.6 Z" fill="url(#gFr)"/><path d="M23.3 17.8 L35.4 15.8 L33.2 33.3 L23.3 36 Z" fill="#15151c"/><path d="M24.7 19.2 L34.1 17.5 L32.1 32.1 L24.7 34.3 Z" fill="#f0f0f8"/><path d="M2.4 21 H11.4 V16.1 L19.1 25 L11.4 33.9 V28.9 H2.4 Z" fill="url(#gAr)" stroke="#1b7a10" stroke-width="0.8" stroke-linejoin="round"/></svg><svg class="r" style="left:582px;top:765px" width="19" height="19" viewBox="0 0 19 19"><path d="M3.5 0.5 H14.5 V2.3 H17.5 V4.7 H14.5 V8.5 H17.5 V10.9 H14.5 V17.5 H3.5 V10.9 H0.5 V8.5 H3.5 V4.7 H0.5 V2.3 H3.5 Z" fill="url(#gL)" stroke="#9b7128" stroke-width="1"/><circle cx="10" cy="4.6" r="2.8" fill="#e0c040" opacity="0.8"/><circle cx="9.2" cy="11.5" r="4.1" fill="#17d10f"/></svg><div class="t" style="left:676px;top:769px;font-size:11px;line-height:11px;color:#3a3946;letter-spacing:0.77px;font-weight:normal;">IN: ANY</div><div class="t" style="left:802px;top:769px;font-size:11px;line-height:11px;color:#3a3946;letter-spacing:1.11px;font-weight:normal;">0.0.0.0/0</div><div class="t" style="left:1001px;top:769px;font-size:11px;line-height:11px;color:#3a3946;letter-spacing:1.11px;font-weight:normal;">0.0.0.0/0</div><div class="t" style="left:1253px;top:769px;font-size:11px;line-height:11px;color:#3a3946;letter-spacing:0.35px;font-weight:normal;">UDP</div><div class="t" style="left:1372px;top:763px;font-size:11px;line-height:11px;color:#3a3946;letter-spacing:0.83px;font-weight:normal;">Source Port: DNS</div><div class="t" style="left:1367px;top:776px;font-size:11px;line-height:11px;color:#3a3946;letter-spacing:0.8px;font-weight:normal;">Destination Port: ANY</div><svg class="r" style="left:1726px;top:762px" width="14" height="23" viewBox="0 0 14 23" shape-rendering="crispEdges"><rect x="4" y="1" width="6" height="1" fill="#ffffff"/><rect x="3" y="2" width="8" height="1" fill="#ffffff"/><rect x="2" y="3" width="10" height="1" fill="#ffffff"/><rect x="1" y="4" width="12" height="6" fill="#ffffff"/><rect x="2" y="10" width="10" height="1" fill="#ffffff"/><rect x="3" y="11" width="8" height="1" fill="#ffffff"/><rect x="4" y="12" width="6" height="3" fill="#ffffff"/><rect x="4" y="15" width="6" height="7" fill="#9a9a9a"/><rect x="5" y="21" width="4" height="1" fill="#9a9a9a"/><rect x="3" y="6" width="7" height="1" fill="#8a8a8a"/><rect x="3" y="7" width="1" height="1" fill="#8a8a8a"/><rect x="9" y="7" width="1" height="1" fill="#8a8a8a"/><rect x="4" y="8" width="1" height="1" fill="#8a8a8a"/><rect x="8" y="8" width="1" height="1" fill="#8a8a8a"/><rect x="5" y="9" width="1" height="1" fill="#8a8a8a"/><rect x="7" y="9" width="1" height="1" fill="#8a8a8a"/><rect x="6" y="10" width="1" height="2" fill="#8a8a8a"/><rect x="6" y="15" width="2" height="6" fill="#6e6e6e"/><rect x="4" y="0" width="6" height="1" fill="#000"/><rect x="3" y="1" width="1" height="1" fill="#000"/><rect x="10" y="1" width="1" height="1" fill="#000"/><rect x="2" y="2" width="1" height="1" fill="#000"/><rect x="11" y="2" width="1" height="1" fill="#000"/><rect x="1" y="3" width="1" height="1" fill="#000"/><rect x="12" y="3" width="1" height="1" fill="#000"/><rect x="0" y="4" width="1" height="6" fill="#000"/><rect x="13" y="4" width="1" height="6" fill="#000"/><rect x="1" y="10" width="1" height="1" fill="#000"/><rect x="12" y="10" width="1" height="1" fill="#000"/><rect x="2" y="11" width="1" height="1" fill="#000"/><rect x="11" y="11" width="1" height="1" fill="#000"/><rect x="3" y="12" width="1" height="3" fill="#000"/><rect x="10" y="12" width="1" height="3" fill="#000"/><rect x="4" y="14" width="1" height="1" fill="#000"/><rect x="9" y="14" width="1" height="1" fill="#000"/><rect x="3" y="15" width="1" height="1" fill="#000"/><rect x="10" y="15" width="1" height="1" fill="#000"/><rect x="4" y="16" width="1" height="1" fill="#000"/><rect x="9" y="16" width="1" height="1" fill="#000"/><rect x="3" y="17" width="1" height="1" fill="#000"/><rect x="10" y="17" width="1" height="1" fill="#000"/><rect x="4" y="18" width="1" height="1" fill="#000"/><rect x="9" y="18" width="1" height="1" fill="#000"/><rect x="3" y="19" width="1" height="1" fill="#000"/><rect x="10" y="19" width="1" height="1" fill="#000"/><rect x="4" y="20" width="1" height="1" fill="#000"/><rect x="9" y="20" width="1" height="1" fill="#000"/><rect x="3" y="21" width="1" height="1" fill="#000"/><rect x="10" y="21" width="1" height="1" fill="#000"/><rect x="4" y="21" width="1" height="1" fill="#000"/><rect x="9" y="21" width="1" height="1" fill="#000"/><rect x="5" y="22" width="4" height="1" fill="#000"/></svg><svg class="r" style="left:1795px;top:756px" width="32" height="34" viewBox="0 0 32 34"><path d="M4.2 16.5 L9 8.4 L11.1 10.2 L14.2 7.1 L27.6 20.9 L18.2 30.5 Z" fill="url(#gE)" stroke="#1a3fd6" stroke-width="1.2" stroke-linejoin="round"/><path d="M11.6 10.4 L14.2 8.1 L26.4 20.8 L23.3 22.2 Z" fill="#eef4ff"/><path d="M11.1 10.2 L23 22.6" stroke="#1a3fd6" stroke-width="1.1"/><path d="M17.3 13.6 L25.7 5 L29.7 8.8 L20.9 17.6 Z" fill="url(#gP)" stroke="#e0901e" stroke-width="0.4"/><g fill="#f6b03a"><rect x="5.2" y="18.2" width="1.5" height="1.5"/><rect x="7.5" y="20.6" width="1.5" height="1.5"/><rect x="9.9" y="23" width="1.5" height="1.5"/><rect x="12.3" y="25.4" width="1.5" height="1.5"/><rect x="14.7" y="27.8" width="1.5" height="1.5"/></g></svg><div class="r" style="left:295px;top:857px;width:1588px;height:1px;background:#dedede;"></div><div class="r" style="left:300px;top:825px;width:11px;height:11px;border:1px solid #333;background:#fff"></div><div class="t" style="left:341px;top:821px;width:41px;text-align:center;font-size:19px;line-height:19px;color:#e4431f;letter-spacing:0.2px">11</div><svg class="r" style="left:375px;top:821px" width="16" height="16" viewBox="0 0 16 16"><rect x="1.4" y="1.4" width="14" height="14" rx="2.4" fill="#555" opacity="0.45"/><rect x="0.45" y="0.45" width="13.3" height="13.3" rx="2.4" fill="url(#gA)" stroke="#0a35c6" stroke-width="0.9"/><path d="M7 2.3 L2.2 7.1 L3.6 8.5 L6 6.1 V12 H8 V6.1 L10.4 8.5 L11.8 7.1 Z" fill="#fff"/></svg><svg class="r" style="left:395px;top:821px" width="16" height="16" viewBox="0 0 16 16"><rect x="1.4" y="1.4" width="14" height="14" rx="2.4" fill="#555" opacity="0.45"/><rect x="0.45" y="0.45" width="13.3" height="13.3" rx="2.4" fill="url(#gA)" stroke="#0a35c6" stroke-width="0.9"/><path d="M7 12 L2.2 7.2 L3.6 5.8 L6 8.2 V1.5 H8 V8.2 L10.4 5.8 L11.8 7.2 Z" fill="#fff"/></svg><svg class="r" style="left:483px;top:805px" width="40" height="44" viewBox="0 0 40 44"><path d="M8.4 7.1 C12 5.8 17 5.6 20.4 6 C27 6.8 33 8 36.8 10.1 C33 12.5 27 14.5 23.5 15.5 C18 12 12 9.5 8.4 7.1 Z" fill="#e9e9f6" stroke="#a0a0b8" stroke-width="0.5"/><path d="M8.4 7.1 C12 9.5 18 12 23.5 15.5 L22 41.6 C17 39 12 34 8.4 30 Z" fill="url(#gIn)"/><path d="M23.5 15.5 C27 14.5 33 12.5 36.8 10.1 L34.5 36 C32 39 27 41 22 41.6 Z" fill="url(#gFr)"/><path d="M23.3 17.8 L35.4 15.8 L33.2 33.3 L23.3 36 Z" fill="#15151c"/><path d="M24.7 19.2 L34.1 17.5 L32.1 32.1 L24.7 34.3 Z" fill="#f0f0f8"/><path d="M2.4 21 H11.4 V16.1 L19.1 25 L11.4 33.9 V28.9 H2.4 Z" fill="url(#gAr)" stroke="#1b7a10" stroke-width="0.8" stroke-linejoin="round"/></svg><svg class="r" style="left:582px;top:821px" width="19" height="19" viewBox="0 0 19 19"><path d="M3.5 0.5 H14.5 V2.3 H17.5 V4.7 H14.5 V8.5 H17.5 V10.9 H14.5 V17.5 H3.5 V10.9 H0.5 V8.5 H3.5 V4.7 H0.5 V2.3 H3.5 Z" fill="url(#gL)" stroke="#9b7128" stroke-width="1"/><circle cx="10" cy="4.6" r="2.8" fill="#e0c040" opacity="0.8"/><circle cx="9.2" cy="11.5" r="4.1" fill="#17d10f"/></svg><div class="t" style="left:676px;top:825px;font-size:11px;line-height:11px;color:#3a3946;letter-spacing:0.77px;font-weight:normal;">IN: ANY</div><div class="t" style="left:802px;top:825px;font-size:11px;line-height:11px;color:#3a3946;letter-spacing:1.11px;font-weight:normal;">0.0.0.0/0</div><div class="t" style="left:1001px;top:825px;font-size:11px;line-height:11px;color:#3a3946;letter-spacing:1.11px;font-weight:normal;">0.0.0.0/0</div><div class="t" style="left:1253px;top:825px;font-size:11px;line-height:11px;color:#3a3946;letter-spacing:0.35px;font-weight:normal;">UDP</div><div class="t" style="left:1372px;top:819px;font-size:11px;line-height:11px;color:#3a3946;letter-spacing:0.79px;font-weight:normal;">Source Port: ANY</div><div class="t" style="left:1367px;top:832px;font-size:11px;line-height:11px;color:#3a3946;letter-spacing:0.72px;font-weight:normal;">Destination Port: TFTP</div><svg class="r" style="left:1726px;top:818px" width="14" height="23" viewBox="0 0 14 23" shape-rendering="crispEdges"><rect x="4" y="1" width="6" height="1" fill="#ffffff"/><rect x="3" y="2" width="8" height="1" fill="#ffffff"/><rect x="2" y="3" width="10" height="1" fill="#ffffff"/><rect x="1" y="4" width="12" height="6" fill="#ffffff"/><rect x="2" y="10" width="10" height="1" fill="#ffffff"/><rect x="3" y="11" width="8" height="1" fill="#ffffff"/><rect x="4" y="12" width="6" height="3" fill="#ffffff"/><rect x="4" y="15" width="6" height="7" fill="#9a9a9a"/><rect x="5" y="21" width="4" height="1" fill="#9a9a9a"/><rect x="3" y="6" width="7" height="1" fill="#8a8a8a"/><rect x="3" y="7" width="1" height="1" fill="#8a8a8a"/><rect x="9" y="7" width="1" height="1" fill="#8a8a8a"/><rect x="4" y="8" width="1" height="1" fill="#8a8a8a"/><rect x="8" y="8" width="1" height="1" fill="#8a8a8a"/><rect x="5" y="9" width="1" height="1" fill="#8a8a8a"/><rect x="7" y="9" width="1" height="1" fill="#8a8a8a"/><rect x="6" y="10" width="1" height="2" fill="#8a8a8a"/><rect x="6" y="15" width="2" height="6" fill="#6e6e6e"/><rect x="4" y="0" width="6" height="1" fill="#000"/><rect x="3" y="1" width="1" height="1" fill="#000"/><rect x="10" y="1" width="1" height="1" fill="#000"/><rect x="2" y="2" width="1" height="1" fill="#000"/><rect x="11" y="2" width="1" height="1" fill="#000"/><rect x="1" y="3" width="1" height="1" fill="#000"/><rect x="12" y="3" width="1" height="1" fill="#000"/><rect x="0" y="4" width="1" height="6" fill="#000"/><rect x="13" y="4" width="1" height="6" fill="#000"/><rect x="1" y="10" width="1" height="1" fill="#000"/><rect x="12" y="10" width="1" height="1" fill="#000"/><rect x="2" y="11" width="1" height="1" fill="#000"/><rect x="11" y="11" width="1" height="1" fill="#000"/><rect x="3" y="12" width="1" height="3" fill="#000"/><rect x="10" y="12" width="1" height="3" fill="#000"/><rect x="4" y="14" width="1" height="1" fill="#000"/><rect x="9" y="14" width="1" height="1" fill="#000"/><rect x="3" y="15" width="1" height="1" fill="#000"/><rect x="10" y="15" width="1" height="1" fill="#000"/><rect x="4" y="16" width="1" height="1" fill="#000"/><rect x="9" y="16" width="1" height="1" fill="#000"/><rect x="3" y="17" width="1" height="1" fill="#000"/><rect x="10" y="17" width="1" height="1" fill="#000"/><rect x="4" y="18" width="1" height="1" fill="#000"/><rect x="9" y="18" width="1" height="1" fill="#000"/><rect x="3" y="19" width="1" height="1" fill="#000"/><rect x="10" y="19" width="1" height="1" fill="#000"/><rect x="4" y="20" width="1" height="1" fill="#000"/><rect x="9" y="20" width="1" height="1" fill="#000"/><rect x="3" y="21" width="1" height="1" fill="#000"/><rect x="10" y="21" width="1" height="1" fill="#000"/><rect x="4" y="21" width="1" height="1" fill="#000"/><rect x="9" y="21" width="1" height="1" fill="#000"/><rect x="5" y="22" width="4" height="1" fill="#000"/></svg><svg class="r" style="left:1795px;top:812px" width="32" height="34" viewBox="0 0 32 34"><path d="M4.2 16.5 L9 8.4 L11.1 10.2 L14.2 7.1 L27.6 20.9 L18.2 30.5 Z" fill="url(#gE)" stroke="#1a3fd6" stroke-width="1.2" stroke-linejoin="round"/><path d="M11.6 10.4 L14.2 8.1 L26.4 20.8 L23.3 22.2 Z" fill="#eef4ff"/><path d="M11.1 10.2 L23 22.6" stroke="#1a3fd6" stroke-width="1.1"/><path d="M17.3 13.6 L25.7 5 L29.7 8.8 L20.9 17.6 Z" fill="url(#gP)" stroke="#e0901e" stroke-width="0.4"/><g fill="#f6b03a"><rect x="5.2" y="18.2" width="1.5" height="1.5"/><rect x="7.5" y="20.6" width="1.5" height="1.5"/><rect x="9.9" y="23" width="1.5" height="1.5"/><rect x="12.3" y="25.4" width="1.5" height="1.5"/><rect x="14.7" y="27.8" width="1.5" height="1.5"/></g></svg><div class="r" style="left:295px;top:913px;width:1588px;height:1px;background:#dedede;"></div><div class="r" style="left:300px;top:881px;width:11px;height:11px;border:1px solid #333;background:#fff"></div><div class="t" style="left:341px;top:877px;width:41px;text-align:center;font-size:19px;line-height:19px;color:#e4431f;letter-spacing:0.2px">12</div><svg class="r" style="left:375px;top:877px" width="16" height="16" viewBox="0 0 16 16"><rect x="1.4" y="1.4" width="14" height="14" rx="2.4" fill="#555" opacity="0.45"/><rect x="0.45" y="0.45" width="13.3" height="13.3" rx="2.4" fill="url(#gA)" stroke="#0a35c6" stroke-width="0.9"/><path d="M7 2.3 L2.2 7.1 L3.6 8.5 L6 6.1 V12 H8 V6.1 L10.4 8.5 L11.8 7.1 Z" fill="#fff"/></svg><svg class="r" style="left:395px;top:877px" width="16" height="16" viewBox="0 0 16 16"><rect x="1.4" y="1.4" width="14" height="14" rx="2.4" fill="#555" opacity="0.45"/><rect x="0.45" y="0.45" width="13.3" height="13.3" rx="2.4" fill="url(#gA)" stroke="#0a35c6" stroke-width="0.9"/><path d="M7 12 L2.2 7.2 L3.6 5.8 L6 8.2 V1.5 H8 V8.2 L10.4 5.8 L11.8 7.2 Z" fill="#fff"/></svg><svg class="r" style="left:483px;top:861px" width="40" height="44" viewBox="0 0 40 44"><path d="M8.4 7.1 C12 5.8 17 5.6 20.4 6 C27 6.8 33 8 36.8 10.1 C33 12.5 27 14.5 23.5 15.5 C18 12 12 9.5 8.4 7.1 Z" fill="#e9e9f6" stroke="#a0a0b8" stroke-width="0.5"/><path d="M8.4 7.1 C12 9.5 18 12 23.5 15.5 L22 41.6 C17 39 12 34 8.4 30 Z" fill="url(#gIn)"/><path d="M23.5 15.5 C27 14.5 33 12.5 36.8 10.1 L34.5 36 C32 39 27 41 22 41.6 Z" fill="url(#gFr)"/><path d="M23.3 17.8 L35.4 15.8 L33.2 33.3 L23.3 36 Z" fill="#15151c"/><path d="M24.7 19.2 L34.1 17.5 L32.1 32.1 L24.7 34.3 Z" fill="#f0f0f8"/><path d="M2.4 21 H11.4 V16.1 L19.1 25 L11.4 33.9 V28.9 H2.4 Z" fill="url(#gAr)" stroke="#1b7a10" stroke-width="0.8" stroke-linejoin="round"/></svg><svg class="r" style="left:582px;top:877px" width="19" height="19" viewBox="0 0 19 19"><path d="M3.5 0.5 H14.5 V2.3 H17.5 V4.7 H14.5 V8.5 H17.5 V10.9 H14.5 V17.5 H3.5 V10.9 H0.5 V8.5 H3.5 V4.7 H0.5 V2.3 H3.5 Z" fill="url(#gL)" stroke="#9b7128" stroke-width="1"/><circle cx="10" cy="4.6" r="2.8" fill="#e0c040" opacity="0.8"/><circle cx="9.2" cy="11.5" r="4.1" fill="#17d10f"/></svg><div class="t" style="left:676px;top:881px;font-size:11px;line-height:11px;color:#3a3946;letter-spacing:0.77px;font-weight:normal;">IN: ANY</div><div class="t" style="left:802px;top:881px;font-size:11px;line-height:11px;color:#3a3946;letter-spacing:1.11px;font-weight:normal;">0.0.0.0/0</div><div class="t" style="left:1001px;top:881px;font-size:11px;line-height:11px;color:#3a3946;letter-spacing:1.11px;font-weight:normal;">0.0.0.0/0</div><div class="t" style="left:1253px;top:881px;font-size:11px;line-height:11px;color:#3a3946;letter-spacing:0.35px;font-weight:normal;">TCP</div><div class="t" style="left:1372px;top:875px;font-size:11px;line-height:11px;color:#3a3946;letter-spacing:0.79px;font-weight:normal;">Source Port: ANY</div><div class="t" style="left:1367px;top:888px;font-size:11px;line-height:11px;color:#3a3946;letter-spacing:0.76px;font-weight:normal;">Destination Port: SMTP</div><svg class="r" style="left:1726px;top:874px" width="14" height="23" viewBox="0 0 14 23" shape-rendering="crispEdges"><rect x="4" y="1" width="6" height="1" fill="#ffff90"/><rect x="3" y="2" width="8" height="1" fill="#ffff90"/><rect x="2" y="3" width="10" height="1" fill="#ffff90"/><rect x="1" y="4" width="12" height="6" fill="#ffff90"/><rect x="2" y="10" width="10" height="1" fill="#ffff90"/><rect x="3" y="11" width="8" height="1" fill="#ffff90"/><rect x="4" y="12" width="6" height="3" fill="#ffff90"/><rect x="4" y="15" width="6" height="7" fill="#ffa81a"/><rect x="5" y="21" width="4" height="1" fill="#ffa81a"/><rect x="3" y="6" width="7" height="1" fill="#ffe800"/><rect x="3" y="7" width="1" height="1" fill="#ffe800"/><rect x="9" y="7" width="1" height="1" fill="#ffe800"/><rect x="4" y="8" width="1" height="1" fill="#ffe800"/><rect x="8" y="8" width="1" height="1" fill="#ffe800"/><rect x="5" y="9" width="1" height="1" fill="#ffe800"/><rect x="7" y="9" width="1" height="1" fill="#ffe800"/><rect x="6" y="10" width="1" height="2" fill="#ffe800"/><rect x="4" y="0" width="6" height="1" fill="#000"/><rect x="3" y="1" width="1" height="1" fill="#000"/><rect x="10" y="1" width="1" height="1" fill="#000"/><rect x="2" y="2" width="1" height="1" fill="#000"/><rect x="11" y="2" width="1" height="1" fill="#000"/><rect x="1" y="3" width="1" height="1" fill="#000"/><rect x="12" y="3" width="1" height="1" fill="#000"/><rect x="0" y="4" width="1" height="6" fill="#000"/><rect x="13" y="4" width="1" height="6" fill="#000"/><rect x="1" y="10" width="1" height="1" fill="#000"/><rect x="12" y="10" width="1" height="1" fill="#000"/><rect x="2" y="11" width="1" height="1" fill="#000"/><rect x="11" y="11" width="1" height="1" fill="#000"/><rect x="3" y="12" width="1" height="3" fill="#000"/><rect x="10" y="12" width="1" height="3" fill="#000"/><rect x="4" y="14" width="1" height="1" fill="#000"/><rect x="9" y="14" width="1" height="1" fill="#000"/><rect x="3" y="15" width="1" height="1" fill="#000"/><rect x="10" y="15" width="1" height="1" fill="#000"/><rect x="4" y="16" width="1" height="1" fill="#000"/><rect x="9" y="16" width="1" height="1" fill="#000"/><rect x="3" y="17" width="1" height="1" fill="#000"/><rect x="10" y="17" width="1" height="1" fill="#000"/><rect x="4" y="18" width="1" height="1" fill="#000"/><rect x="9" y="18" width="1" height="1" fill="#000"/><rect x="3" y="19" width="1" height="1" fill="#000"/><rect x="10" y="19" width="1" height="1" fill="#000"/><rect x="4" y="20" width="1" height="1" fill="#000"/><rect x="9" y="20" width="1" height="1" fill="#000"/><rect x="3" y="21" width="1" height="1" fill="#000"/><rect x="10" y="21" width="1" height="1" fill="#000"/><rect x="4" y="21" width="1" height="1" fill="#000"/><rect x="9" y="21" width="1" height="1" fill="#000"/><rect x="5" y="22" width="4" height="1" fill="#000"/></svg><svg class="r" style="left:1795px;top:868px" width="32" height="34" viewBox="0 0 32 34"><path d="M4.2 16.5 L9 8.4 L11.1 10.2 L14.2 7.1 L27.6 20.9 L18.2 30.5 Z" fill="url(#gE)" stroke="#1a3fd6" stroke-width="1.2" stroke-linejoin="round"/><path d="M11.6 10.4 L14.2 8.1 L26.4 20.8 L23.3 22.2 Z" fill="#eef4ff"/><path d="M11.1 10.2 L23 22.6" stroke="#1a3fd6" stroke-width="1.1"/><path d="M17.3 13.6 L25.7 5 L29.7 8.8 L20.9 17.6 Z" fill="url(#gP)" stroke="#e0901e" stroke-width="0.4"/><g fill="#f6b03a"><rect x="5.2" y="18.2" width="1.5" height="1.5"/><rect x="7.5" y="20.6" width="1.5" height="1.5"/><rect x="9.9" y="23" width="1.5" height="1.5"/><rect x="12.3" y="25.4" width="1.5" height="1.5"/><rect x="14.7" y="27.8" width="1.5" height="1.5"/></g></svg><div class="r" style="left:295px;top:969px;width:1588px;height:1px;background:#dedede;"></div><div class="r" style="left:300px;top:937px;width:11px;height:11px;border:1px solid #333;background:#fff"></div><div class="t" style="left:341px;top:933px;width:41px;text-align:center;font-size:19px;line-height:19px;color:#e4431f;letter-spacing:0.2px">13</div><svg class="r" style="left:375px;top:933px" width="16" height="16" viewBox="0 0 16 16"><rect x="1.4" y="1.4" width="14" height="14" rx="2.4" fill="#555" opacity="0.45"/><rect x="0.45" y="0.45" width="13.3" height="13.3" rx="2.4" fill="url(#gA)" stroke="#0a35c6" stroke-width="0.9"/><path d="M7 2.3 L2.2 7.1 L3.6 8.5 L6 6.1 V12 H8 V6.1 L10.4 8.5 L11.8 7.1 Z" fill="#fff"/></svg><svg class="r" style="left:395px;top:933px" width="16" height="16" viewBox="0 0 16 16"><rect x="1.4" y="1.4" width="14" height="14" rx="2.4" fill="#555" opacity="0.45"/><rect x="0.45" y="0.45" width="13.3" height="13.3" rx="2.4" fill="url(#gA)" stroke="#0a35c6" stroke-width="0.9"/><path d="M7 12 L2.2 7.2 L3.6 5.8 L6 8.2 V1.5 H8 V8.2 L10.4 5.8 L11.8 7.2 Z" fill="#fff"/></svg><svg class="r" style="left:483px;top:917px" width="40" height="44" viewBox="0 0 40 44"><path d="M8.4 7.1 C12 5.8 17 5.6 20.4 6 C27 6.8 33 8 36.8 10.1 C33 12.5 27 14.5 23.5 15.5 C18 12 12 9.5 8.4 7.1 Z" fill="#e9e9f6" stroke="#a0a0b8" stroke-width="0.5"/><path d="M8.4 7.1 C12 9.5 18 12 23.5 15.5 L22 41.6 C17 39 12 34 8.4 30 Z" fill="url(#gIn)"/><path d="M23.5 15.5 C27 14.5 33 12.5 36.8 10.1 L34.5 36 C32 39 27 41 22 41.6 Z" fill="url(#gFr)"/><path d="M23.3 17.8 L35.4 15.8 L33.2 33.3 L23.3 36 Z" fill="#15151c"/><path d="M24.7 19.2 L34.1 17.5 L32.1 32.1 L24.7 34.3 Z" fill="#f0f0f8"/><path d="M2.4 21 H11.4 V16.1 L19.1 25 L11.4 33.9 V28.9 H2.4 Z" fill="url(#gAr)" stroke="#1b7a10" stroke-width="0.8" stroke-linejoin="round"/></svg><svg class="r" style="left:582px;top:933px" width="19" height="19" viewBox="0 0 19 19"><path d="M3.5 0.5 H14.5 V2.3 H17.5 V4.7 H14.5 V8.5 H17.5 V10.9 H14.5 V17.5 H3.5 V10.9 H0.5 V8.5 H3.5 V4.7 H0.5 V2.3 H3.5 Z" fill="url(#gL)" stroke="#9b7128" stroke-width="1"/><circle cx="10" cy="4.6" r="2.8" fill="#e0c040" opacity="0.8"/><circle cx="9.2" cy="11.5" r="4.1" fill="#17d10f"/></svg><div class="t" style="left:676px;top:937px;font-size:11px;line-height:11px;color:#3a3946;letter-spacing:0.77px;font-weight:normal;">IN: ANY</div><div class="t" style="left:802px;top:937px;font-size:11px;line-height:11px;color:#3a3946;letter-spacing:1.11px;font-weight:normal;">0.0.0.0/0</div><div class="t" style="left:1001px;top:937px;font-size:11px;line-height:11px;color:#3a3946;letter-spacing:1.11px;font-weight:normal;">0.0.0.0/0</div><div class="t" style="left:1253px;top:937px;font-size:11px;line-height:11px;color:#3a3946;letter-spacing:0.35px;font-weight:normal;">TCP</div><div class="t" style="left:1372px;top:931px;font-size:11px;line-height:11px;color:#3a3946;letter-spacing:0.79px;font-weight:normal;">Source Port: ANY</div><div class="t" style="left:1367px;top:944px;font-size:11px;line-height:11px;color:#3a3946;letter-spacing:0.77px;font-weight:normal;">Destination Port: HTTP</div><svg class="r" style="left:1726px;top:930px" width="14" height="23" viewBox="0 0 14 23" shape-rendering="crispEdges"><rect x="4" y="1" width="6" height="1" fill="#ffff90"/><rect x="3" y="2" width="8" height="1" fill="#ffff90"/><rect x="2" y="3" width="10" height="1" fill="#ffff90"/><rect x="1" y="4" width="12" height="6" fill="#ffff90"/><rect x="2" y="10" width="10" height="1" fill="#ffff90"/><rect x="3" y="11" width="8" height="1" fill="#ffff90"/><rect x="4" y="12" width="6" height="3" fill="#ffff90"/><rect x="4" y="15" width="6" height="7" fill="#ffa81a"/><rect x="5" y="21" width="4" height="1" fill="#ffa81a"/><rect x="3" y="6" width="7" height="1" fill="#ffe800"/><rect x="3" y="7" width="1" height="1" fill="#ffe800"/><rect x="9" y="7" width="1" height="1" fill="#ffe800"/><rect x="4" y="8" width="1" height="1" fill="#ffe800"/><rect x="8" y="8" width="1" height="1" fill="#ffe800"/><rect x="5" y="9" width="1" height="1" fill="#ffe800"/><rect x="7" y="9" width="1" height="1" fill="#ffe800"/><rect x="6" y="10" width="1" height="2" fill="#ffe800"/><rect x="4" y="0" width="6" height="1" fill="#000"/><rect x="3" y="1" width="1" height="1" fill="#000"/><rect x="10" y="1" width="1" height="1" fill="#000"/><rect x="2" y="2" width="1" height="1" fill="#000"/><rect x="11" y="2" width="1" height="1" fill="#000"/><rect x="1" y="3" width="1" height="1" fill="#000"/><rect x="12" y="3" width="1" height="1" fill="#000"/><rect x="0" y="4" width="1" height="6" fill="#000"/><rect x="13" y="4" width="1" height="6" fill="#000"/><rect x="1" y="10" width="1" height="1" fill="#000"/><rect x="12" y="10" width="1" height="1" fill="#000"/><rect x="2" y="11" width="1" height="1" fill="#000"/><rect x="11" y="11" width="1" height="1" fill="#000"/><rect x="3" y="12" width="1" height="3" fill="#000"/><rect x="10" y="12" width="1" height="3" fill="#000"/><rect x="4" y="14" width="1" height="1" fill="#000"/><rect x="9" y="14" width="1" height="1" fill="#000"/><rect x="3" y="15" width="1" height="1" fill="#000"/><rect x="10" y="15" width="1" height="1" fill="#000"/><rect x="4" y="16" width="1" height="1" fill="#000"/><rect x="9" y="16" width="1" height="1" fill="#000"/><rect x="3" y="17" width="1" height="1" fill="#000"/><rect x="10" y="17" width="1" height="1" fill="#000"/><rect x="4" y="18" width="1" height="1" fill="#000"/><rect x="9" y="18" width="1" height="1" fill="#000"/><rect x="3" y="19" width="1" height="1" fill="#000"/><rect x="10" y="19" width="1" height="1" fill="#000"/><rect x="4" y="20" width="1" height="1" fill="#000"/><rect x="9" y="20" width="1" height="1" fill="#000"/><rect x="3" y="21" width="1" height="1" fill="#000"/><rect x="10" y="21" width="1" height="1" fill="#000"/><rect x="4" y="21" width="1" height="1" fill="#000"/><rect x="9" y="21" width="1" height="1" fill="#000"/><rect x="5" y="22" width="4" height="1" fill="#000"/></svg><svg class="r" style="left:1795px;top:924px" width="32" height="34" viewBox="0 0 32 34"><path d="M4.2 16.5 L9 8.4 L11.1 10.2 L14.2 7.1 L27.6 20.9 L18.2 30.5 Z" fill="url(#gE)" stroke="#1a3fd6" stroke-width="1.2" stroke-linejoin="round"/><path d="M11.6 10.4 L14.2 8.1 L26.4 20.8 L23.3 22.2 Z" fill="#eef4ff"/><path d="M11.1 10.2 L23 22.6" stroke="#1a3fd6" stroke-width="1.1"/><path d="M17.3 13.6 L25.7 5 L29.7 8.8 L20.9 17.6 Z" fill="url(#gP)" stroke="#e0901e" stroke-width="0.4"/><g fill="#f6b03a"><rect x="5.2" y="18.2" width="1.5" height="1.5"/><rect x="7.5" y="20.6" width="1.5" height="1.5"/><rect x="9.9" y="23" width="1.5" height="1.5"/><rect x="12.3" y="25.4" width="1.5" height="1.5"/><rect x="14.7" y="27.8" width="1.5" height="1.5"/></g></svg><div class="r" style="left:295px;top:1025px;width:1588px;height:1px;background:#dedede;"></div><div class="r" style="left:300px;top:993px;width:11px;height:11px;border:1px solid #333;background:#fff"></div><div class="t" style="left:341px;top:989px;width:41px;text-align:center;font-size:19px;line-height:19px;color:#e4431f;letter-spacing:0.2px">14</div><svg class="r" style="left:375px;top:989px" width="16" height="16" viewBox="0 0 16 16"><rect x="1.4" y="1.4" width="14" height="14" rx="2.4" fill="#555" opacity="0.45"/><rect x="0.45" y="0.45" width="13.3" height="13.3" rx="2.4" fill="url(#gA)" stroke="#0a35c6" stroke-width="0.9"/><path d="M7 2.3 L2.2 7.1 L3.6 8.5 L6 6.1 V12 H8 V6.1 L10.4 8.5 L11.8 7.1 Z" fill="#fff"/></svg><svg class="r" style="left:395px;top:989px" width="16" height="16" viewBox="0 0 16 16"><rect x="1.4" y="1.4" width="14" height="14" rx="2.4" fill="#555" opacity="0.45"/><rect x="0.45" y="0.45" width="13.3" height="13.3" rx="2.4" fill="url(#gA)" stroke="#0a35c6" stroke-width="0.9"/><path d="M7 12 L2.2 7.2 L3.6 5.8 L6 8.2 V1.5 H8 V8.2 L10.4 5.8 L11.8 7.2 Z" fill="#fff"/></svg><svg class="r" style="left:483px;top:973px" width="40" height="44" viewBox="0 0 40 44"><path d="M8.4 7.1 C12 5.8 17 5.6 20.4 6 C27 6.8 33 8 36.8 10.1 C33 12.5 27 14.5 23.5 15.5 C18 12 12 9.5 8.4 7.1 Z" fill="#e9e9f6" stroke="#a0a0b8" stroke-width="0.5"/><path d="M8.4 7.1 C12 9.5 18 12 23.5 15.5 L22 41.6 C17 39 12 34 8.4 30 Z" fill="url(#gIn)"/><path d="M23.5 15.5 C27 14.5 33 12.5 36.8 10.1 L34.5 36 C32 39 27 41 22 41.6 Z" fill="url(#gFr)"/><path d="M23.3 17.8 L35.4 15.8 L33.2 33.3 L23.3 36 Z" fill="#15151c"/><path d="M24.7 19.2 L34.1 17.5 L32.1 32.1 L24.7 34.3 Z" fill="#f0f0f8"/><path d="M2.4 21 H11.4 V16.1 L19.1 25 L11.4 33.9 V28.9 H2.4 Z" fill="url(#gAr)" stroke="#1b7a10" stroke-width="0.8" stroke-linejoin="round"/></svg><svg class="r" style="left:582px;top:989px" width="19" height="19" viewBox="0 0 19 19"><path d="M3.5 0.5 H14.5 V2.3 H17.5 V4.7 H14.5 V8.5 H17.5 V10.9 H14.5 V17.5 H3.5 V10.9 H0.5 V8.5 H3.5 V4.7 H0.5 V2.3 H3.5 Z" fill="url(#gL)" stroke="#9b7128" stroke-width="1"/><circle cx="10" cy="4.6" r="2.8" fill="#e0c040" opacity="0.8"/><circle cx="9.2" cy="11.5" r="4.1" fill="#17d10f"/></svg><div class="t" style="left:676px;top:993px;font-size:11px;line-height:11px;color:#3a3946;letter-spacing:0.77px;font-weight:normal;">IN: ANY</div><div class="t" style="left:802px;top:993px;font-size:11px;line-height:11px;color:#3a3946;letter-spacing:1.11px;font-weight:normal;">0.0.0.0/0</div><div class="t" style="left:1001px;top:993px;font-size:11px;line-height:11px;color:#3a3946;letter-spacing:1.11px;font-weight:normal;">0.0.0.0/0</div><div class="t" style="left:1253px;top:993px;font-size:11px;line-height:11px;color:#3a3946;letter-spacing:0.35px;font-weight:normal;">TCP</div><div class="t" style="left:1372px;top:987px;font-size:11px;line-height:11px;color:#3a3946;letter-spacing:0.79px;font-weight:normal;">Source Port: ANY</div><div class="t" style="left:1367px;top:1000px;font-size:11px;line-height:11px;color:#3a3946;letter-spacing:0.72px;font-weight:normal;">Destination Port: POP3</div><svg class="r" style="left:1726px;top:986px" width="14" height="23" viewBox="0 0 14 23" shape-rendering="crispEdges"><rect x="4" y="1" width="6" height="1" fill="#ffffff"/><rect x="3" y="2" width="8" height="1" fill="#ffffff"/><rect x="2" y="3" width="10" height="1" fill="#ffffff"/><rect x="1" y="4" width="12" height="6" fill="#ffffff"/><rect x="2" y="10" width="10" height="1" fill="#ffffff"/><rect x="3" y="11" width="8" height="1" fill="#ffffff"/><rect x="4" y="12" width="6" height="3" fill="#ffffff"/><rect x="4" y="15" width="6" height="7" fill="#9a9a9a"/><rect x="5" y="21" width="4" height="1" fill="#9a9a9a"/><rect x="3" y="6" width="7" height="1" fill="#8a8a8a"/><rect x="3" y="7" width="1" height="1" fill="#8a8a8a"/><rect x="9" y="7" width="1" height="1" fill="#8a8a8a"/><rect x="4" y="8" width="1" height="1" fill="#8a8a8a"/><rect x="8" y="8" width="1" height="1" fill="#8a8a8a"/><rect x="5" y="9" width="1" height="1" fill="#8a8a8a"/><rect x="7" y="9" width="1" height="1" fill="#8a8a8a"/><rect x="6" y="10" width="1" height="2" fill="#8a8a8a"/><rect x="6" y="15" width="2" height="6" fill="#6e6e6e"/><rect x="4" y="0" width="6" height="1" fill="#000"/><rect x="3" y="1" width="1" height="1" fill="#000"/><rect x="10" y="1" width="1" height="1" fill="#000"/><rect x="2" y="2" width="1" height="1" fill="#000"/><rect x="11" y="2" width="1" height="1" fill="#000"/><rect x="1" y="3" width="1" height="1" fill="#000"/><rect x="12" y="3" width="1" height="1" fill="#000"/><rect x="0" y="4" width="1" height="6" fill="#000"/><rect x="13" y="4" width="1" height="6" fill="#000"/><rect x="1" y="10" width="1" height="1" fill="#000"/><rect x="12" y="10" width="1" height="1" fill="#000"/><rect x="2" y="11" width="1" height="1" fill="#000"/><rect x="11" y="11" width="1" height="1" fill="#000"/><rect x="3" y="12" width="1" height="3" fill="#000"/><rect x="10" y="12" width="1" height="3" fill="#000"/><rect x="4" y="14" width="1" height="1" fill="#000"/><rect x="9" y="14" width="1" height="1" fill="#000"/><rect x="3" y="15" width="1" height="1" fill="#000"/><rect x="10" y="15" width="1" height="1" fill="#000"/><rect x="4" y="16" width="1" height="1" fill="#000"/><rect x="9" y="16" width="1" height="1" fill="#000"/><rect x="3" y="17" width="1" height="1" fill="#000"/><rect x="10" y="17" width="1" height="1" fill="#000"/><rect x="4" y="18" width="1" height="1" fill="#000"/><rect x="9" y="18" width="1" height="1" fill="#000"/><rect x="3" y="19" width="1" height="1" fill="#000"/><rect x="10" y="19" width="1" height="1" fill="#000"/><rect x="4" y="20" width="1" height="1" fill="#000"/><rect x="9" y="20" width="1" height="1" fill="#000"/><rect x="3" y="21" width="1" height="1" fill="#000"/><rect x="10" y="21" width="1" height="1" fill="#000"/><rect x="4" y="21" width="1" height="1" fill="#000"/><rect x="9" y="21" width="1" height="1" fill="#000"/><rect x="5" y="22" width="4" height="1" fill="#000"/></svg><svg class="r" style="left:1795px;top:980px" width="32" height="34" viewBox="0 0 32 34"><path d="M4.2 16.5 L9 8.4 L11.1 10.2 L14.2 7.1 L27.6 20.9 L18.2 30.5 Z" fill="url(#gE)" stroke="#1a3fd6" stroke-width="1.2" stroke-linejoin="round"/><path d="M11.6 10.4 L14.2 8.1 L26.4 20.8 L23.3 22.2 Z" fill="#eef4ff"/><path d="M11.1 10.2 L23 22.6" stroke="#1a3fd6" stroke-width="1.1"/><path d="M17.3 13.6 L25.7 5 L29.7 8.8 L20.9 17.6 Z" fill="url(#gP)" stroke="#e0901e" stroke-width="0.4"/><g fill="#f6b03a"><rect x="5.2" y="18.2" width="1.5" height="1.5"/><rect x="7.5" y="20.6" width="1.5" height="1.5"/><rect x="9.9" y="23" width="1.5" height="1.5"/><rect x="12.3" y="25.4" width="1.5" height="1.5"/><rect x="14.7" y="27.8" width="1.5" height="1.5"/></g></svg><div class="r" style="left:295px;top:1081px;width:1588px;height:1px;background:#dedede;"></div><div class="r" style="left:300px;top:1049px;width:11px;height:11px;border:1px solid #333;background:#fff"></div><div class="t" style="left:341px;top:1045px;width:41px;text-align:center;font-size:19px;line-height:19px;color:#e4431f;letter-spacing:0.2px">15</div><svg class="r" style="left:375px;top:1045px" width="16" height="16" viewBox="0 0 16 16"><rect x="1.4" y="1.4" width="14" height="14" rx="2.4" fill="#555" opacity="0.45"/><rect x="0.45" y="0.45" width="13.3" height="13.3" rx="2.4" fill="url(#gA)" stroke="#0a35c6" stroke-width="0.9"/><path d="M7 2.3 L2.2 7.1 L3.6 8.5 L6 6.1 V12 H8 V6.1 L10.4 8.5 L11.8 7.1 Z" fill="#fff"/></svg><svg class="r" style="left:395px;top:1045px" width="16" height="16" viewBox="0 0 16 16"><rect x="1.4" y="1.4" width="14" height="14" rx="2.4" fill="#555" opacity="0.45"/><rect x="0.45" y="0.45" width="13.3" height="13.3" rx="2.4" fill="url(#gA)" stroke="#0a35c6" stroke-width="0.9"/><path d="M7 12 L2.2 7.2 L3.6 5.8 L6 8.2 V1.5 H8 V8.2 L10.4 5.8 L11.8 7.2 Z" fill="#fff"/></svg><svg class="r" style="left:483px;top:1029px" width="40" height="44" viewBox="0 0 40 44"><path d="M8.4 7.1 C12 5.8 17 5.6 20.4 6 C27 6.8 33 8 36.8 10.1 C33 12.5 27 14.5 23.5 15.5 C18 12 12 9.5 8.4 7.1 Z" fill="#e9e9f6" stroke="#a0a0b8" stroke-width="0.5"/><path d="M8.4 7.1 C12 9.5 18 12 23.5 15.5 L22 41.6 C17 39 12 34 8.4 30 Z" fill="url(#gIn)"/><path d="M23.5 15.5 C27 14.5 33 12.5 36.8 10.1 L34.5 36 C32 39 27 41 22 41.6 Z" fill="url(#gFr)"/><path d="M23.3 17.8 L35.4 15.8 L33.2 33.3 L23.3 36 Z" fill="#15151c"/><path d="M24.7 19.2 L34.1 17.5 L32.1 32.1 L24.7 34.3 Z" fill="#f0f0f8"/><path d="M2.4 21 H11.4 V16.1 L19.1 25 L11.4 33.9 V28.9 H2.4 Z" fill="url(#gAr)" stroke="#1b7a10" stroke-width="0.8" stroke-linejoin="round"/></svg><svg class="r" style="left:582px;top:1045px" width="19" height="19" viewBox="0 0 19 19"><path d="M3.5 0.5 H14.5 V2.3 H17.5 V4.7 H14.5 V8.5 H17.5 V10.9 H14.5 V17.5 H3.5 V10.9 H0.5 V8.5 H3.5 V4.7 H0.5 V2.3 H3.5 Z" fill="url(#gL)" stroke="#9b7128" stroke-width="1"/><circle cx="10" cy="4.6" r="2.8" fill="#e0c040" opacity="0.8"/><circle cx="9.2" cy="11.5" r="4.1" fill="#17d10f"/></svg><div class="t" style="left:676px;top:1049px;font-size:11px;line-height:11px;color:#3a3946;letter-spacing:0.77px;font-weight:normal;">IN: ANY</div><div class="t" style="left:802px;top:1049px;font-size:11px;line-height:11px;color:#3a3946;letter-spacing:1.11px;font-weight:normal;">0.0.0.0/0</div><div class="t" style="left:1001px;top:1049px;font-size:11px;line-height:11px;color:#3a3946;letter-spacing:1.11px;font-weight:normal;">0.0.0.0/0</div><div class="t" style="left:1253px;top:1049px;font-size:11px;line-height:11px;color:#3a3946;letter-spacing:0.35px;font-weight:normal;">TCP</div><div class="t" style="left:1372px;top:1043px;font-size:11px;line-height:11px;color:#3a3946;letter-spacing:0.79px;font-weight:normal;">Source Port: ANY</div><div class="t" style="left:1367px;top:1056px;font-size:11px;line-height:11px;color:#3a3946;letter-spacing:0.84px;font-weight:normal;">Destination Port: IMAP</div><svg class="r" style="left:1726px;top:1042px" width="14" height="23" viewBox="0 0 14 23" shape-rendering="crispEdges"><rect x="4" y="1" width="6" height="1" fill="#ffffff"/><rect x="3" y="2" width="8" height="1" fill="#ffffff"/><rect x="2" y="3" width="10" height="1" fill="#ffffff"/><rect x="1" y="4" width="12" height="6" fill="#ffffff"/><rect x="2" y="10" width="10" height="1" fill="#ffffff"/><rect x="3" y="11" width="8" height="1" fill="#ffffff"/><rect x="4" y="12" width="6" height="3" fill="#ffffff"/><rect x="4" y="15" width="6" height="7" fill="#9a9a9a"/><rect x="5" y="21" width="4" height="1" fill="#9a9a9a"/><rect x="3" y="6" width="7" height="1" fill="#8a8a8a"/><rect x="3" y="7" width="1" height="1" fill="#8a8a8a"/><rect x="9" y="7" width="1" height="1" fill="#8a8a8a"/><rect x="4" y="8" width="1" height="1" fill="#8a8a8a"/><rect x="8" y="8" width="1" height="1" fill="#8a8a8a"/><rect x="5" y="9" width="1" height="1" fill="#8a8a8a"/><rect x="7" y="9" width="1" height="1" fill="#8a8a8a"/><rect x="6" y="10" width="1" height="2" fill="#8a8a8a"/><rect x="6" y="15" width="2" height="6" fill="#6e6e6e"/><rect x="4" y="0" width="6" height="1" fill="#000"/><rect x="3" y="1" width="1" height="1" fill="#000"/><rect x="10" y="1" width="1" height="1" fill="#000"/><rect x="2" y="2" width="1" height="1" fill="#000"/><rect x="11" y="2" width="1" height="1" fill="#000"/><rect x="1" y="3" width="1" height="1" fill="#000"/><rect x="12" y="3" width="1" height="1" fill="#000"/><rect x="0" y="4" width="1" height="6" fill="#000"/><rect x="13" y="4" width="1" height="6" fill="#000"/><rect x="1" y="10" width="1" height="1" fill="#000"/><rect x="12" y="10" width="1" height="1" fill="#000"/><rect x="2" y="11" width="1" height="1" fill="#000"/><rect x="11" y="11" width="1" height="1" fill="#000"/><rect x="3" y="12" width="1" height="3" fill="#000"/><rect x="10" y="12" width="1" height="3" fill="#000"/><rect x="4" y="14" width="1" height="1" fill="#000"/><rect x="9" y="14" width="1" height="1" fill="#000"/><rect x="3" y="15" width="1" height="1" fill="#000"/><rect x="10" y="15" width="1" height="1" fill="#000"/><rect x="4" y="16" width="1" height="1" fill="#000"/><rect x="9" y="16" width="1" height="1" fill="#000"/><rect x="3" y="17" width="1" height="1" fill="#000"/><rect x="10" y="17" width="1" height="1" fill="#000"/><rect x="4" y="18" width="1" height="1" fill="#000"/><rect x="9" y="18" width="1" height="1" fill="#000"/><rect x="3" y="19" width="1" height="1" fill="#000"/><rect x="10" y="19" width="1" height="1" fill="#000"/><rect x="4" y="20" width="1" height="1" fill="#000"/><rect x="9" y="20" width="1" height="1" fill="#000"/><rect x="3" y="21" width="1" height="1" fill="#000"/><rect x="10" y="21" width="1" height="1" fill="#000"/><rect x="4" y="21" width="1" height="1" fill="#000"/><rect x="9" y="21" width="1" height="1" fill="#000"/><rect x="5" y="22" width="4" height="1" fill="#000"/></svg><svg class="r" style="left:1795px;top:1036px" width="32" height="34" viewBox="0 0 32 34"><path d="M4.2 16.5 L9 8.4 L11.1 10.2 L14.2 7.1 L27.6 20.9 L18.2 30.5 Z" fill="url(#gE)" stroke="#1a3fd6" stroke-width="1.2" stroke-linejoin="round"/><path d="M11.6 10.4 L14.2 8.1 L26.4 20.8 L23.3 22.2 Z" fill="#eef4ff"/><path d="M11.1 10.2 L23 22.6" stroke="#1a3fd6" stroke-width="1.1"/><path d="M17.3 13.6 L25.7 5 L29.7 8.8 L20.9 17.6 Z" fill="url(#gP)" stroke="#e0901e" stroke-width="0.4"/><g fill="#f6b03a"><rect x="5.2" y="18.2" width="1.5" height="1.5"/><rect x="7.5" y="20.6" width="1.5" height="1.5"/><rect x="9.9" y="23" width="1.5" height="1.5"/><rect x="12.3" y="25.4" width="1.5" height="1.5"/><rect x="14.7" y="27.8" width="1.5" height="1.5"/></g></svg><div class="r" style="left:295px;top:1137px;width:1588px;height:1px;background:#dedede;"></div><div class="r" style="left:300px;top:1105px;width:11px;height:11px;border:1px solid #333;background:#fff"></div><div class="t" style="left:341px;top:1101px;width:41px;text-align:center;font-size:19px;line-height:19px;color:#e4431f;letter-spacing:0.2px">16</div><svg class="r" style="left:375px;top:1101px" width="16" height="16" viewBox="0 0 16 16"><rect x="1.4" y="1.4" width="14" height="14" rx="2.4" fill="#555" opacity="0.45"/><rect x="0.45" y="0.45" width="13.3" height="13.3" rx="2.4" fill="url(#gA)" stroke="#0a35c6" stroke-width="0.9"/><path d="M7 2.3 L2.2 7.1 L3.6 8.5 L6 6.1 V12 H8 V6.1 L10.4 8.5 L11.8 7.1 Z" fill="#fff"/></svg><svg class="r" style="left:395px;top:1101px" width="16" height="16" viewBox="0 0 16 16"><rect x="1.4" y="1.4" width="14" height="14" rx="2.4" fill="#555" opacity="0.45"/><rect x="0.45" y="0.45" width="13.3" height="13.3" rx="2.4" fill="url(#gA)" stroke="#0a35c6" stroke-width="0.9"/><path d="M7 12 L2.2 7.2 L3.6 5.8 L6 8.2 V1.5 H8 V8.2 L10.4 5.8 L11.8 7.2 Z" fill="#fff"/></svg><svg class="r" style="left:483px;top:1085px" width="40" height="44" viewBox="0 0 40 44"><path d="M8.4 7.1 C12 5.8 17 5.6 20.4 6 C27 6.8 33 8 36.8 10.1 C33 12.5 27 14.5 23.5 15.5 C18 12 12 9.5 8.4 7.1 Z" fill="#e9e9f6" stroke="#a0a0b8" stroke-width="0.5"/><path d="M8.4 7.1 C12 9.5 18 12 23.5 15.5 L22 41.6 C17 39 12 34 8.4 30 Z" fill="url(#gIn)"/><path d="M23.5 15.5 C27 14.5 33 12.5 36.8 10.1 L34.5 36 C32 39 27 41 22 41.6 Z" fill="url(#gFr)"/><path d="M23.3 17.8 L35.4 15.8 L33.2 33.3 L23.3 36 Z" fill="#15151c"/><path d="M24.7 19.2 L34.1 17.5 L32.1 32.1 L24.7 34.3 Z" fill="#f0f0f8"/><path d="M2.4 21 H11.4 V16.1 L19.1 25 L11.4 33.9 V28.9 H2.4 Z" fill="url(#gAr)" stroke="#1b7a10" stroke-width="0.8" stroke-linejoin="round"/></svg><svg class="r" style="left:582px;top:1101px" width="19" height="19" viewBox="0 0 19 19"><path d="M3.5 0.5 H14.5 V2.3 H17.5 V4.7 H14.5 V8.5 H17.5 V10.9 H14.5 V17.5 H3.5 V10.9 H0.5 V8.5 H3.5 V4.7 H0.5 V2.3 H3.5 Z" fill="url(#gL)" stroke="#9b7128" stroke-width="1"/><circle cx="10" cy="4.6" r="2.8" fill="#e0c040" opacity="0.8"/><circle cx="9.2" cy="11.5" r="4.1" fill="#17d10f"/></svg><div class="t" style="left:676px;top:1105px;font-size:11px;line-height:11px;color:#3a3946;letter-spacing:0.77px;font-weight:normal;">IN: ANY</div><div class="t" style="left:802px;top:1105px;font-size:11px;line-height:11px;color:#3a3946;letter-spacing:1.11px;font-weight:normal;">0.0.0.0/0</div><div class="t" style="left:1001px;top:1105px;font-size:11px;line-height:11px;color:#3a3946;letter-spacing:1.11px;font-weight:normal;">0.0.0.0/0</div><div class="t" style="left:1253px;top:1105px;font-size:11px;line-height:11px;color:#3a3946;letter-spacing:0.35px;font-weight:normal;">TCP</div><div class="t" style="left:1372px;top:1099px;font-size:11px;line-height:11px;color:#3a3946;letter-spacing:0.79px;font-weight:normal;">Source Port: ANY</div><div class="t" style="left:1367px;top:1112px;font-size:11px;line-height:11px;color:#3a3946;letter-spacing:0.72px;font-weight:normal;">Destination Port: HTTPS</div><svg class="r" style="left:1726px;top:1098px" width="14" height="23" viewBox="0 0 14 23" shape-rendering="crispEdges"><rect x="4" y="1" width="6" height="1" fill="#ffff90"/><rect x="3" y="2" width="8" height="1" fill="#ffff90"/><rect x="2" y="3" width="10" height="1" fill="#ffff90"/><rect x="1" y="4" width="12" height="6" fill="#ffff90"/><rect x="2" y="10" width="10" height="1" fill="#ffff90"/><rect x="3" y="11" width="8" height="1" fill="#ffff90"/><rect x="4" y="12" width="6" height="3" fill="#ffff90"/><rect x="4" y="15" width="6" height="7" fill="#ffa81a"/><rect x="5" y="21" width="4" height="1" fill="#ffa81a"/><rect x="3" y="6" width="7" height="1" fill="#ffe800"/><rect x="3" y="7" width="1" height="1" fill="#ffe800"/><rect x="9" y="7" width="1" height="1" fill="#ffe800"/><rect x="4" y="8" width="1" height="1" fill="#ffe800"/><rect x="8" y="8" width="1" height="1" fill="#ffe800"/><rect x="5" y="9" width="1" height="1" fill="#ffe800"/><rect x="7" y="9" width="1" height="1" fill="#ffe800"/><rect x="6" y="10" width="1" height="2" fill="#ffe800"/><rect x="4" y="0" width="6" height="1" fill="#000"/><rect x="3" y="1" width="1" height="1" fill="#000"/><rect x="10" y="1" width="1" height="1" fill="#000"/><rect x="2" y="2" width="1" height="1" fill="#000"/><rect x="11" y="2" width="1" height="1" fill="#000"/><rect x="1" y="3" width="1" height="1" fill="#000"/><rect x="12" y="3" width="1" height="1" fill="#000"/><rect x="0" y="4" width="1" height="6" fill="#000"/><rect x="13" y="4" width="1" height="6" fill="#000"/><rect x="1" y="10" width="1" height="1" fill="#000"/><rect x="12" y="10" width="1" height="1" fill="#000"/><rect x="2" y="11" width="1" height="1" fill="#000"/><rect x="11" y="11" width="1" height="1" fill="#000"/><rect x="3" y="12" width="1" height="3" fill="#000"/><rect x="10" y="12" width="1" height="3" fill="#000"/><rect x="4" y="14" width="1" height="1" fill="#000"/><rect x="9" y="14" width="1" height="1" fill="#000"/><rect x="3" y="15" width="1" height="1" fill="#000"/><rect x="10" y="15" width="1" height="1" fill="#000"/><rect x="4" y="16" width="1" height="1" fill="#000"/><rect x="9" y="16" width="1" height="1" fill="#000"/><rect x="3" y="17" width="1" height="1" fill="#000"/><rect x="10" y="17" width="1" height="1" fill="#000"/><rect x="4" y="18" width="1" height="1" fill="#000"/><rect x="9" y="18" width="1" height="1" fill="#000"/><rect x="3" y="19" width="1" height="1" fill="#000"/><rect x="10" y="19" width="1" height="1" fill="#000"/><rect x="4" y="20" width="1" height="1" fill="#000"/><rect x="9" y="20" width="1" height="1" fill="#000"/><rect x="3" y="21" width="1" height="1" fill="#000"/><rect x="10" y="21" width="1" height="1" fill="#000"/><rect x="4" y="21" width="1" height="1" fill="#000"/><rect x="9" y="21" width="1" height="1" fill="#000"/><rect x="5" y="22" width="4" height="1" fill="#000"/></svg><svg class="r" style="left:1795px;top:1092px" width="32" height="34" viewBox="0 0 32 34"><path d="M4.2 16.5 L9 8.4 L11.1 10.2 L14.2 7.1 L27.6 20.9 L18.2 30.5 Z" fill="url(#gE)" stroke="#1a3fd6" stroke-width="1.2" stroke-linejoin="round"/><path d="M11.6 10.4 L14.2 8.1 L26.4 20.8 L23.3 22.2 Z" fill="#eef4ff"/><path d="M11.1 10.2 L23 22.6" stroke="#1a3fd6" stroke-width="1.1"/><path d="M17.3 13.6 L25.7 5 L29.7 8.8 L20.9 17.6 Z" fill="url(#gP)" stroke="#e0901e" stroke-width="0.4"/><g fill="#f6b03a"><rect x="5.2" y="18.2" width="1.5" height="1.5"/><rect x="7.5" y="20.6" width="1.5" height="1.5"/><rect x="9.9" y="23" width="1.5" height="1.5"/><rect x="12.3" y="25.4" width="1.5" height="1.5"/><rect x="14.7" y="27.8" width="1.5" height="1.5"/></g></svg><div class="r" style="left:295px;top:1193px;width:1588px;height:1px;background:#dedede;"></div><div class="r" style="left:300px;top:1161px;width:11px;height:11px;border:1px solid #333;background:#fff"></div><div class="t" style="left:341px;top:1157px;width:41px;text-align:center;font-size:19px;line-height:19px;color:#e4431f;letter-spacing:0.2px">17</div><svg class="r" style="left:375px;top:1157px" width="16" height="16" viewBox="0 0 16 16"><rect x="1.4" y="1.4" width="14" height="14" rx="2.4" fill="#555" opacity="0.45"/><rect x="0.45" y="0.45" width="13.3" height="13.3" rx="2.4" fill="url(#gA)" stroke="#0a35c6" stroke-width="0.9"/><path d="M7 2.3 L2.2 7.1 L3.6 8.5 L6 6.1 V12 H8 V6.1 L10.4 8.5 L11.8 7.1 Z" fill="#fff"/></svg><svg class="r" style="left:395px;top:1157px" width="16" height="16" viewBox="0 0 16 16"><rect x="1.4" y="1.4" width="14" height="14" rx="2.4" fill="#555" opacity="0.45"/><rect x="0.45" y="0.45" width="13.3" height="13.3" rx="2.4" fill="url(#gA)" stroke="#0a35c6" stroke-width="0.9"/><path d="M7 12 L2.2 7.2 L3.6 5.8 L6 8.2 V1.5 H8 V8.2 L10.4 5.8 L11.8 7.2 Z" fill="#fff"/></svg><svg class="r" style="left:483px;top:1141px" width="40" height="44" viewBox="0 0 40 44"><path d="M8.4 7.1 C12 5.8 17 5.6 20.4 6 C27 6.8 33 8 36.8 10.1 C33 12.5 27 14.5 23.5 15.5 C18 12 12 9.5 8.4 7.1 Z" fill="#e9e9f6" stroke="#a0a0b8" stroke-width="0.5"/><path d="M8.4 7.1 C12 9.5 18 12 23.5 15.5 L22 41.6 C17 39 12 34 8.4 30 Z" fill="url(#gIn)"/><path d="M23.5 15.5 C27 14.5 33 12.5 36.8 10.1 L34.5 36 C32 39 27 41 22 41.6 Z" fill="url(#gFr)"/><path d="M23.3 17.8 L35.4 15.8 L33.2 33.3 L23.3 36 Z" fill="#15151c"/><path d="M24.7 19.2 L34.1 17.5 L32.1 32.1 L24.7 34.3 Z" fill="#f0f0f8"/><path d="M2.4 21 H11.4 V16.1 L19.1 25 L11.4 33.9 V28.9 H2.4 Z" fill="url(#gAr)" stroke="#1b7a10" stroke-width="0.8" stroke-linejoin="round"/></svg><svg class="r" style="left:582px;top:1157px" width="19" height="19" viewBox="0 0 19 19"><path d="M3.5 0.5 H14.5 V2.3 H17.5 V4.7 H14.5 V8.5 H17.5 V10.9 H14.5 V17.5 H3.5 V10.9 H0.5 V8.5 H3.5 V4.7 H0.5 V2.3 H3.5 Z" fill="url(#gL)" stroke="#9b7128" stroke-width="1"/><circle cx="10" cy="4.6" r="2.8" fill="#e0c040" opacity="0.8"/><circle cx="9.2" cy="11.5" r="4.1" fill="#17d10f"/></svg><div class="t" style="left:676px;top:1161px;font-size:11px;line-height:11px;color:#3a3946;letter-spacing:0.77px;font-weight:normal;">IN: ANY</div><div class="t" style="left:802px;top:1161px;font-size:11px;line-height:11px;color:#3a3946;letter-spacing:1.11px;font-weight:normal;">0.0.0.0/0</div><div class="t" style="left:1001px;top:1161px;font-size:11px;line-height:11px;color:#3a3946;letter-spacing:1.11px;font-weight:normal;">0.0.0.0/0</div><div class="t" style="left:1253px;top:1161px;font-size:11px;line-height:11px;color:#3a3946;letter-spacing:0.35px;font-weight:normal;">TCP</div><div class="t" style="left:1372px;top:1155px;font-size:11px;line-height:11px;color:#3a3946;letter-spacing:0.79px;font-weight:normal;">Source Port: ANY</div><div class="t" style="left:1367px;top:1168px;font-size:11px;line-height:11px;color:#3a3946;letter-spacing:0.79px;font-weight:normal;">Destination Port: IMAPS</div><svg class="r" style="left:1726px;top:1154px" width="14" height="23" viewBox="0 0 14 23" shape-rendering="crispEdges"><rect x="4" y="1" width="6" height="1" fill="#ffffff"/><rect x="3" y="2" width="8" height="1" fill="#ffffff"/><rect x="2" y="3" width="10" height="1" fill="#ffffff"/><rect x="1" y="4" width="12" height="6" fill="#ffffff"/><rect x="2" y="10" width="10" height="1" fill="#ffffff"/><rect x="3" y="11" width="8" height="1" fill="#ffffff"/><rect x="4" y="12" width="6" height="3" fill="#ffffff"/><rect x="4" y="15" width="6" height="7" fill="#9a9a9a"/><rect x="5" y="21" width="4" height="1" fill="#9a9a9a"/><rect x="3" y="6" width="7" height="1" fill="#8a8a8a"/><rect x="3" y="7" width="1" height="1" fill="#8a8a8a"/><rect x="9" y="7" width="1" height="1" fill="#8a8a8a"/><rect x="4" y="8" width="1" height="1" fill="#8a8a8a"/><rect x="8" y="8" width="1" height="1" fill="#8a8a8a"/><rect x="5" y="9" width="1" height="1" fill="#8a8a8a"/><rect x="7" y="9" width="1" height="1" fill="#8a8a8a"/><rect x="6" y="10" width="1" height="2" fill="#8a8a8a"/><rect x="6" y="15" width="2" height="6" fill="#6e6e6e"/><rect x="4" y="0" width="6" height="1" fill="#000"/><rect x="3" y="1" width="1" height="1" fill="#000"/><rect x="10" y="1" width="1" height="1" fill="#000"/><rect x="2" y="2" width="1" height="1" fill="#000"/><rect x="11" y="2" width="1" height="1" fill="#000"/><rect x="1" y="3" width="1" height="1" fill="#000"/><rect x="12" y="3" width="1" height="1" fill="#000"/><rect x="0" y="4" width="1" height="6" fill="#000"/><rect x="13" y="4" width="1" height="6" fill="#000"/><rect x="1" y="10" width="1" height="1" fill="#000"/><rect x="12" y="10" width="1" height="1" fill="#000"/><rect x="2" y="11" width="1" height="1" fill="#000"/><rect x="11" y="11" width="1" height="1" fill="#000"/><rect x="3" y="12" width="1" height="3" fill="#000"/><rect x="10" y="12" width="1" height="3" fill="#000"/><rect x="4" y="14" width="1" height="1" fill="#000"/><rect x="9" y="14" width="1" height="1" fill="#000"/><rect x="3" y="15" width="1" height="1" fill="#000"/><rect x="10" y="15" width="1" height="1" fill="#000"/><rect x="4" y="16" width="1" height="1" fill="#000"/><rect x="9" y="16" width="1" height="1" fill="#000"/><rect x="3" y="17" width="1" height="1" fill="#000"/><rect x="10" y="17" width="1" height="1" fill="#000"/><rect x="4" y="18" width="1" height="1" fill="#000"/><rect x="9" y="18" width="1" height="1" fill="#000"/><rect x="3" y="19" width="1" height="1" fill="#000"/><rect x="10" y="19" width="1" height="1" fill="#000"/><rect x="4" y="20" width="1" height="1" fill="#000"/><rect x="9" y="20" width="1" height="1" fill="#000"/><rect x="3" y="21" width="1" height="1" fill="#000"/><rect x="10" y="21" width="1" height="1" fill="#000"/><rect x="4" y="21" width="1" height="1" fill="#000"/><rect x="9" y="21" width="1" height="1" fill="#000"/><rect x="5" y="22" width="4" height="1" fill="#000"/></svg><svg class="r" style="left:1795px;top:1148px" width="32" height="34" viewBox="0 0 32 34"><path d="M4.2 16.5 L9 8.4 L11.1 10.2 L14.2 7.1 L27.6 20.9 L18.2 30.5 Z" fill="url(#gE)" stroke="#1a3fd6" stroke-width="1.2" stroke-linejoin="round"/><path d="M11.6 10.4 L14.2 8.1 L26.4 20.8 L23.3 22.2 Z" fill="#eef4ff"/><path d="M11.1 10.2 L23 22.6" stroke="#1a3fd6" stroke-width="1.1"/><path d="M17.3 13.6 L25.7 5 L29.7 8.8 L20.9 17.6 Z" fill="url(#gP)" stroke="#e0901e" stroke-width="0.4"/><g fill="#f6b03a"><rect x="5.2" y="18.2" width="1.5" height="1.5"/><rect x="7.5" y="20.6" width="1.5" height="1.5"/><rect x="9.9" y="23" width="1.5" height="1.5"/><rect x="12.3" y="25.4" width="1.5" height="1.5"/><rect x="14.7" y="27.8" width="1.5" height="1.5"/></g></svg><div class="r" style="left:295px;top:1249px;width:1588px;height:1px;background:#dedede;"></div><div class="r" style="left:300px;top:1217px;width:11px;height:11px;border:1px solid #333;background:#fff"></div><div class="t" style="left:341px;top:1213px;width:41px;text-align:center;font-size:19px;line-height:19px;color:#e4431f;letter-spacing:0.2px">18</div><svg class="r" style="left:375px;top:1213px" width="16" height="16" viewBox="0 0 16 16"><rect x="1.4" y="1.4" width="14" height="14" rx="2.4" fill="#555" opacity="0.45"/><rect x="0.45" y="0.45" width="13.3" height="13.3" rx="2.4" fill="url(#gA)" stroke="#0a35c6" stroke-width="0.9"/><path d="M7 2.3 L2.2 7.1 L3.6 8.5 L6 6.1 V12 H8 V6.1 L10.4 8.5 L11.8 7.1 Z" fill="#fff"/></svg><svg class="r" style="left:395px;top:1213px" width="16" height="16" viewBox="0 0 16 16"><rect x="1.4" y="1.4" width="14" height="14" rx="2.4" fill="#555" opacity="0.45"/><rect x="0.45" y="0.45" width="13.3" height="13.3" rx="2.4" fill="url(#gA)" stroke="#0a35c6" stroke-width="0.9"/><path d="M7 12 L2.2 7.2 L3.6 5.8 L6 8.2 V1.5 H8 V8.2 L10.4 5.8 L11.8 7.2 Z" fill="#fff"/></svg><svg class="r" style="left:483px;top:1197px" width="40" height="44" viewBox="0 0 40 44"><path d="M8.4 7.1 C12 5.8 17 5.6 20.4 6 C27 6.8 33 8 36.8 10.1 C33 12.5 27 14.5 23.5 15.5 C18 12 12 9.5 8.4 7.1 Z" fill="#e9e9f6" stroke="#a0a0b8" stroke-width="0.5"/><path d="M8.4 7.1 C12 9.5 18 12 23.5 15.5 L22 41.6 C17 39 12 34 8.4 30 Z" fill="url(#gIn)"/><path d="M23.5 15.5 C27 14.5 33 12.5 36.8 10.1 L34.5 36 C32 39 27 41 22 41.6 Z" fill="url(#gFr)"/><path d="M23.3 17.8 L35.4 15.8 L33.2 33.3 L23.3 36 Z" fill="#15151c"/><path d="M24.7 19.2 L34.1 17.5 L32.1 32.1 L24.7 34.3 Z" fill="#f0f0f8"/><path d="M2.4 21 H11.4 V16.1 L19.1 25 L11.4 33.9 V28.9 H2.4 Z" fill="url(#gAr)" stroke="#1b7a10" stroke-width="0.8" stroke-linejoin="round"/></svg><svg class="r" style="left:582px;top:1213px" width="19" height="19" viewBox="0 0 19 19"><path d="M3.5 0.5 H14.5 V2.3 H17.5 V4.7 H14.5 V8.5 H17.5 V10.9 H14.5 V17.5 H3.5 V10.9 H0.5 V8.5 H3.5 V4.7 H0.5 V2.3 H3.5 Z" fill="url(#gL)" stroke="#9b7128" stroke-width="1"/><circle cx="10" cy="4.6" r="2.8" fill="#e0c040" opacity="0.8"/><circle cx="9.2" cy="11.5" r="4.1" fill="#17d10f"/></svg><div class="t" style="left:676px;top:1217px;font-size:11px;line-height:11px;color:#3a3946;letter-spacing:0.77px;font-weight:normal;">IN: ANY</div><div class="t" style="left:802px;top:1217px;font-size:11px;line-height:11px;color:#3a3946;letter-spacing:1.11px;font-weight:normal;">0.0.0.0/0</div><div class="t" style="left:1001px;top:1217px;font-size:11px;line-height:11px;color:#3a3946;letter-spacing:1.11px;font-weight:normal;">0.0.0.0/0</div><div class="t" style="left:1253px;top:1217px;font-size:11px;line-height:11px;color:#3a3946;letter-spacing:0.35px;font-weight:normal;">TCP</div><div class="t" style="left:1372px;top:1211px;font-size:11px;line-height:11px;color:#3a3946;letter-spacing:0.79px;font-weight:normal;">Source Port: ANY</div><div class="t" style="left:1367px;top:1224px;font-size:11px;line-height:11px;color:#3a3946;letter-spacing:0.72px;font-weight:normal;">Destination Port: POP3S</div><svg class="r" style="left:1726px;top:1210px" width="14" height="23" viewBox="0 0 14 23" shape-rendering="crispEdges"><rect x="4" y="1" width="6" height="1" fill="#ffffff"/><rect x="3" y="2" width="8" height="1" fill="#ffffff"/><rect x="2" y="3" width="10" height="1" fill="#ffffff"/><rect x="1" y="4" width="12" height="6" fill="#ffffff"/><rect x="2" y="10" width="10" height="1" fill="#ffffff"/><rect x="3" y="11" width="8" height="1" fill="#ffffff"/><rect x="4" y="12" width="6" height="3" fill="#ffffff"/><rect x="4" y="15" width="6" height="7" fill="#9a9a9a"/><rect x="5" y="21" width="4" height="1" fill="#9a9a9a"/><rect x="3" y="6" width="7" height="1" fill="#8a8a8a"/><rect x="3" y="7" width="1" height="1" fill="#8a8a8a"/><rect x="9" y="7" width="1" height="1" fill="#8a8a8a"/><rect x="4" y="8" width="1" height="1" fill="#8a8a8a"/><rect x="8" y="8" width="1" height="1" fill="#8a8a8a"/><rect x="5" y="9" width="1" height="1" fill="#8a8a8a"/><rect x="7" y="9" width="1" height="1" fill="#8a8a8a"/><rect x="6" y="10" width="1" height="2" fill="#8a8a8a"/><rect x="6" y="15" width="2" height="6" fill="#6e6e6e"/><rect x="4" y="0" width="6" height="1" fill="#000"/><rect x="3" y="1" width="1" height="1" fill="#000"/><rect x="10" y="1" width="1" height="1" fill="#000"/><rect x="2" y="2" width="1" height="1" fill="#000"/><rect x="11" y="2" width="1" height="1" fill="#000"/><rect x="1" y="3" width="1" height="1" fill="#000"/><rect x="12" y="3" width="1" height="1" fill="#000"/><rect x="0" y="4" width="1" height="6" fill="#000"/><rect x="13" y="4" width="1" height="6" fill="#000"/><rect x="1" y="10" width="1" height="1" fill="#000"/><rect x="12" y="10" width="1" height="1" fill="#000"/><rect x="2" y="11" width="1" height="1" fill="#000"/><rect x="11" y="11" width="1" height="1" fill="#000"/><rect x="3" y="12" width="1" height="3" fill="#000"/><rect x="10" y="12" width="1" height="3" fill="#000"/><rect x="4" y="14" width="1" height="1" fill="#000"/><rect x="9" y="14" width="1" height="1" fill="#000"/><rect x="3" y="15" width="1" height="1" fill="#000"/><rect x="10" y="15" width="1" height="1" fill="#000"/><rect x="4" y="16" width="1" height="1" fill="#000"/><rect x="9" y="16" width="1" height="1" fill="#000"/><rect x="3" y="17" width="1" height="1" fill="#000"/><rect x="10" y="17" width="1" height="1" fill="#000"/><rect x="4" y="18" width="1" height="1" fill="#000"/><rect x="9" y="18" width="1" height="1" fill="#000"/><rect x="3" y="19" width="1" height="1" fill="#000"/><rect x="10" y="19" width="1" height="1" fill="#000"/><rect x="4" y="20" width="1" height="1" fill="#000"/><rect x="9" y="20" width="1" height="1" fill="#000"/><rect x="3" y="21" width="1" height="1" fill="#000"/><rect x="10" y="21" width="1" height="1" fill="#000"/><rect x="4" y="21" width="1" height="1" fill="#000"/><rect x="9" y="21" width="1" height="1" fill="#000"/><rect x="5" y="22" width="4" height="1" fill="#000"/></svg><svg class="r" style="left:1795px;top:1204px" width="32" height="34" viewBox="0 0 32 34"><path d="M4.2 16.5 L9 8.4 L11.1 10.2 L14.2 7.1 L27.6 20.9 L18.2 30.5 Z" fill="url(#gE)" stroke="#1a3fd6" stroke-width="1.2" stroke-linejoin="round"/><path d="M11.6 10.4 L14.2 8.1 L26.4 20.8 L23.3 22.2 Z" fill="#eef4ff"/><path d="M11.1 10.2 L23 22.6" stroke="#1a3fd6" stroke-width="1.1"/><path d="M17.3 13.6 L25.7 5 L29.7 8.8 L20.9 17.6 Z" fill="url(#gP)" stroke="#e0901e" stroke-width="0.4"/><g fill="#f6b03a"><rect x="5.2" y="18.2" width="1.5" height="1.5"/><rect x="7.5" y="20.6" width="1.5" height="1.5"/><rect x="9.9" y="23" width="1.5" height="1.5"/><rect x="12.3" y="25.4" width="1.5" height="1.5"/><rect x="14.7" y="27.8" width="1.5" height="1.5"/></g></svg><div class="r" style="left:295px;top:1305px;width:1588px;height:1px;background:#dedede;"></div><div class="r" style="left:300px;top:1273px;width:11px;height:11px;border:1px solid #333;background:#fff"></div><div class="t" style="left:341px;top:1269px;width:41px;text-align:center;font-size:19px;line-height:19px;color:#e4431f;letter-spacing:0.2px">19</div><svg class="r" style="left:375px;top:1269px" width="16" height="16" viewBox="0 0 16 16"><rect x="1.4" y="1.4" width="14" height="14" rx="2.4" fill="#555" opacity="0.45"/><rect x="0.45" y="0.45" width="13.3" height="13.3" rx="2.4" fill="url(#gA)" stroke="#0a35c6" stroke-width="0.9"/><path d="M7 2.3 L2.2 7.1 L3.6 8.5 L6 6.1 V12 H8 V6.1 L10.4 8.5 L11.8 7.1 Z" fill="#fff"/></svg><svg class="r" style="left:395px;top:1269px" width="16" height="16" viewBox="0 0 16 16"><rect x="1.4" y="1.4" width="14" height="14" rx="2.4" fill="#555" opacity="0.45"/><rect x="0.45" y="0.45" width="13.3" height="13.3" rx="2.4" fill="url(#gA)" stroke="#0a35c6" stroke-width="0.9"/><path d="M7 12 L2.2 7.2 L3.6 5.8 L6 8.2 V1.5 H8 V8.2 L10.4 5.8 L11.8 7.2 Z" fill="#fff"/></svg><svg class="r" style="left:483px;top:1253px" width="40" height="44" viewBox="0 0 40 44"><path d="M8.4 7.1 C12 5.8 17 5.6 20.4 6 C27 6.8 33 8 36.8 10.1 C33 12.5 27 14.5 23.5 15.5 C18 12 12 9.5 8.4 7.1 Z" fill="#e9e9f6" stroke="#a0a0b8" stroke-width="0.5"/><path d="M8.4 7.1 C12 9.5 18 12 23.5 15.5 L22 41.6 C17 39 12 34 8.4 30 Z" fill="url(#gIn)"/><path d="M23.5 15.5 C27 14.5 33 12.5 36.8 10.1 L34.5 36 C32 39 27 41 22 41.6 Z" fill="url(#gFr)"/><path d="M23.3 17.8 L35.4 15.8 L33.2 33.3 L23.3 36 Z" fill="#15151c"/><path d="M24.7 19.2 L34.1 17.5 L32.1 32.1 L24.7 34.3 Z" fill="#f0f0f8"/><path d="M2.4 21 H11.4 V16.1 L19.1 25 L11.4 33.9 V28.9 H2.4 Z" fill="url(#gAr)" stroke="#1b7a10" stroke-width="0.8" stroke-linejoin="round"/></svg><svg class="r" style="left:582px;top:1269px" width="19" height="19" viewBox="0 0 19 19"><path d="M3.5 0.5 H14.5 V2.3 H17.5 V4.7 H14.5 V8.5 H17.5 V10.9 H14.5 V17.5 H3.5 V10.9 H0.5 V8.5 H3.5 V4.7 H0.5 V2.3 H3.5 Z" fill="url(#gL)" stroke="#9b7128" stroke-width="1"/><circle cx="10" cy="4.6" r="2.8" fill="#e0c040" opacity="0.8"/><circle cx="9.2" cy="11.5" r="4.1" fill="#17d10f"/></svg><div class="t" style="left:676px;top:1273px;font-size:11px;line-height:11px;color:#3a3946;letter-spacing:0.77px;font-weight:normal;">IN: ANY</div><div class="t" style="left:802px;top:1273px;font-size:11px;line-height:11px;color:#3a3946;letter-spacing:1.11px;font-weight:normal;">0.0.0.0/0</div><div class="t" style="left:1001px;top:1273px;font-size:11px;line-height:11px;color:#3a3946;letter-spacing:1.11px;font-weight:normal;">0.0.0.0/0</div><div class="t" style="left:1253px;top:1273px;font-size:11px;line-height:11px;color:#3a3946;letter-spacing:0.35px;font-weight:normal;">TCP</div><div class="t" style="left:1372px;top:1267px;font-size:11px;line-height:11px;color:#3a3946;letter-spacing:0.79px;font-weight:normal;">Source Port: ANY</div><div class="t" style="left:1367px;top:1280px;font-size:11px;line-height:11px;color:#3a3946;letter-spacing:0.62px;font-weight:normal;">Destination Port: JABBER/XMPP</div><svg class="r" style="left:1726px;top:1266px" width="14" height="23" viewBox="0 0 14 23" shape-rendering="crispEdges"><rect x="4" y="1" width="6" height="1" fill="#ffffff"/><rect x="3" y="2" width="8" height="1" fill="#ffffff"/><rect x="2" y="3" width="10" height="1" fill="#ffffff"/><rect x="1" y="4" width="12" height="6" fill="#ffffff"/><rect x="2" y="10" width="10" height="1" fill="#ffffff"/><rect x="3" y="11" width="8" height="1" fill="#ffffff"/><rect x="4" y="12" width="6" height="3" fill="#ffffff"/><rect x="4" y="15" width="6" height="7" fill="#9a9a9a"/><rect x="5" y="21" width="4" height="1" fill="#9a9a9a"/><rect x="3" y="6" width="7" height="1" fill="#8a8a8a"/><rect x="3" y="7" width="1" height="1" fill="#8a8a8a"/><rect x="9" y="7" width="1" height="1" fill="#8a8a8a"/><rect x="4" y="8" width="1" height="1" fill="#8a8a8a"/><rect x="8" y="8" width="1" height="1" fill="#8a8a8a"/><rect x="5" y="9" width="1" height="1" fill="#8a8a8a"/><rect x="7" y="9" width="1" height="1" fill="#8a8a8a"/><rect x="6" y="10" width="1" height="2" fill="#8a8a8a"/><rect x="6" y="15" width="2" height="6" fill="#6e6e6e"/><rect x="4" y="0" width="6" height="1" fill="#000"/><rect x="3" y="1" width="1" height="1" fill="#000"/><rect x="10" y="1" width="1" height="1" fill="#000"/><rect x="2" y="2" width="1" height="1" fill="#000"/><rect x="11" y="2" width="1" height="1" fill="#000"/><rect x="1" y="3" width="1" height="1" fill="#000"/><rect x="12" y="3" width="1" height="1" fill="#000"/><rect x="0" y="4" width="1" height="6" fill="#000"/><rect x="13" y="4" width="1" height="6" fill="#000"/><rect x="1" y="10" width="1" height="1" fill="#000"/><rect x="12" y="10" width="1" height="1" fill="#000"/><rect x="2" y="11" width="1" height="1" fill="#000"/><rect x="11" y="11" width="1" height="1" fill="#000"/><rect x="3" y="12" width="1" height="3" fill="#000"/><rect x="10" y="12" width="1" height="3" fill="#000"/><rect x="4" y="14" width="1" height="1" fill="#000"/><rect x="9" y="14" width="1" height="1" fill="#000"/><rect x="3" y="15" width="1" height="1" fill="#000"/><rect x="10" y="15" width="1" height="1" fill="#000"/><rect x="4" y="16" width="1" height="1" fill="#000"/><rect x="9" y="16" width="1" height="1" fill="#000"/><rect x="3" y="17" width="1" height="1" fill="#000"/><rect x="10" y="17" width="1" height="1" fill="#000"/><rect x="4" y="18" width="1" height="1" fill="#000"/><rect x="9" y="18" width="1" height="1" fill="#000"/><rect x="3" y="19" width="1" height="1" fill="#000"/><rect x="10" y="19" width="1" height="1" fill="#000"/><rect x="4" y="20" width="1" height="1" fill="#000"/><rect x="9" y="20" width="1" height="1" fill="#000"/><rect x="3" y="21" width="1" height="1" fill="#000"/><rect x="10" y="21" width="1" height="1" fill="#000"/><rect x="4" y="21" width="1" height="1" fill="#000"/><rect x="9" y="21" width="1" height="1" fill="#000"/><rect x="5" y="22" width="4" height="1" fill="#000"/></svg><svg class="r" style="left:1795px;top:1260px" width="32" height="34" viewBox="0 0 32 34"><path d="M4.2 16.5 L9 8.4 L11.1 10.2 L14.2 7.1 L27.6 20.9 L18.2 30.5 Z" fill="url(#gE)" stroke="#1a3fd6" stroke-width="1.2" stroke-linejoin="round"/><path d="M11.6 10.4 L14.2 8.1 L26.4 20.8 L23.3 22.2 Z" fill="#eef4ff"/><path d="M11.1 10.2 L23 22.6" stroke="#1a3fd6" stroke-width="1.1"/><path d="M17.3 13.6 L25.7 5 L29.7 8.8 L20.9 17.6 Z" fill="url(#gP)" stroke="#e0901e" stroke-width="0.4"/><g fill="#f6b03a"><rect x="5.2" y="18.2" width="1.5" height="1.5"/><rect x="7.5" y="20.6" width="1.5" height="1.5"/><rect x="9.9" y="23" width="1.5" height="1.5"/><rect x="12.3" y="25.4" width="1.5" height="1.5"/><rect x="14.7" y="27.8" width="1.5" height="1.5"/></g></svg><div class="r" style="left:295px;top:1361px;width:1588px;height:1px;background:#dedede;"></div><div class="r" style="left:300px;top:1329px;width:11px;height:11px;border:1px solid #333;background:#fff"></div><div class="t" style="left:341px;top:1325px;width:41px;text-align:center;font-size:19px;line-height:19px;color:#e4431f;letter-spacing:0.2px">20</div><svg class="r" style="left:375px;top:1325px" width="16" height="16" viewBox="0 0 16 16"><rect x="1.4" y="1.4" width="14" height="14" rx="2.4" fill="#555" opacity="0.45"/><rect x="0.45" y="0.45" width="13.3" height="13.3" rx="2.4" fill="url(#gA)" stroke="#0a35c6" stroke-width="0.9"/><path d="M7 2.3 L2.2 7.1 L3.6 8.5 L6 6.1 V12 H8 V6.1 L10.4 8.5 L11.8 7.1 Z" fill="#fff"/></svg><svg class="r" style="left:395px;top:1325px" width="16" height="16" viewBox="0 0 16 16"><rect x="1.4" y="1.4" width="14" height="14" rx="2.4" fill="#555" opacity="0.45"/><rect x="0.45" y="0.45" width="13.3" height="13.3" rx="2.4" fill="url(#gA)" stroke="#0a35c6" stroke-width="0.9"/><path d="M7 12 L2.2 7.2 L3.6 5.8 L6 8.2 V1.5 H8 V8.2 L10.4 5.8 L11.8 7.2 Z" fill="#fff"/></svg><svg class="r" style="left:483px;top:1309px" width="40" height="44" viewBox="0 0 40 44"><path d="M8.4 7.1 C12 5.8 17 5.6 20.4 6 C27 6.8 33 8 36.8 10.1 C33 12.5 27 14.5 23.5 15.5 C18 12 12 9.5 8.4 7.1 Z" fill="#e9e9f6" stroke="#a0a0b8" stroke-width="0.5"/><path d="M8.4 7.1 C12 9.5 18 12 23.5 15.5 L22 41.6 C17 39 12 34 8.4 30 Z" fill="url(#gIn)"/><path d="M23.5 15.5 C27 14.5 33 12.5 36.8 10.1 L34.5 36 C32 39 27 41 22 41.6 Z" fill="url(#gFr)"/><path d="M23.3 17.8 L35.4 15.8 L33.2 33.3 L23.3 36 Z" fill="#15151c"/><path d="M24.7 19.2 L34.1 17.5 L32.1 32.1 L24.7 34.3 Z" fill="#f0f0f8"/><path d="M2.4 21 H11.4 V16.1 L19.1 25 L11.4 33.9 V28.9 H2.4 Z" fill="url(#gAr)" stroke="#1b7a10" stroke-width="0.8" stroke-linejoin="round"/></svg><svg class="r" style="left:582px;top:1325px" width="19" height="19" viewBox="0 0 19 19"><path d="M3.5 0.5 H14.5 V2.3 H17.5 V4.7 H14.5 V8.5 H17.5 V10.9 H14.5 V17.5 H3.5 V10.9 H0.5 V8.5 H3.5 V4.7 H0.5 V2.3 H3.5 Z" fill="url(#gL)" stroke="#9b7128" stroke-width="1"/><circle cx="10" cy="4.6" r="2.8" fill="#e0c040" opacity="0.8"/><circle cx="9.2" cy="11.5" r="4.1" fill="#17d10f"/></svg><div class="t" style="left:676px;top:1329px;font-size:11px;line-height:11px;color:#3a3946;letter-spacing:0.77px;font-weight:normal;">IN: ANY</div><div class="t" style="left:802px;top:1329px;font-size:11px;line-height:11px;color:#3a3946;letter-spacing:1.11px;font-weight:normal;">0.0.0.0/0</div><div class="t" style="left:1001px;top:1329px;font-size:11px;line-height:11px;color:#3a3946;letter-spacing:1.11px;font-weight:normal;">0.0.0.0/0</div><div class="t" style="left:1253px;top:1329px;font-size:11px;line-height:11px;color:#3a3946;letter-spacing:0.35px;font-weight:normal;">TCP</div><div class="t" style="left:1372px;top:1323px;font-size:11px;line-height:11px;color:#3a3946;letter-spacing:0.79px;font-weight:normal;">Source Port: ANY</div><div class="t" style="left:1367px;top:1336px;font-size:11px;line-height:11px;color:#3a3946;letter-spacing:0.84px;font-weight:normal;">Destination Port: OpenFire</div><svg class="r" style="left:1726px;top:1322px" width="14" height="23" viewBox="0 0 14 23" shape-rendering="crispEdges"><rect x="4" y="1" width="6" height="1" fill="#ffffff"/><rect x="3" y="2" width="8" height="1" fill="#ffffff"/><rect x="2" y="3" width="10" height="1" fill="#ffffff"/><rect x="1" y="4" width="12" height="6" fill="#ffffff"/><rect x="2" y="10" width="10" height="1" fill="#ffffff"/><rect x="3" y="11" width="8" height="1" fill="#ffffff"/><rect x="4" y="12" width="6" height="3" fill="#ffffff"/><rect x="4" y="15" width="6" height="7" fill="#9a9a9a"/><rect x="5" y="21" width="4" height="1" fill="#9a9a9a"/><rect x="3" y="6" width="7" height="1" fill="#8a8a8a"/><rect x="3" y="7" width="1" height="1" fill="#8a8a8a"/><rect x="9" y="7" width="1" height="1" fill="#8a8a8a"/><rect x="4" y="8" width="1" height="1" fill="#8a8a8a"/><rect x="8" y="8" width="1" height="1" fill="#8a8a8a"/><rect x="5" y="9" width="1" height="1" fill="#8a8a8a"/><rect x="7" y="9" width="1" height="1" fill="#8a8a8a"/><rect x="6" y="10" width="1" height="2" fill="#8a8a8a"/><rect x="6" y="15" width="2" height="6" fill="#6e6e6e"/><rect x="4" y="0" width="6" height="1" fill="#000"/><rect x="3" y="1" width="1" height="1" fill="#000"/><rect x="10" y="1" width="1" height="1" fill="#000"/><rect x="2" y="2" width="1" height="1" fill="#000"/><rect x="11" y="2" width="1" height="1" fill="#000"/><rect x="1" y="3" width="1" height="1" fill="#000"/><rect x="12" y="3" width="1" height="1" fill="#000"/><rect x="0" y="4" width="1" height="6" fill="#000"/><rect x="13" y="4" width="1" height="6" fill="#000"/><rect x="1" y="10" width="1" height="1" fill="#000"/><rect x="12" y="10" width="1" height="1" fill="#000"/><rect x="2" y="11" width="1" height="1" fill="#000"/><rect x="11" y="11" width="1" height="1" fill="#000"/><rect x="3" y="12" width="1" height="3" fill="#000"/><rect x="10" y="12" width="1" height="3" fill="#000"/><rect x="4" y="14" width="1" height="1" fill="#000"/><rect x="9" y="14" width="1" height="1" fill="#000"/><rect x="3" y="15" width="1" height="1" fill="#000"/><rect x="10" y="15" width="1" height="1" fill="#000"/><rect x="4" y="16" width="1" height="1" fill="#000"/><rect x="9" y="16" width="1" height="1" fill="#000"/><rect x="3" y="17" width="1" height="1" fill="#000"/><rect x="10" y="17" width="1" height="1" fill="#000"/><rect x="4" y="18" width="1" height="1" fill="#000"/><rect x="9" y="18" width="1" height="1" fill="#000"/><rect x="3" y="19" width="1" height="1" fill="#000"/><rect x="10" y="19" width="1" height="1" fill="#000"/><rect x="4" y="20" width="1" height="1" fill="#000"/><rect x="9" y="20" width="1" height="1" fill="#000"/><rect x="3" y="21" width="1" height="1" fill="#000"/><rect x="10" y="21" width="1" height="1" fill="#000"/><rect x="4" y="21" width="1" height="1" fill="#000"/><rect x="9" y="21" width="1" height="1" fill="#000"/><rect x="5" y="22" width="4" height="1" fill="#000"/></svg><svg class="r" style="left:1795px;top:1316px" width="32" height="34" viewBox="0 0 32 34"><path d="M4.2 16.5 L9 8.4 L11.1 10.2 L14.2 7.1 L27.6 20.9 L18.2 30.5 Z" fill="url(#gE)" stroke="#1a3fd6" stroke-width="1.2" stroke-linejoin="round"/><path d="M11.6 10.4 L14.2 8.1 L26.4 20.8 L23.3 22.2 Z" fill="#eef4ff"/><path d="M11.1 10.2 L23 22.6" stroke="#1a3fd6" stroke-width="1.1"/><path d="M17.3 13.6 L25.7 5 L29.7 8.8 L20.9 17.6 Z" fill="url(#gP)" stroke="#e0901e" stroke-width="0.4"/><g fill="#f6b03a"><rect x="5.2" y="18.2" width="1.5" height="1.5"/><rect x="7.5" y="20.6" width="1.5" height="1.5"/><rect x="9.9" y="23" width="1.5" height="1.5"/><rect x="12.3" y="25.4" width="1.5" height="1.5"/><rect x="14.7" y="27.8" width="1.5" height="1.5"/></g></svg><div class="r" style="left:295px;top:1417px;width:1588px;height:1px;background:#dedede;"></div><div class="r" style="left:300px;top:1385px;width:11px;height:11px;border:1px solid #333;background:#fff"></div><div class="t" style="left:341px;top:1381px;width:41px;text-align:center;font-size:19px;line-height:19px;color:#e4431f;letter-spacing:0.2px">21</div><svg class="r" style="left:375px;top:1381px" width="16" height="16" viewBox="0 0 16 16"><rect x="1.4" y="1.4" width="14" height="14" rx="2.4" fill="#555" opacity="0.45"/><rect x="0.45" y="0.45" width="13.3" height="13.3" rx="2.4" fill="url(#gA)" stroke="#0a35c6" stroke-width="0.9"/><path d="M7 2.3 L2.2 7.1 L3.6 8.5 L6 6.1 V12 H8 V6.1 L10.4 8.5 L11.8 7.1 Z" fill="#fff"/></svg><svg class="r" style="left:395px;top:1381px" width="16" height="16" viewBox="0 0 16 16"><rect x="1.4" y="1.4" width="14" height="14" rx="2.4" fill="#555" opacity="0.45"/><rect x="0.45" y="0.45" width="13.3" height="13.3" rx="2.4" fill="url(#gA)" stroke="#0a35c6" stroke-width="0.9"/><path d="M7 12 L2.2 7.2 L3.6 5.8 L6 8.2 V1.5 H8 V8.2 L10.4 5.8 L11.8 7.2 Z" fill="#fff"/></svg><svg class="r" style="left:483px;top:1365px" width="40" height="44" viewBox="0 0 40 44"><path d="M8.4 7.1 C12 5.8 17 5.6 20.4 6 C27 6.8 33 8 36.8 10.1 C33 12.5 27 14.5 23.5 15.5 C18 12 12 9.5 8.4 7.1 Z" fill="#e9e9f6" stroke="#a0a0b8" stroke-width="0.5"/><path d="M8.4 7.1 C12 9.5 18 12 23.5 15.5 L22 41.6 C17 39 12 34 8.4 30 Z" fill="url(#gIn)"/><path d="M23.5 15.5 C27 14.5 33 12.5 36.8 10.1 L34.5 36 C32 39 27 41 22 41.6 Z" fill="url(#gFr)"/><path d="M23.3 17.8 L35.4 15.8 L33.2 33.3 L23.3 36 Z" fill="#15151c"/><path d="M24.7 19.2 L34.1 17.5 L32.1 32.1 L24.7 34.3 Z" fill="#f0f0f8"/><path d="M2.4 21 H11.4 V16.1 L19.1 25 L11.4 33.9 V28.9 H2.4 Z" fill="url(#gAr)" stroke="#1b7a10" stroke-width="0.8" stroke-linejoin="round"/></svg><svg class="r" style="left:582px;top:1381px" width="19" height="19" viewBox="0 0 19 19"><path d="M3.5 0.5 H14.5 V2.3 H17.5 V4.7 H14.5 V8.5 H17.5 V10.9 H14.5 V17.5 H3.5 V10.9 H0.5 V8.5 H3.5 V4.7 H0.5 V2.3 H3.5 Z" fill="url(#gL)" stroke="#9b7128" stroke-width="1"/><circle cx="10" cy="4.6" r="2.8" fill="#e0c040" opacity="0.8"/><circle cx="9.2" cy="11.5" r="4.1" fill="#17d10f"/></svg><div class="t" style="left:676px;top:1385px;font-size:11px;line-height:11px;color:#3a3946;letter-spacing:0.77px;font-weight:normal;">IN: ANY</div><div class="t" style="left:802px;top:1385px;font-size:11px;line-height:11px;color:#3a3946;letter-spacing:1.11px;font-weight:normal;">0.0.0.0/0</div><div class="t" style="left:1001px;top:1385px;font-size:11px;line-height:11px;color:#3a3946;letter-spacing:1.11px;font-weight:normal;">0.0.0.0/0</div><div class="t" style="left:1253px;top:1385px;font-size:11px;line-height:11px;color:#3a3946;letter-spacing:0.43px;font-weight:normal;">STATE</div><div class="t" style="left:1372px;top:1385px;font-size:11px;line-height:11px;color:#3a3946;letter-spacing:0.7px;font-weight:normal;">Established,Related</div><svg class="r" style="left:1726px;top:1378px" width="14" height="23" viewBox="0 0 14 23" shape-rendering="crispEdges"><rect x="4" y="1" width="6" height="1" fill="#ffff90"/><rect x="3" y="2" width="8" height="1" fill="#ffff90"/><rect x="2" y="3" width="10" height="1" fill="#ffff90"/><rect x="1" y="4" width="12" height="6" fill="#ffff90"/><rect x="2" y="10" width="10" height="1" fill="#ffff90"/><rect x="3" y="11" width="8" height="1" fill="#ffff90"/><rect x="4" y="12" width="6" height="3" fill="#ffff90"/><rect x="4" y="15" width="6" height="7" fill="#ffa81a"/><rect x="5" y="21" width="4" height="1" fill="#ffa81a"/><rect x="3" y="6" width="7" height="1" fill="#ffe800"/><rect x="3" y="7" width="1" height="1" fill="#ffe800"/><rect x="9" y="7" width="1" height="1" fill="#ffe800"/><rect x="4" y="8" width="1" height="1" fill="#ffe800"/><rect x="8" y="8" width="1" height="1" fill="#ffe800"/><rect x="5" y="9" width="1" height="1" fill="#ffe800"/><rect x="7" y="9" width="1" height="1" fill="#ffe800"/><rect x="6" y="10" width="1" height="2" fill="#ffe800"/><rect x="4" y="0" width="6" height="1" fill="#000"/><rect x="3" y="1" width="1" height="1" fill="#000"/><rect x="10" y="1" width="1" height="1" fill="#000"/><rect x="2" y="2" width="1" height="1" fill="#000"/><rect x="11" y="2" width="1" height="1" fill="#000"/><rect x="1" y="3" width="1" height="1" fill="#000"/><rect x="12" y="3" width="1" height="1" fill="#000"/><rect x="0" y="4" width="1" height="6" fill="#000"/><rect x="13" y="4" width="1" height="6" fill="#000"/><rect x="1" y="10" width="1" height="1" fill="#000"/><rect x="12" y="10" width="1" height="1" fill="#000"/><rect x="2" y="11" width="1" height="1" fill="#000"/><rect x="11" y="11" width="1" height="1" fill="#000"/><rect x="3" y="12" width="1" height="3" fill="#000"/><rect x="10" y="12" width="1" height="3" fill="#000"/><rect x="4" y="14" width="1" height="1" fill="#000"/><rect x="9" y="14" width="1" height="1" fill="#000"/><rect x="3" y="15" width="1" height="1" fill="#000"/><rect x="10" y="15" width="1" height="1" fill="#000"/><rect x="4" y="16" width="1" height="1" fill="#000"/><rect x="9" y="16" width="1" height="1" fill="#000"/><rect x="3" y="17" width="1" height="1" fill="#000"/><rect x="10" y="17" width="1" height="1" fill="#000"/><rect x="4" y="18" width="1" height="1" fill="#000"/><rect x="9" y="18" width="1" height="1" fill="#000"/><rect x="3" y="19" width="1" height="1" fill="#000"/><rect x="10" y="19" width="1" height="1" fill="#000"/><rect x="4" y="20" width="1" height="1" fill="#000"/><rect x="9" y="20" width="1" height="1" fill="#000"/><rect x="3" y="21" width="1" height="1" fill="#000"/><rect x="10" y="21" width="1" height="1" fill="#000"/><rect x="4" y="21" width="1" height="1" fill="#000"/><rect x="9" y="21" width="1" height="1" fill="#000"/><rect x="5" y="22" width="4" height="1" fill="#000"/></svg><svg class="r" style="left:1795px;top:1372px" width="32" height="34" viewBox="0 0 32 34"><path d="M4.2 16.5 L9 8.4 L11.1 10.2 L14.2 7.1 L27.6 20.9 L18.2 30.5 Z" fill="url(#gE)" stroke="#1a3fd6" stroke-width="1.2" stroke-linejoin="round"/><path d="M11.6 10.4 L14.2 8.1 L26.4 20.8 L23.3 22.2 Z" fill="#eef4ff"/><path d="M11.1 10.2 L23 22.6" stroke="#1a3fd6" stroke-width="1.1"/><path d="M17.3 13.6 L25.7 5 L29.7 8.8 L20.9 17.6 Z" fill="url(#gP)" stroke="#e0901e" stroke-width="0.4"/><g fill="#f6b03a"><rect x="5.2" y="18.2" width="1.5" height="1.5"/><rect x="7.5" y="20.6" width="1.5" height="1.5"/><rect x="9.9" y="23" width="1.5" height="1.5"/><rect x="12.3" y="25.4" width="1.5" height="1.5"/><rect x="14.7" y="27.8" width="1.5" height="1.5"/></g></svg><div class="r" style="left:295px;top:1473px;width:1588px;height:1px;background:#dedede;"></div><div class="r" style="left:300px;top:1441px;width:11px;height:11px;border:1px solid #333;background:#fff"></div><div class="t" style="left:341px;top:1437px;width:41px;text-align:center;font-size:19px;line-height:19px;color:#e4431f;letter-spacing:0.2px">22</div><svg class="r" style="left:375px;top:1437px" width="16" height="16" viewBox="0 0 16 16"><rect x="1.4" y="1.4" width="14" height="14" rx="2.4" fill="#555" opacity="0.45"/><rect x="0.45" y="0.45" width="13.3" height="13.3" rx="2.4" fill="url(#gA)" stroke="#0a35c6" stroke-width="0.9"/><path d="M7 2.3 L2.2 7.1 L3.6 8.5 L6 6.1 V12 H8 V6.1 L10.4 8.5 L11.8 7.1 Z" fill="#fff"/></svg><svg class="r" style="left:395px;top:1437px" width="16" height="16" viewBox="0 0 16 16"><rect x="1.4" y="1.4" width="14" height="14" rx="2.4" fill="#555" opacity="0.45"/><rect x="0.45" y="0.45" width="13.3" height="13.3" rx="2.4" fill="url(#gA)" stroke="#0a35c6" stroke-width="0.9"/><path d="M7 12 L2.2 7.2 L3.6 5.8 L6 8.2 V1.5 H8 V8.2 L10.4 5.8 L11.8 7.2 Z" fill="#fff"/></svg><svg class="r" style="left:483px;top:1421px" width="40" height="44" viewBox="0 0 40 44"><path d="M8.4 7.1 C12 5.8 17 5.6 20.4 6 C27 6.8 33 8 36.8 10.1 C33 12.5 27 14.5 23.5 15.5 C18 12 12 9.5 8.4 7.1 Z" fill="#e9e9f6" stroke="#a0a0b8" stroke-width="0.5"/><path d="M8.4 7.1 C12 9.5 18 12 23.5 15.5 L22 41.6 C17 39 12 34 8.4 30 Z" fill="url(#gIn)"/><path d="M23.5 15.5 C27 14.5 33 12.5 36.8 10.1 L34.5 36 C32 39 27 41 22 41.6 Z" fill="url(#gFr)"/><path d="M23.3 17.8 L35.4 15.8 L33.2 33.3 L23.3 36 Z" fill="#15151c"/><path d="M24.7 19.2 L34.1 17.5 L32.1 32.1 L24.7 34.3 Z" fill="#f0f0f8"/><path d="M2.4 21 H11.4 V16.1 L19.1 25 L11.4 33.9 V28.9 H2.4 Z" fill="url(#gAr)" stroke="#1b7a10" stroke-width="0.8" stroke-linejoin="round"/></svg><svg class="r" style="left:582px;top:1437px" width="19" height="19" viewBox="0 0 19 19"><path d="M3.5 0.5 H14.5 V2.3 H17.5 V4.7 H14.5 V8.5 H17.5 V10.9 H14.5 V17.5 H3.5 V10.9 H0.5 V8.5 H3.5 V4.7 H0.5 V2.3 H3.5 Z" fill="url(#gL)" stroke="#9b7128" stroke-width="1"/><circle cx="9.3" cy="5.6" r="3.8" fill="#e8351a"/><circle cx="9.5" cy="12.3" r="2.5" fill="#e6d066" opacity="0.8"/></svg><div class="t" style="left:676px;top:1441px;font-size:11px;line-height:11px;color:#3a3946;letter-spacing:0.77px;font-weight:normal;">IN: ANY</div><div class="t" style="left:802px;top:1441px;font-size:11px;line-height:11px;color:#3a3946;letter-spacing:1.11px;font-weight:normal;">0.0.0.0/0</div><div class="t" style="left:1001px;top:1441px;font-size:11px;line-height:11px;color:#3a3946;letter-spacing:1.11px;font-weight:normal;">0.0.0.0/0</div><div class="t" style="left:1253px;top:1441px;font-size:11px;line-height:11px;color:#3a3946;letter-spacing:-0.25px;font-weight:normal;">ALL</div><svg class="r" style="left:1726px;top:1434px" width="14" height="23" viewBox="0 0 14 23" shape-rendering="crispEdges"><rect x="4" y="1" width="6" height="1" fill="#ffff90"/><rect x="3" y="2" width="8" height="1" fill="#ffff90"/><rect x="2" y="3" width="10" height="1" fill="#ffff90"/><rect x="1" y="4" width="12" height="6" fill="#ffff90"/><rect x="2" y="10" width="10" height="1" fill="#ffff90"/><rect x="3" y="11" width="8" height="1" fill="#ffff90"/><rect x="4" y="12" width="6" height="3" fill="#ffff90"/><rect x="4" y="15" width="6" height="7" fill="#ffa81a"/><rect x="5" y="21" width="4" height="1" fill="#ffa81a"/><rect x="3" y="6" width="7" height="1" fill="#ffe800"/><rect x="3" y="7" width="1" height="1" fill="#ffe800"/><rect x="9" y="7" width="1" height="1" fill="#ffe800"/><rect x="4" y="8" width="1" height="1" fill="#ffe800"/><rect x="8" y="8" width="1" height="1" fill="#ffe800"/><rect x="5" y="9" width="1" height="1" fill="#ffe800"/><rect x="7" y="9" width="1" height="1" fill="#ffe800"/><rect x="6" y="10" width="1" height="2" fill="#ffe800"/><rect x="4" y="0" width="6" height="1" fill="#000"/><rect x="3" y="1" width="1" height="1" fill="#000"/><rect x="10" y="1" width="1" height="1" fill="#000"/><rect x="2" y="2" width="1" height="1" fill="#000"/><rect x="11" y="2" width="1" height="1" fill="#000"/><rect x="1" y="3" width="1" height="1" fill="#000"/><rect x="12" y="3" width="1" height="1" fill="#000"/><rect x="0" y="4" width="1" height="6" fill="#000"/><rect x="13" y="4" width="1" height="6" fill="#000"/><rect x="1" y="10" width="1" height="1" fill="#000"/><rect x="12" y="10" width="1" height="1" fill="#000"/><rect x="2" y="11" width="1" height="1" fill="#000"/><rect x="11" y="11" width="1" height="1" fill="#000"/><rect x="3" y="12" width="1" height="3" fill="#000"/><rect x="10" y="12" width="1" height="3" fill="#000"/><rect x="4" y="14" width="1" height="1" fill="#000"/><rect x="9" y="14" width="1" height="1" fill="#000"/><rect x="3" y="15" width="1" height="1" fill="#000"/><rect x="10" y="15" width="1" height="1" fill="#000"/><rect x="4" y="16" width="1" height="1" fill="#000"/><rect x="9" y="16" width="1" height="1" fill="#000"/><rect x="3" y="17" width="1" height="1" fill="#000"/><rect x="10" y="17" width="1" height="1" fill="#000"/><rect x="4" y="18" width="1" height="1" fill="#000"/><rect x="9" y="18" width="1" height="1" fill="#000"/><rect x="3" y="19" width="1" height="1" fill="#000"/><rect x="10" y="19" width="1" height="1" fill="#000"/><rect x="4" y="20" width="1" height="1" fill="#000"/><rect x="9" y="20" width="1" height="1" fill="#000"/><rect x="3" y="21" width="1" height="1" fill="#000"/><rect x="10" y="21" width="1" height="1" fill="#000"/><rect x="4" y="21" width="1" height="1" fill="#000"/><rect x="9" y="21" width="1" height="1" fill="#000"/><rect x="5" y="22" width="4" height="1" fill="#000"/></svg><svg class="r" style="left:1795px;top:1428px" width="32" height="34" viewBox="0 0 32 34"><path d="M4.2 16.5 L9 8.4 L11.1 10.2 L14.2 7.1 L27.6 20.9 L18.2 30.5 Z" fill="url(#gE)" stroke="#1a3fd6" stroke-width="1.2" stroke-linejoin="round"/><path d="M11.6 10.4 L14.2 8.1 L26.4 20.8 L23.3 22.2 Z" fill="#eef4ff"/><path d="M11.1 10.2 L23 22.6" stroke="#1a3fd6" stroke-width="1.1"/><path d="M17.3 13.6 L25.7 5 L29.7 8.8 L20.9 17.6 Z" fill="url(#gP)" stroke="#e0901e" stroke-width="0.4"/><g fill="#f6b03a"><rect x="5.2" y="18.2" width="1.5" height="1.5"/><rect x="7.5" y="20.6" width="1.5" height="1.5"/><rect x="9.9" y="23" width="1.5" height="1.5"/><rect x="12.3" y="25.4" width="1.5" height="1.5"/><rect x="14.7" y="27.8" width="1.5" height="1.5"/></g></svg><div class="r" style="left:295px;top:1529px;width:1588px;height:1px;background:#dedede;"></div><div class="r" style="left:300px;top:1497px;width:11px;height:11px;border:1px solid #333;background:#fff"></div><div class="t" style="left:341px;top:1493px;width:41px;text-align:center;font-size:19px;line-height:19px;color:#e4431f;letter-spacing:0.2px">23</div><svg class="r" style="left:375px;top:1493px" width="16" height="16" viewBox="0 0 16 16"><rect x="1.4" y="1.4" width="14" height="14" rx="2.4" fill="#555" opacity="0.45"/><rect x="0.45" y="0.45" width="13.3" height="13.3" rx="2.4" fill="url(#gA)" stroke="#0a35c6" stroke-width="0.9"/><path d="M7 2.3 L2.2 7.1 L3.6 8.5 L6 6.1 V12 H8 V6.1 L10.4 8.5 L11.8 7.1 Z" fill="#fff"/></svg><svg class="r" style="left:395px;top:1493px" width="16" height="16" viewBox="0 0 16 16"><rect x="1.4" y="1.4" width="14" height="14" rx="2.4" fill="#555" opacity="0.45"/><rect x="0.45" y="0.45" width="13.3" height="13.3" rx="2.4" fill="url(#gA)" stroke="#0a35c6" stroke-width="0.9"/><path d="M7 12 L2.2 7.2 L3.6 5.8 L6 8.2 V1.5 H8 V8.2 L10.4 5.8 L11.8 7.2 Z" fill="#fff"/></svg><svg class="r" style="left:483px;top:1477px" width="40" height="44" viewBox="0 0 40 44"><path d="M8.4 7.1 C12 5.8 17 5.6 20.4 6 C27 6.8 33 8 36.8 10.1 C33 12.5 27 14.5 23.5 15.5 C18 12 12 9.5 8.4 7.1 Z" fill="#e9e9f6" stroke="#a0a0b8" stroke-width="0.5"/><path d="M8.4 7.1 C12 9.5 18 12 23.5 15.5 L22 41.6 C17 39 12 34 8.4 30 Z" fill="url(#gIn)"/><path d="M23.5 15.5 C27 14.5 33 12.5 36.8 10.1 L34.5 36 C32 39 27 41 22 41.6 Z" fill="url(#gFr)"/><path d="M23.3 17.8 L35.4 15.8 L33.2 33.3 L23.3 36 Z" fill="#15151c"/><path d="M24.7 19.2 L34.1 17.5 L32.1 32.1 L24.7 34.3 Z" fill="#f0f0f8"/><path d="M2 25 L10.5 17.5 V22 H22 V28 H10.5 V32.5 Z" fill="#c03cbf" stroke="#8d1f8a" stroke-width="0.6"/><rect x="19" y="21.5" width="21" height="7" fill="#e9a9e8" opacity="0.7"/></svg><svg class="r" style="left:582px;top:1493px" width="19" height="19" viewBox="0 0 19 19"><path d="M3.5 0.5 H14.5 V2.3 H17.5 V4.7 H14.5 V8.5 H17.5 V10.9 H14.5 V17.5 H3.5 V10.9 H0.5 V8.5 H3.5 V4.7 H0.5 V2.3 H3.5 Z" fill="url(#gL)" stroke="#9b7128" stroke-width="1"/><circle cx="9.3" cy="5.6" r="3.8" fill="#e8351a"/><circle cx="9.5" cy="12.3" r="2.5" fill="#e6d066" opacity="0.8"/></svg><div class="t" style="left:676px;top:1490px;font-size:11px;line-height:11px;color:#3a3946;letter-spacing:0.77px;font-weight:normal;">IN: ANY</div><div class="t" style="left:671px;top:1503px;font-size:11px;line-height:11px;color:#3a3946;letter-spacing:0.57px;font-weight:normal;">OUT: ANY</div><div class="t" style="left:802px;top:1497px;font-size:11px;line-height:11px;color:#3a3946;letter-spacing:1.11px;font-weight:normal;">0.0.0.0/0</div><div class="t" style="left:1001px;top:1497px;font-size:11px;line-height:11px;color:#3a3946;letter-spacing:1.11px;font-weight:normal;">0.0.0.0/0</div><div class="t" style="left:1253px;top:1497px;font-size:11px;line-height:11px;color:#3a3946;letter-spacing:-0.25px;font-weight:normal;">ALL</div><svg class="r" style="left:1726px;top:1490px" width="14" height="23" viewBox="0 0 14 23" shape-rendering="crispEdges"><rect x="4" y="1" width="6" height="1" fill="#ffff90"/><rect x="3" y="2" width="8" height="1" fill="#ffff90"/><rect x="2" y="3" width="10" height="1" fill="#ffff90"/><rect x="1" y="4" width="12" height="6" fill="#ffff90"/><rect x="2" y="10" width="10" height="1" fill="#ffff90"/><rect x="3" y="11" width="8" height="1" fill="#ffff90"/><rect x="4" y="12" width="6" height="3" fill="#ffff90"/><rect x="4" y="15" width="6" height="7" fill="#ffa81a"/><rect x="5" y="21" width="4" height="1" fill="#ffa81a"/><rect x="3" y="6" width="7" height="1" fill="#ffe800"/><rect x="3" y="7" width="1" height="1" fill="#ffe800"/><rect x="9" y="7" width="1" height="1" fill="#ffe800"/><rect x="4" y="8" width="1" height="1" fill="#ffe800"/><rect x="8" y="8" width="1" height="1" fill="#ffe800"/><rect x="5" y="9" width="1" height="1" fill="#ffe800"/><rect x="7" y="9" width="1" height="1" fill="#ffe800"/><rect x="6" y="10" width="1" height="2" fill="#ffe800"/><rect x="4" y="0" width="6" height="1" fill="#000"/><rect x="3" y="1" width="1" height="1" fill="#000"/><rect x="10" y="1" width="1" height="1" fill="#000"/><rect x="2" y="2" width="1" height="1" fill="#000"/><rect x="11" y="2" width="1" height="1" fill="#000"/><rect x="1" y="3" width="1" height="1" fill="#000"/><rect x="12" y="3" width="1" height="1" fill="#000"/><rect x="0" y="4" width="1" height="6" fill="#000"/><rect x="13" y="4" width="1" height="6" fill="#000"/><rect x="1" y="10" width="1" height="1" fill="#000"/><rect x="12" y="10" width="1" height="1" fill="#000"/><rect x="2" y="11" width="1" height="1" fill="#000"/><rect x="11" y="11" width="1" height="1" fill="#000"/><rect x="3" y="12" width="1" height="3" fill="#000"/><rect x="10" y="12" width="1" height="3" fill="#000"/><rect x="4" y="14" width="1" height="1" fill="#000"/><rect x="9" y="14" width="1" height="1" fill="#000"/><rect x="3" y="15" width="1" height="1" fill="#000"/><rect x="10" y="15" width="1" height="1" fill="#000"/><rect x="4" y="16" width="1" height="1" fill="#000"/><rect x="9" y="16" width="1" height="1" fill="#000"/><rect x="3" y="17" width="1" height="1" fill="#000"/><rect x="10" y="17" width="1" height="1" fill="#000"/><rect x="4" y="18" width="1" height="1" fill="#000"/><rect x="9" y="18" width="1" height="1" fill="#000"/><rect x="3" y="19" width="1" height="1" fill="#000"/><rect x="10" y="19" width="1" height="1" fill="#000"/><rect x="4" y="20" width="1" height="1" fill="#000"/><rect x="9" y="20" width="1" height="1" fill="#000"/><rect x="3" y="21" width="1" height="1" fill="#000"/><rect x="10" y="21" width="1" height="1" fill="#000"/><rect x="4" y="21" width="1" height="1" fill="#000"/><rect x="9" y="21" width="1" height="1" fill="#000"/><rect x="5" y="22" width="4" height="1" fill="#000"/></svg><svg class="r" style="left:1795px;top:1484px" width="32" height="34" viewBox="0 0 32 34"><path d="M4.2 16.5 L9 8.4 L11.1 10.2 L14.2 7.1 L27.6 20.9 L18.2 30.5 Z" fill="url(#gE)" stroke="#1a3fd6" stroke-width="1.2" stroke-linejoin="round"/><path d="M11.6 10.4 L14.2 8.1 L26.4 20.8 L23.3 22.2 Z" fill="#eef4ff"/><path d="M11.1 10.2 L23 22.6" stroke="#1a3fd6" stroke-width="1.1"/><path d="M17.3 13.6 L25.7 5 L29.7 8.8 L20.9 17.6 Z" fill="url(#gP)" stroke="#e0901e" stroke-width="0.4"/><g fill="#f6b03a"><rect x="5.2" y="18.2" width="1.5" height="1.5"/><rect x="7.5" y="20.6" width="1.5" height="1.5"/><rect x="9.9" y="23" width="1.5" height="1.5"/><rect x="12.3" y="25.4" width="1.5" height="1.5"/><rect x="14.7" y="27.8" width="1.5" height="1.5"/></g></svg><div class="r" style="left:295px;top:1585px;width:1588px;height:1px;background:#dedede;"></div><div class="r" style="left:300px;top:1553px;width:11px;height:11px;border:1px solid #333;background:#fff"></div><div class="t" style="left:341px;top:1549px;width:41px;text-align:center;font-size:19px;line-height:19px;color:#e4431f;letter-spacing:0.2px">24</div><svg class="r" style="left:375px;top:1549px" width="16" height="16" viewBox="0 0 16 16"><rect x="1.4" y="1.4" width="14" height="14" rx="2.4" fill="#555" opacity="0.45"/><rect x="0.45" y="0.45" width="13.3" height="13.3" rx="2.4" fill="url(#gA)" stroke="#0a35c6" stroke-width="0.9"/><path d="M7 2.3 L2.2 7.1 L3.6 8.5 L6 6.1 V12 H8 V6.1 L10.4 8.5 L11.8 7.1 Z" fill="#fff"/></svg><svg class="r" style="left:395px;top:1549px" width="16" height="16" viewBox="0 0 16 16"><rect x="1.4" y="1.4" width="14" height="14" rx="2.4" fill="#555" opacity="0.45"/><rect x="0.45" y="0.45" width="13.3" height="13.3" rx="2.4" fill="url(#gA)" stroke="#0a35c6" stroke-width="0.9"/><path d="M7 12 L2.2 7.2 L3.6 5.8 L6 8.2 V1.5 H8 V8.2 L10.4 5.8 L11.8 7.2 Z" fill="#fff"/></svg><svg class="r" style="left:483px;top:1533px" width="40" height="44" viewBox="0 0 40 44"><path d="M8.4 7.1 C12 5.8 17 5.6 20.4 6 C27 6.8 33 8 36.8 10.1 C33 12.5 27 14.5 23.5 15.5 C18 12 12 9.5 8.4 7.1 Z" fill="#e9e9f6" stroke="#a0a0b8" stroke-width="0.5"/><path d="M8.4 7.1 C12 9.5 18 12 23.5 15.5 L22 41.6 C17 39 12 34 8.4 30 Z" fill="url(#gIn)"/><path d="M23.5 15.5 C27 14.5 33 12.5 36.8 10.1 L34.5 36 C32 39 27 41 22 41.6 Z" fill="url(#gFr)"/><path d="M23.3 17.8 L35.4 15.8 L33.2 33.3 L23.3 36 Z" fill="#15151c"/><path d="M24.7 19.2 L34.1 17.5 L32.1 32.1 L24.7 34.3 Z" fill="#f0f0f8"/><path d="M2.4 21 H11.4 V16.1 L19.1 25 L11.4 33.9 V28.9 H2.4 Z" fill="url(#gAr)" stroke="#1b7a10" stroke-width="0.8" stroke-linejoin="round"/></svg><svg class="r" style="left:582px;top:1549px" width="19" height="19" viewBox="0 0 19 19"><path d="M3.5 0.5 H14.5 V2.3 H17.5 V4.7 H14.5 V8.5 H17.5 V10.9 H14.5 V17.5 H3.5 V10.9 H0.5 V8.5 H3.5 V4.7 H0.5 V2.3 H3.5 Z" fill="url(#gL)" stroke="#9b7128" stroke-width="1"/><circle cx="10" cy="4.6" r="2.8" fill="#e0c040" opacity="0.8"/><circle cx="9.2" cy="11.5" r="4.1" fill="#17d10f"/></svg><div class="t" style="left:676px;top:1553px;font-size:11px;line-height:11px;color:#3a3946;letter-spacing:0.77px;font-weight:normal;">IN: ANY</div><div class="t" style="left:802px;top:1553px;font-size:11px;line-height:11px;color:#3a3946;letter-spacing:1.11px;font-weight:normal;">0.0.0.0/0</div><div class="t" style="left:1001px;top:1553px;font-size:11px;line-height:11px;color:#3a3946;letter-spacing:1.11px;font-weight:normal;">0.0.0.0/0</div><div class="t" style="left:1253px;top:1553px;font-size:11px;line-height:11px;color:#3a3946;letter-spacing:0.35px;font-weight:normal;">TCP</div><div class="t" style="left:1372px;top:1547px;font-size:11px;line-height:11px;color:#3a3946;letter-spacing:0.79px;font-weight:normal;">Source Port: ANY</div><div class="t" style="left:1367px;top:1560px;font-size:11px;line-height:11px;color:#3a3946;letter-spacing:0.84px;font-weight:normal;">Destination Port: SSH</div><svg class="r" style="left:1726px;top:1546px" width="14" height="23" viewBox="0 0 14 23" shape-rendering="crispEdges"><rect x="4" y="1" width="6" height="1" fill="#ffffff"/><rect x="3" y="2" width="8" height="1" fill="#ffffff"/><rect x="2" y="3" width="10" height="1" fill="#ffffff"/><rect x="1" y="4" width="12" height="6" fill="#ffffff"/><rect x="2" y="10" width="10" height="1" fill="#ffffff"/><rect x="3" y="11" width="8" height="1" fill="#ffffff"/><rect x="4" y="12" width="6" height="3" fill="#ffffff"/><rect x="4" y="15" width="6" height="7" fill="#9a9a9a"/><rect x="5" y="21" width="4" height="1" fill="#9a9a9a"/><rect x="3" y="6" width="7" height="1" fill="#8a8a8a"/><rect x="3" y="7" width="1" height="1" fill="#8a8a8a"/><rect x="9" y="7" width="1" height="1" fill="#8a8a8a"/><rect x="4" y="8" width="1" height="1" fill="#8a8a8a"/><rect x="8" y="8" width="1" height="1" fill="#8a8a8a"/><rect x="5" y="9" width="1" height="1" fill="#8a8a8a"/><rect x="7" y="9" width="1" height="1" fill="#8a8a8a"/><rect x="6" y="10" width="1" height="2" fill="#8a8a8a"/><rect x="6" y="15" width="2" height="6" fill="#6e6e6e"/><rect x="4" y="0" width="6" height="1" fill="#000"/><rect x="3" y="1" width="1" height="1" fill="#000"/><rect x="10" y="1" width="1" height="1" fill="#000"/><rect x="2" y="2" width="1" height="1" fill="#000"/><rect x="11" y="2" width="1" height="1" fill="#000"/><rect x="1" y="3" width="1" height="1" fill="#000"/><rect x="12" y="3" width="1" height="1" fill="#000"/><rect x="0" y="4" width="1" height="6" fill="#000"/><rect x="13" y="4" width="1" height="6" fill="#000"/><rect x="1" y="10" width="1" height="1" fill="#000"/><rect x="12" y="10" width="1" height="1" fill="#000"/><rect x="2" y="11" width="1" height="1" fill="#000"/><rect x="11" y="11" width="1" height="1" fill="#000"/><rect x="3" y="12" width="1" height="3" fill="#000"/><rect x="10" y="12" width="1" height="3" fill="#000"/><rect x="4" y="14" width="1" height="1" fill="#000"/><rect x="9" y="14" width="1" height="1" fill="#000"/><rect x="3" y="15" width="1" height="1" fill="#000"/><rect x="10" y="15" width="1" height="1" fill="#000"/><rect x="4" y="16" width="1" height="1" fill="#000"/><rect x="9" y="16" width="1" height="1" fill="#000"/><rect x="3" y="17" width="1" height="1" fill="#000"/><rect x="10" y="17" width="1" height="1" fill="#000"/><rect x="4" y="18" width="1" height="1" fill="#000"/><rect x="9" y="18" width="1" height="1" fill="#000"/><rect x="3" y="19" width="1" height="1" fill="#000"/><rect x="10" y="19" width="1" height="1" fill="#000"/><rect x="4" y="20" width="1" height="1" fill="#000"/><rect x="9" y="20" width="1" height="1" fill="#000"/><rect x="3" y="21" width="1" height="1" fill="#000"/><rect x="10" y="21" width="1" height="1" fill="#000"/><rect x="4" y="21" width="1" height="1" fill="#000"/><rect x="9" y="21" width="1" height="1" fill="#000"/><rect x="5" y="22" width="4" height="1" fill="#000"/></svg><svg class="r" style="left:1795px;top:1540px" width="32" height="34" viewBox="0 0 32 34"><path d="M4.2 16.5 L9 8.4 L11.1 10.2 L14.2 7.1 L27.6 20.9 L18.2 30.5 Z" fill="url(#gE)" stroke="#1a3fd6" stroke-width="1.2" stroke-linejoin="round"/><path d="M11.6 10.4 L14.2 8.1 L26.4 20.8 L23.3 22.2 Z" fill="#eef4ff"/><path d="M11.1 10.2 L23 22.6" stroke="#1a3fd6" stroke-width="1.1"/><path d="M17.3 13.6 L25.7 5 L29.7 8.8 L20.9 17.6 Z" fill="url(#gP)" stroke="#e0901e" stroke-width="0.4"/><g fill="#f6b03a"><rect x="5.2" y="18.2" width="1.5" height="1.5"/><rect x="7.5" y="20.6" width="1.5" height="1.5"/><rect x="9.9" y="23" width="1.5" height="1.5"/><rect x="12.3" y="25.4" width="1.5" height="1.5"/><rect x="14.7" y="27.8" width="1.5" height="1.5"/></g></svg><svg class="r" style="left:1300px;top:466px" width="264" height="61" viewBox="0 0 264 61"><ellipse cx="132.5" cy="30.2" rx="127.6" ry="26" fill="none" stroke="#fb1414" stroke-width="2.2" transform="rotate(-0.6 132.5 30.2)"/></svg><div class="r" style="left:296px;top:1643px;width:1607px;height:1px;background:#eeeeee;"></div><div class="t" style="left:296px;top:1661px;font-size:13px;line-height:13px;letter-spacing:0.78px;color:#98a6ad;white-space:pre"><span style="color:#3b3f4f">Issabel</span> is licensed under <span style="color:#3b3f4f">GPL</span>. 2006 - 2018.</div>
</body></html>
